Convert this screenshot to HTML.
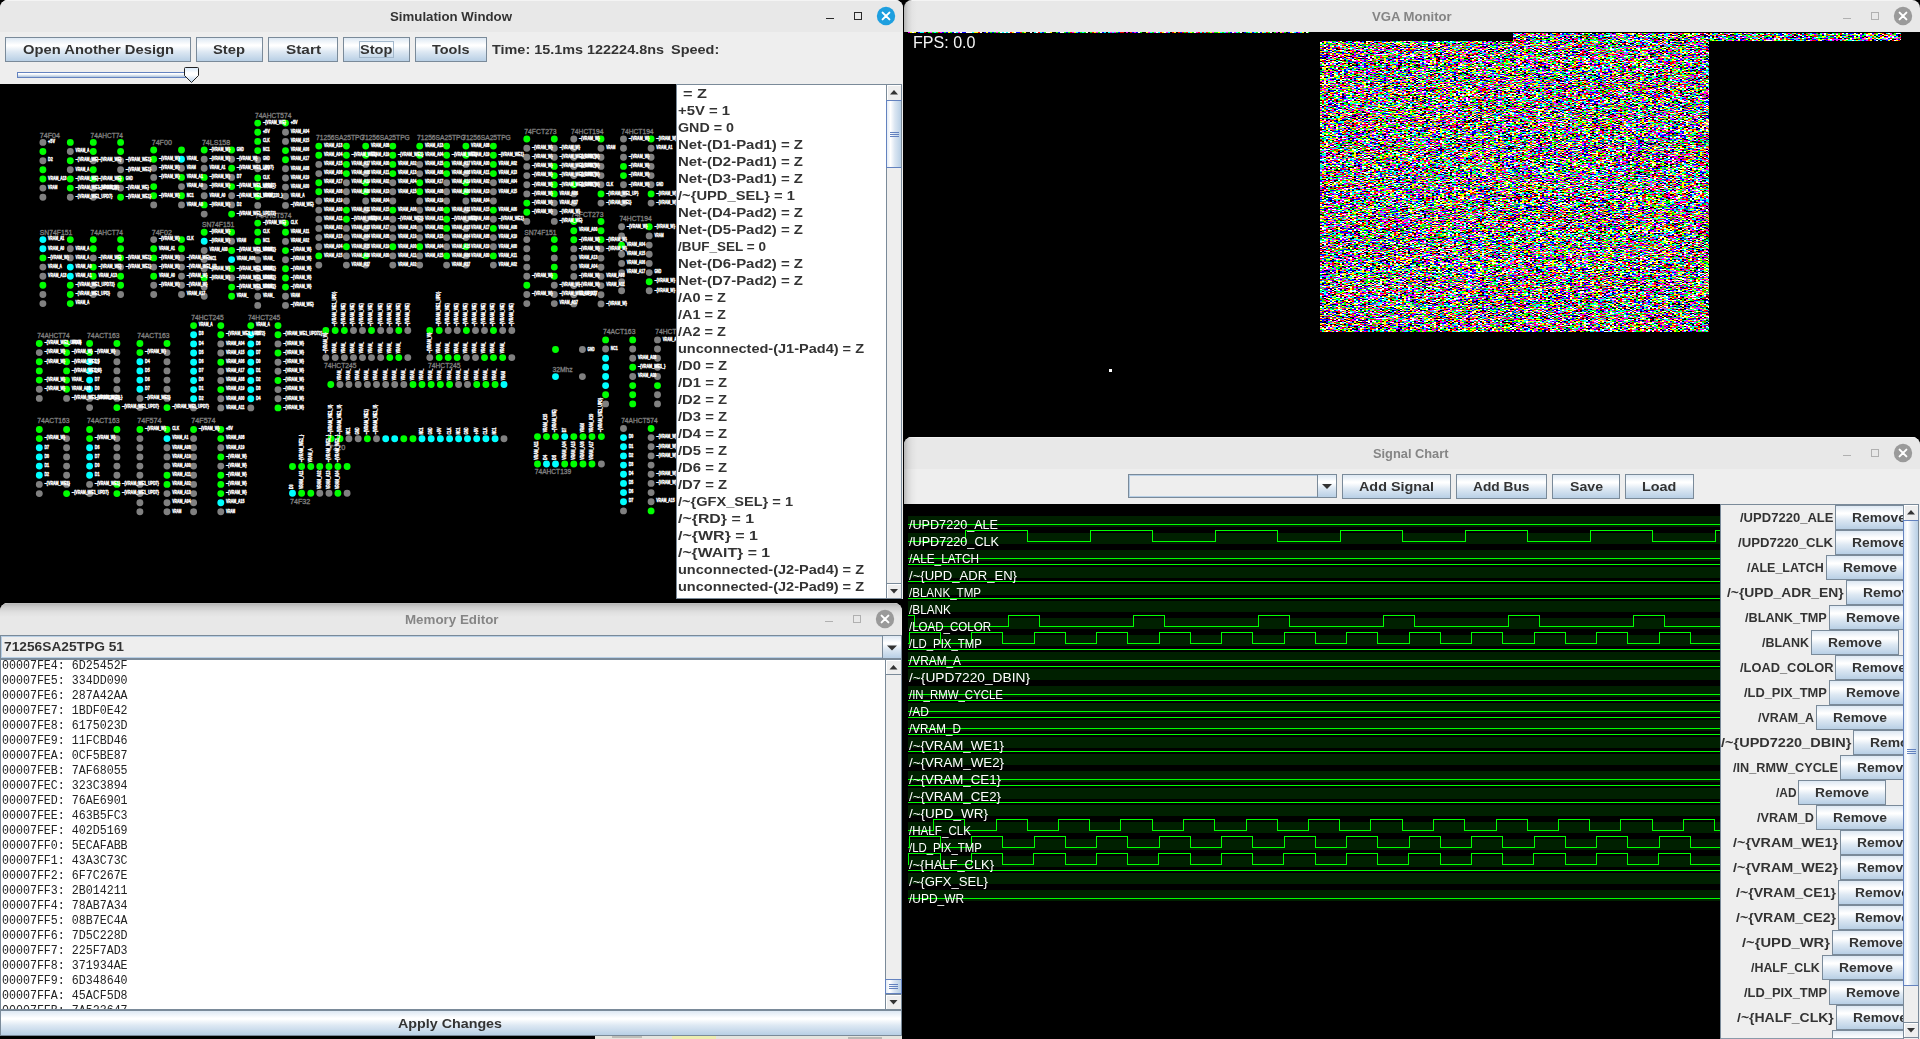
<!DOCTYPE html>
<html><head><meta charset="utf-8"><title>Simulation</title><style>
html,body{margin:0;padding:0;background:#000;overflow:hidden}
body{width:1920px;height:1039px;position:relative;font-family:"Liberation Sans",sans-serif;font-weight:700}
.a{position:absolute;box-sizing:border-box}
.t{position:absolute;white-space:pre;transform-origin:0 50%;display:block}
.btn{border:1px solid #7a8a99;background:linear-gradient(180deg,#dde8f3 0%,#ffffff 30%,#ffffff 34%,#dde8f3 60%,#b8cfe5 100%)}
.m{font-family:"Liberation Mono",monospace}
.tb{background:#e8e8e8;border-top:1px solid #f4f4f4}
.win{background:#eee}
.sbtrack{background:#eee;border-left:1px solid #7a8a99}
.thumbv{border:1px solid #6382bf;background:linear-gradient(90deg,#e4ecf5 0%,#ffffff 25%,#dbe6f2 55%,#b8cfe5 100%)}
.arrbtn{border:1px solid #7a8a99;background:#eee;box-shadow:inset 1px 1px 0 #fff}
</style></head><body>
<div class="a " style="left:0px;top:0px;width:903px;height:599px;background:#eee;border-radius:8px 8px 0 0;overflow:hidden"><div class="a tb" style="left:0px;top:0px;width:903px;height:32px;"></div></div>
<span id="t0" class="t " style="left:390.00px;top:9.70px;font-size:13px;line-height:13px;color:#333;transform:scaleX(1.0187);">Simulation Window</span>
<div class="a " style="left:826px;top:18px;width:8px;height:1px;background:#2a2a2a"></div>
<div class="a " style="left:854px;top:12px;width:8px;height:8px;border:1px solid #2a2a2a"></div>
<svg class="a" style="left:876px;top:6px" width="20" height="20"><circle cx="10" cy="10" r="9.2" fill="#1e9fdf"/><path d="M6.6 6.6L13.4 13.4M13.4 6.6L6.6 13.4" stroke="#fff" stroke-width="2" stroke-linecap="round"/></svg>
<div class="a btn" style="left:5px;top:37px;width:186px;height:25px;"></div><span id="t1" class="t " style="left:22.70px;top:43.00px;font-size:13px;line-height:13px;color:#333;transform:scaleX(1.1341);">Open Another Design</span>
<div class="a btn" style="left:196px;top:37px;width:67px;height:25px;"></div><span id="t2" class="t " style="left:213.40px;top:43.00px;font-size:13px;line-height:13px;color:#333;transform:scaleX(1.1359);">Step</span>
<div class="a btn" style="left:268px;top:37px;width:70px;height:25px;"></div><span id="t3" class="t " style="left:285.50px;top:43.00px;font-size:13px;line-height:13px;color:#333;transform:scaleX(1.1814);">Start</span>
<div class="a btn" style="left:343px;top:37px;width:67px;height:25px;"></div><div class="a " style="left:359px;top:41px;width:35px;height:17px;border:1px solid #a3b8cc;box-sizing:border-box;"></div><span id="t4" class="t " style="left:360.30px;top:43.00px;font-size:13px;line-height:13px;color:#333;transform:scaleX(1.1215);">Stop</span>
<div class="a btn" style="left:415px;top:37px;width:72px;height:25px;"></div><span id="t5" class="t " style="left:432.00px;top:43.00px;font-size:13px;line-height:13px;color:#333;transform:scaleX(1.1127);">Tools</span>
<span id="t6" class="t " style="left:492.40px;top:43.00px;font-size:13px;line-height:13px;color:#333;transform:scaleX(1.1086);">Time: 15.1ms 122224.8ns</span>
<span id="t7" class="t " style="left:670.60px;top:43.00px;font-size:13px;line-height:13px;color:#333;transform:scaleX(1.1120);">Speed:</span>
<div class="a " style="left:17px;top:72px;width:169px;height:6px;border:1px solid #6382bf;background:linear-gradient(180deg,#fff 0,#fdfeff 25%,#a9c0da 100%)"></div>
<svg class="a" style="left:183px;top:66px" width="18" height="19"><defs><linearGradient id="sg" x1="0" y1="0" x2="0" y2="1"><stop offset="0" stop-color="#d6e8fa"/><stop offset="0.35" stop-color="#fff"/><stop offset="0.5" stop-color="#fff"/><stop offset="1" stop-color="#b4cde8"/></linearGradient></defs><path d="M2.5 1.5h12a1 1 0 0 1 1 1v7l-7 7l-7 -7v-7a1 1 0 0 1 1 -1z" fill="url(#sg)" stroke="#222" stroke-width="1"/></svg>
<div class="a " style="left:0px;top:84px;width:676px;height:515px;background:#000"></div>
<svg class="a" style="left:0;top:84px" width="676" height="515" viewBox="0 84 676 515">
<g font-family="Liberation Sans, sans-serif" font-size="6.8" font-weight="400" fill="#808080" stroke="#808080" stroke-width="0.3"><text x="39.8" y="137.7" textLength="20.2" lengthAdjust="spacingAndGlyphs">74F04</text><text x="90.6" y="137.7" textLength="32.4" lengthAdjust="spacingAndGlyphs">74AHCT74</text><text x="151.7" y="144.8" textLength="20.2" lengthAdjust="spacingAndGlyphs">74F00</text><text x="201.9" y="144.8" textLength="28.3" lengthAdjust="spacingAndGlyphs">74LS158</text><text x="255.0" y="117.7" textLength="36.4" lengthAdjust="spacingAndGlyphs">74AHCT574</text><text x="316.0" y="140.4" textLength="48.6" lengthAdjust="spacingAndGlyphs">71256SA25TPG</text><text x="361.2" y="140.4" textLength="48.6" lengthAdjust="spacingAndGlyphs">71256SA25TPG</text><text x="417.0" y="140.4" textLength="48.6" lengthAdjust="spacingAndGlyphs">71256SA25TPG</text><text x="462.2" y="140.4" textLength="48.6" lengthAdjust="spacingAndGlyphs">71256SA25TPG</text><text x="524.2" y="133.6" textLength="32.4" lengthAdjust="spacingAndGlyphs">74FCT273</text><text x="571.1" y="133.6" textLength="32.4" lengthAdjust="spacingAndGlyphs">74HCT194</text><text x="621.2" y="133.6" textLength="32.4" lengthAdjust="spacingAndGlyphs">74HCT194</text><text x="39.8" y="234.6" textLength="32.4" lengthAdjust="spacingAndGlyphs">SN74F151</text><text x="90.6" y="234.6" textLength="32.4" lengthAdjust="spacingAndGlyphs">74AHCT74</text><text x="151.7" y="234.6" textLength="20.2" lengthAdjust="spacingAndGlyphs">74F02</text><text x="201.9" y="226.6" textLength="32.4" lengthAdjust="spacingAndGlyphs">SN74F151</text><text x="255.0" y="217.8" textLength="36.4" lengthAdjust="spacingAndGlyphs">74AHCT574</text><text x="571.1" y="216.9" textLength="32.4" lengthAdjust="spacingAndGlyphs">74FCT273</text><text x="619.4" y="221.3" textLength="32.4" lengthAdjust="spacingAndGlyphs">74HCT194</text><text x="524.2" y="234.6" textLength="32.4" lengthAdjust="spacingAndGlyphs">SN74F151</text><text x="37.2" y="337.9" textLength="32.4" lengthAdjust="spacingAndGlyphs">74AHCT74</text><text x="87.1" y="337.9" textLength="32.4" lengthAdjust="spacingAndGlyphs">74ACT163</text><text x="137.2" y="337.9" textLength="32.4" lengthAdjust="spacingAndGlyphs">74ACT163</text><text x="191.3" y="320.2" textLength="32.4" lengthAdjust="spacingAndGlyphs">74HCT245</text><text x="247.9" y="320.2" textLength="32.4" lengthAdjust="spacingAndGlyphs">74HCT245</text><text x="37.2" y="423.4" textLength="32.4" lengthAdjust="spacingAndGlyphs">74ACT163</text><text x="87.1" y="423.4" textLength="32.4" lengthAdjust="spacingAndGlyphs">74ACT163</text><text x="137.2" y="423.4" textLength="24.3" lengthAdjust="spacingAndGlyphs">74F574</text><text x="191.3" y="423.4" textLength="24.3" lengthAdjust="spacingAndGlyphs">74F574</text><text x="603.0" y="334.0" textLength="32.4" lengthAdjust="spacingAndGlyphs">74ACT163</text><text x="655.2" y="334.0" textLength="32.4" lengthAdjust="spacingAndGlyphs">74HCT194</text><text x="621.2" y="423.4" textLength="36.4" lengthAdjust="spacingAndGlyphs">74AHCT574</text><text x="324.0" y="368.4" textLength="32.4" lengthAdjust="spacingAndGlyphs">74HCT245</text><text x="428.0" y="368.4" textLength="32.4" lengthAdjust="spacingAndGlyphs">74HCT245</text><text x="329.0" y="449.6" textLength="16.2" lengthAdjust="spacingAndGlyphs">7220</text><text x="290.0" y="503.7" textLength="20.2" lengthAdjust="spacingAndGlyphs">74F32</text><text x="534.8" y="474.4" textLength="36.4" lengthAdjust="spacingAndGlyphs">74AHCT139</text><text x="552.5" y="371.6" textLength="20.2" lengthAdjust="spacingAndGlyphs">32Mhz</text></g>
<path d="M42.9 142.4m-3.45 0a3.45 3.45 0 1 0 6.90 0a3.45 3.45 0 1 0 -6.90 0M42.9 160.7m-3.45 0a3.45 3.45 0 1 0 6.90 0a3.45 3.45 0 1 0 -6.90 0M42.9 188.1m-3.45 0a3.45 3.45 0 1 0 6.90 0a3.45 3.45 0 1 0 -6.90 0M42.9 197.3m-3.45 0a3.45 3.45 0 1 0 6.90 0a3.45 3.45 0 1 0 -6.90 0M70.3 151.5m-3.45 0a3.45 3.45 0 1 0 6.90 0a3.45 3.45 0 1 0 -6.90 0M70.3 169.8m-3.45 0a3.45 3.45 0 1 0 6.90 0a3.45 3.45 0 1 0 -6.90 0M70.3 197.3m-3.45 0a3.45 3.45 0 1 0 6.90 0a3.45 3.45 0 1 0 -6.90 0M93.3 160.7m-3.45 0a3.45 3.45 0 1 0 6.90 0a3.45 3.45 0 1 0 -6.90 0M93.3 188.1m-3.45 0a3.45 3.45 0 1 0 6.90 0a3.45 3.45 0 1 0 -6.90 0M93.3 197.3m-3.45 0a3.45 3.45 0 1 0 6.90 0a3.45 3.45 0 1 0 -6.90 0M120.6 160.7m-3.45 0a3.45 3.45 0 1 0 6.90 0a3.45 3.45 0 1 0 -6.90 0M120.6 169.8m-3.45 0a3.45 3.45 0 1 0 6.90 0a3.45 3.45 0 1 0 -6.90 0M120.6 188.1m-3.45 0a3.45 3.45 0 1 0 6.90 0a3.45 3.45 0 1 0 -6.90 0M153.7 168.3m-3.45 0a3.45 3.45 0 1 0 6.90 0a3.45 3.45 0 1 0 -6.90 0M153.7 177.4m-3.45 0a3.45 3.45 0 1 0 6.90 0a3.45 3.45 0 1 0 -6.90 0M153.7 204.9m-3.45 0a3.45 3.45 0 1 0 6.90 0a3.45 3.45 0 1 0 -6.90 0M181.5 168.3m-3.45 0a3.45 3.45 0 1 0 6.90 0a3.45 3.45 0 1 0 -6.90 0M181.5 186.6m-3.45 0a3.45 3.45 0 1 0 6.90 0a3.45 3.45 0 1 0 -6.90 0M181.5 204.9m-3.45 0a3.45 3.45 0 1 0 6.90 0a3.45 3.45 0 1 0 -6.90 0M204.2 159.2m-3.45 0a3.45 3.45 0 1 0 6.90 0a3.45 3.45 0 1 0 -6.90 0M204.2 168.3m-3.45 0a3.45 3.45 0 1 0 6.90 0a3.45 3.45 0 1 0 -6.90 0M204.2 186.6m-3.45 0a3.45 3.45 0 1 0 6.90 0a3.45 3.45 0 1 0 -6.90 0M204.2 195.8m-3.45 0a3.45 3.45 0 1 0 6.90 0a3.45 3.45 0 1 0 -6.90 0M204.2 214.1m-3.45 0a3.45 3.45 0 1 0 6.90 0a3.45 3.45 0 1 0 -6.90 0M231.6 159.2m-3.45 0a3.45 3.45 0 1 0 6.90 0a3.45 3.45 0 1 0 -6.90 0M231.6 177.4m-3.45 0a3.45 3.45 0 1 0 6.90 0a3.45 3.45 0 1 0 -6.90 0M231.6 195.8m-3.45 0a3.45 3.45 0 1 0 6.90 0a3.45 3.45 0 1 0 -6.90 0M231.6 204.9m-3.45 0a3.45 3.45 0 1 0 6.90 0a3.45 3.45 0 1 0 -6.90 0M257.7 159.7m-3.45 0a3.45 3.45 0 1 0 6.90 0a3.45 3.45 0 1 0 -6.90 0M257.7 168.8m-3.45 0a3.45 3.45 0 1 0 6.90 0a3.45 3.45 0 1 0 -6.90 0M257.7 205.4m-3.45 0a3.45 3.45 0 1 0 6.90 0a3.45 3.45 0 1 0 -6.90 0M285.5 132.2m-3.45 0a3.45 3.45 0 1 0 6.90 0a3.45 3.45 0 1 0 -6.90 0M285.5 141.4m-3.45 0a3.45 3.45 0 1 0 6.90 0a3.45 3.45 0 1 0 -6.90 0M285.5 168.8m-3.45 0a3.45 3.45 0 1 0 6.90 0a3.45 3.45 0 1 0 -6.90 0M285.5 178.0m-3.45 0a3.45 3.45 0 1 0 6.90 0a3.45 3.45 0 1 0 -6.90 0M285.5 187.1m-3.45 0a3.45 3.45 0 1 0 6.90 0a3.45 3.45 0 1 0 -6.90 0M285.5 196.3m-3.45 0a3.45 3.45 0 1 0 6.90 0a3.45 3.45 0 1 0 -6.90 0M285.5 205.4m-3.45 0a3.45 3.45 0 1 0 6.90 0a3.45 3.45 0 1 0 -6.90 0M318.8 164.4m-3.45 0a3.45 3.45 0 1 0 6.90 0a3.45 3.45 0 1 0 -6.90 0M318.8 173.6m-3.45 0a3.45 3.45 0 1 0 6.90 0a3.45 3.45 0 1 0 -6.90 0M318.8 201.0m-3.45 0a3.45 3.45 0 1 0 6.90 0a3.45 3.45 0 1 0 -6.90 0M318.8 210.1m-3.45 0a3.45 3.45 0 1 0 6.90 0a3.45 3.45 0 1 0 -6.90 0M318.8 219.3m-3.45 0a3.45 3.45 0 1 0 6.90 0a3.45 3.45 0 1 0 -6.90 0M318.8 228.4m-3.45 0a3.45 3.45 0 1 0 6.90 0a3.45 3.45 0 1 0 -6.90 0M318.8 237.6m-3.45 0a3.45 3.45 0 1 0 6.90 0a3.45 3.45 0 1 0 -6.90 0M318.8 246.8m-3.45 0a3.45 3.45 0 1 0 6.90 0a3.45 3.45 0 1 0 -6.90 0M318.8 265.1m-3.45 0a3.45 3.45 0 1 0 6.90 0a3.45 3.45 0 1 0 -6.90 0M346.4 182.7m-3.45 0a3.45 3.45 0 1 0 6.90 0a3.45 3.45 0 1 0 -6.90 0M346.4 191.8m-3.45 0a3.45 3.45 0 1 0 6.90 0a3.45 3.45 0 1 0 -6.90 0M346.4 201.0m-3.45 0a3.45 3.45 0 1 0 6.90 0a3.45 3.45 0 1 0 -6.90 0M346.4 228.4m-3.45 0a3.45 3.45 0 1 0 6.90 0a3.45 3.45 0 1 0 -6.90 0M346.4 237.6m-3.45 0a3.45 3.45 0 1 0 6.90 0a3.45 3.45 0 1 0 -6.90 0M346.4 255.9m-3.45 0a3.45 3.45 0 1 0 6.90 0a3.45 3.45 0 1 0 -6.90 0M346.4 265.1m-3.45 0a3.45 3.45 0 1 0 6.90 0a3.45 3.45 0 1 0 -6.90 0M365.7 164.4m-3.45 0a3.45 3.45 0 1 0 6.90 0a3.45 3.45 0 1 0 -6.90 0M365.7 173.6m-3.45 0a3.45 3.45 0 1 0 6.90 0a3.45 3.45 0 1 0 -6.90 0M365.7 201.0m-3.45 0a3.45 3.45 0 1 0 6.90 0a3.45 3.45 0 1 0 -6.90 0M365.7 210.1m-3.45 0a3.45 3.45 0 1 0 6.90 0a3.45 3.45 0 1 0 -6.90 0M365.7 219.3m-3.45 0a3.45 3.45 0 1 0 6.90 0a3.45 3.45 0 1 0 -6.90 0M365.7 228.4m-3.45 0a3.45 3.45 0 1 0 6.90 0a3.45 3.45 0 1 0 -6.90 0M365.7 237.6m-3.45 0a3.45 3.45 0 1 0 6.90 0a3.45 3.45 0 1 0 -6.90 0M365.7 246.8m-3.45 0a3.45 3.45 0 1 0 6.90 0a3.45 3.45 0 1 0 -6.90 0M365.7 265.1m-3.45 0a3.45 3.45 0 1 0 6.90 0a3.45 3.45 0 1 0 -6.90 0M392.8 182.7m-3.45 0a3.45 3.45 0 1 0 6.90 0a3.45 3.45 0 1 0 -6.90 0M392.8 191.8m-3.45 0a3.45 3.45 0 1 0 6.90 0a3.45 3.45 0 1 0 -6.90 0M392.8 201.0m-3.45 0a3.45 3.45 0 1 0 6.90 0a3.45 3.45 0 1 0 -6.90 0M392.8 219.3m-3.45 0a3.45 3.45 0 1 0 6.90 0a3.45 3.45 0 1 0 -6.90 0M392.8 228.4m-3.45 0a3.45 3.45 0 1 0 6.90 0a3.45 3.45 0 1 0 -6.90 0M392.8 237.6m-3.45 0a3.45 3.45 0 1 0 6.90 0a3.45 3.45 0 1 0 -6.90 0M392.8 255.9m-3.45 0a3.45 3.45 0 1 0 6.90 0a3.45 3.45 0 1 0 -6.90 0M392.8 265.1m-3.45 0a3.45 3.45 0 1 0 6.90 0a3.45 3.45 0 1 0 -6.90 0M419.7 164.4m-3.45 0a3.45 3.45 0 1 0 6.90 0a3.45 3.45 0 1 0 -6.90 0M419.7 173.6m-3.45 0a3.45 3.45 0 1 0 6.90 0a3.45 3.45 0 1 0 -6.90 0M419.7 201.0m-3.45 0a3.45 3.45 0 1 0 6.90 0a3.45 3.45 0 1 0 -6.90 0M419.7 210.1m-3.45 0a3.45 3.45 0 1 0 6.90 0a3.45 3.45 0 1 0 -6.90 0M419.7 219.3m-3.45 0a3.45 3.45 0 1 0 6.90 0a3.45 3.45 0 1 0 -6.90 0M419.7 228.4m-3.45 0a3.45 3.45 0 1 0 6.90 0a3.45 3.45 0 1 0 -6.90 0M419.7 237.6m-3.45 0a3.45 3.45 0 1 0 6.90 0a3.45 3.45 0 1 0 -6.90 0M419.7 255.9m-3.45 0a3.45 3.45 0 1 0 6.90 0a3.45 3.45 0 1 0 -6.90 0M419.7 265.1m-3.45 0a3.45 3.45 0 1 0 6.90 0a3.45 3.45 0 1 0 -6.90 0M446.6 182.7m-3.45 0a3.45 3.45 0 1 0 6.90 0a3.45 3.45 0 1 0 -6.90 0M446.6 191.8m-3.45 0a3.45 3.45 0 1 0 6.90 0a3.45 3.45 0 1 0 -6.90 0M446.6 201.0m-3.45 0a3.45 3.45 0 1 0 6.90 0a3.45 3.45 0 1 0 -6.90 0M446.6 237.6m-3.45 0a3.45 3.45 0 1 0 6.90 0a3.45 3.45 0 1 0 -6.90 0M446.6 246.8m-3.45 0a3.45 3.45 0 1 0 6.90 0a3.45 3.45 0 1 0 -6.90 0M446.6 265.1m-3.45 0a3.45 3.45 0 1 0 6.90 0a3.45 3.45 0 1 0 -6.90 0M465.9 164.4m-3.45 0a3.45 3.45 0 1 0 6.90 0a3.45 3.45 0 1 0 -6.90 0M465.9 173.6m-3.45 0a3.45 3.45 0 1 0 6.90 0a3.45 3.45 0 1 0 -6.90 0M465.9 201.0m-3.45 0a3.45 3.45 0 1 0 6.90 0a3.45 3.45 0 1 0 -6.90 0M465.9 210.1m-3.45 0a3.45 3.45 0 1 0 6.90 0a3.45 3.45 0 1 0 -6.90 0M465.9 219.3m-3.45 0a3.45 3.45 0 1 0 6.90 0a3.45 3.45 0 1 0 -6.90 0M465.9 228.4m-3.45 0a3.45 3.45 0 1 0 6.90 0a3.45 3.45 0 1 0 -6.90 0M465.9 237.6m-3.45 0a3.45 3.45 0 1 0 6.90 0a3.45 3.45 0 1 0 -6.90 0M465.9 255.9m-3.45 0a3.45 3.45 0 1 0 6.90 0a3.45 3.45 0 1 0 -6.90 0M465.9 265.1m-3.45 0a3.45 3.45 0 1 0 6.90 0a3.45 3.45 0 1 0 -6.90 0M493.4 182.7m-3.45 0a3.45 3.45 0 1 0 6.90 0a3.45 3.45 0 1 0 -6.90 0M493.4 191.8m-3.45 0a3.45 3.45 0 1 0 6.90 0a3.45 3.45 0 1 0 -6.90 0M493.4 201.0m-3.45 0a3.45 3.45 0 1 0 6.90 0a3.45 3.45 0 1 0 -6.90 0M493.4 219.3m-3.45 0a3.45 3.45 0 1 0 6.90 0a3.45 3.45 0 1 0 -6.90 0M493.4 237.6m-3.45 0a3.45 3.45 0 1 0 6.90 0a3.45 3.45 0 1 0 -6.90 0M493.4 246.8m-3.45 0a3.45 3.45 0 1 0 6.90 0a3.45 3.45 0 1 0 -6.90 0M493.4 265.1m-3.45 0a3.45 3.45 0 1 0 6.90 0a3.45 3.45 0 1 0 -6.90 0M526.8 148.2m-3.45 0a3.45 3.45 0 1 0 6.90 0a3.45 3.45 0 1 0 -6.90 0M526.8 157.3m-3.45 0a3.45 3.45 0 1 0 6.90 0a3.45 3.45 0 1 0 -6.90 0M526.8 166.4m-3.45 0a3.45 3.45 0 1 0 6.90 0a3.45 3.45 0 1 0 -6.90 0M526.8 175.6m-3.45 0a3.45 3.45 0 1 0 6.90 0a3.45 3.45 0 1 0 -6.90 0M526.8 184.8m-3.45 0a3.45 3.45 0 1 0 6.90 0a3.45 3.45 0 1 0 -6.90 0M526.8 193.9m-3.45 0a3.45 3.45 0 1 0 6.90 0a3.45 3.45 0 1 0 -6.90 0M526.8 221.4m-3.45 0a3.45 3.45 0 1 0 6.90 0a3.45 3.45 0 1 0 -6.90 0M554.3 148.2m-3.45 0a3.45 3.45 0 1 0 6.90 0a3.45 3.45 0 1 0 -6.90 0M554.3 157.3m-3.45 0a3.45 3.45 0 1 0 6.90 0a3.45 3.45 0 1 0 -6.90 0M554.3 203.1m-3.45 0a3.45 3.45 0 1 0 6.90 0a3.45 3.45 0 1 0 -6.90 0M554.3 212.2m-3.45 0a3.45 3.45 0 1 0 6.90 0a3.45 3.45 0 1 0 -6.90 0M554.3 221.4m-3.45 0a3.45 3.45 0 1 0 6.90 0a3.45 3.45 0 1 0 -6.90 0M573.8 139.0m-3.45 0a3.45 3.45 0 1 0 6.90 0a3.45 3.45 0 1 0 -6.90 0M573.8 148.2m-3.45 0a3.45 3.45 0 1 0 6.90 0a3.45 3.45 0 1 0 -6.90 0M573.8 157.3m-3.45 0a3.45 3.45 0 1 0 6.90 0a3.45 3.45 0 1 0 -6.90 0M573.8 166.4m-3.45 0a3.45 3.45 0 1 0 6.90 0a3.45 3.45 0 1 0 -6.90 0M573.8 175.6m-3.45 0a3.45 3.45 0 1 0 6.90 0a3.45 3.45 0 1 0 -6.90 0M573.8 193.9m-3.45 0a3.45 3.45 0 1 0 6.90 0a3.45 3.45 0 1 0 -6.90 0M573.8 203.1m-3.45 0a3.45 3.45 0 1 0 6.90 0a3.45 3.45 0 1 0 -6.90 0M601.0 148.2m-3.45 0a3.45 3.45 0 1 0 6.90 0a3.45 3.45 0 1 0 -6.90 0M601.0 157.3m-3.45 0a3.45 3.45 0 1 0 6.90 0a3.45 3.45 0 1 0 -6.90 0M601.0 166.4m-3.45 0a3.45 3.45 0 1 0 6.90 0a3.45 3.45 0 1 0 -6.90 0M601.0 175.6m-3.45 0a3.45 3.45 0 1 0 6.90 0a3.45 3.45 0 1 0 -6.90 0M601.0 184.8m-3.45 0a3.45 3.45 0 1 0 6.90 0a3.45 3.45 0 1 0 -6.90 0M601.0 203.1m-3.45 0a3.45 3.45 0 1 0 6.90 0a3.45 3.45 0 1 0 -6.90 0M623.5 139.0m-3.45 0a3.45 3.45 0 1 0 6.90 0a3.45 3.45 0 1 0 -6.90 0M623.5 148.2m-3.45 0a3.45 3.45 0 1 0 6.90 0a3.45 3.45 0 1 0 -6.90 0M623.5 157.3m-3.45 0a3.45 3.45 0 1 0 6.90 0a3.45 3.45 0 1 0 -6.90 0M623.5 184.8m-3.45 0a3.45 3.45 0 1 0 6.90 0a3.45 3.45 0 1 0 -6.90 0M623.5 193.9m-3.45 0a3.45 3.45 0 1 0 6.90 0a3.45 3.45 0 1 0 -6.90 0M623.5 203.1m-3.45 0a3.45 3.45 0 1 0 6.90 0a3.45 3.45 0 1 0 -6.90 0M651.1 148.2m-3.45 0a3.45 3.45 0 1 0 6.90 0a3.45 3.45 0 1 0 -6.90 0M651.1 157.3m-3.45 0a3.45 3.45 0 1 0 6.90 0a3.45 3.45 0 1 0 -6.90 0M651.1 166.4m-3.45 0a3.45 3.45 0 1 0 6.90 0a3.45 3.45 0 1 0 -6.90 0M651.1 175.6m-3.45 0a3.45 3.45 0 1 0 6.90 0a3.45 3.45 0 1 0 -6.90 0M651.1 184.8m-3.45 0a3.45 3.45 0 1 0 6.90 0a3.45 3.45 0 1 0 -6.90 0M651.1 203.1m-3.45 0a3.45 3.45 0 1 0 6.90 0a3.45 3.45 0 1 0 -6.90 0M42.9 267.1m-3.45 0a3.45 3.45 0 1 0 6.90 0a3.45 3.45 0 1 0 -6.90 0M42.9 276.2m-3.45 0a3.45 3.45 0 1 0 6.90 0a3.45 3.45 0 1 0 -6.90 0M42.9 294.5m-3.45 0a3.45 3.45 0 1 0 6.90 0a3.45 3.45 0 1 0 -6.90 0M42.9 303.6m-3.45 0a3.45 3.45 0 1 0 6.90 0a3.45 3.45 0 1 0 -6.90 0M70.3 248.8m-3.45 0a3.45 3.45 0 1 0 6.90 0a3.45 3.45 0 1 0 -6.90 0M70.3 257.9m-3.45 0a3.45 3.45 0 1 0 6.90 0a3.45 3.45 0 1 0 -6.90 0M93.3 257.9m-3.45 0a3.45 3.45 0 1 0 6.90 0a3.45 3.45 0 1 0 -6.90 0M93.3 285.3m-3.45 0a3.45 3.45 0 1 0 6.90 0a3.45 3.45 0 1 0 -6.90 0M93.3 294.5m-3.45 0a3.45 3.45 0 1 0 6.90 0a3.45 3.45 0 1 0 -6.90 0M120.6 267.1m-3.45 0a3.45 3.45 0 1 0 6.90 0a3.45 3.45 0 1 0 -6.90 0M120.6 294.5m-3.45 0a3.45 3.45 0 1 0 6.90 0a3.45 3.45 0 1 0 -6.90 0M153.7 239.6m-3.45 0a3.45 3.45 0 1 0 6.90 0a3.45 3.45 0 1 0 -6.90 0M153.7 267.1m-3.45 0a3.45 3.45 0 1 0 6.90 0a3.45 3.45 0 1 0 -6.90 0M153.7 285.3m-3.45 0a3.45 3.45 0 1 0 6.90 0a3.45 3.45 0 1 0 -6.90 0M153.7 294.5m-3.45 0a3.45 3.45 0 1 0 6.90 0a3.45 3.45 0 1 0 -6.90 0M181.5 257.9m-3.45 0a3.45 3.45 0 1 0 6.90 0a3.45 3.45 0 1 0 -6.90 0M181.5 267.1m-3.45 0a3.45 3.45 0 1 0 6.90 0a3.45 3.45 0 1 0 -6.90 0M181.5 276.2m-3.45 0a3.45 3.45 0 1 0 6.90 0a3.45 3.45 0 1 0 -6.90 0M181.5 285.3m-3.45 0a3.45 3.45 0 1 0 6.90 0a3.45 3.45 0 1 0 -6.90 0M181.5 294.5m-3.45 0a3.45 3.45 0 1 0 6.90 0a3.45 3.45 0 1 0 -6.90 0M204.2 250.5m-3.45 0a3.45 3.45 0 1 0 6.90 0a3.45 3.45 0 1 0 -6.90 0M204.2 259.6m-3.45 0a3.45 3.45 0 1 0 6.90 0a3.45 3.45 0 1 0 -6.90 0M204.2 268.8m-3.45 0a3.45 3.45 0 1 0 6.90 0a3.45 3.45 0 1 0 -6.90 0M204.2 287.1m-3.45 0a3.45 3.45 0 1 0 6.90 0a3.45 3.45 0 1 0 -6.90 0M204.2 296.2m-3.45 0a3.45 3.45 0 1 0 6.90 0a3.45 3.45 0 1 0 -6.90 0M231.6 241.3m-3.45 0a3.45 3.45 0 1 0 6.90 0a3.45 3.45 0 1 0 -6.90 0M231.6 277.9m-3.45 0a3.45 3.45 0 1 0 6.90 0a3.45 3.45 0 1 0 -6.90 0M257.7 250.6m-3.45 0a3.45 3.45 0 1 0 6.90 0a3.45 3.45 0 1 0 -6.90 0M257.7 259.7m-3.45 0a3.45 3.45 0 1 0 6.90 0a3.45 3.45 0 1 0 -6.90 0M257.7 268.8m-3.45 0a3.45 3.45 0 1 0 6.90 0a3.45 3.45 0 1 0 -6.90 0M257.7 278.0m-3.45 0a3.45 3.45 0 1 0 6.90 0a3.45 3.45 0 1 0 -6.90 0M257.7 287.1m-3.45 0a3.45 3.45 0 1 0 6.90 0a3.45 3.45 0 1 0 -6.90 0M257.7 296.3m-3.45 0a3.45 3.45 0 1 0 6.90 0a3.45 3.45 0 1 0 -6.90 0M257.7 305.4m-3.45 0a3.45 3.45 0 1 0 6.90 0a3.45 3.45 0 1 0 -6.90 0M285.5 241.4m-3.45 0a3.45 3.45 0 1 0 6.90 0a3.45 3.45 0 1 0 -6.90 0M285.5 259.7m-3.45 0a3.45 3.45 0 1 0 6.90 0a3.45 3.45 0 1 0 -6.90 0M285.5 296.3m-3.45 0a3.45 3.45 0 1 0 6.90 0a3.45 3.45 0 1 0 -6.90 0M285.5 305.4m-3.45 0a3.45 3.45 0 1 0 6.90 0a3.45 3.45 0 1 0 -6.90 0M573.8 248.9m-3.45 0a3.45 3.45 0 1 0 6.90 0a3.45 3.45 0 1 0 -6.90 0M573.8 258.1m-3.45 0a3.45 3.45 0 1 0 6.90 0a3.45 3.45 0 1 0 -6.90 0M573.8 267.2m-3.45 0a3.45 3.45 0 1 0 6.90 0a3.45 3.45 0 1 0 -6.90 0M573.8 276.4m-3.45 0a3.45 3.45 0 1 0 6.90 0a3.45 3.45 0 1 0 -6.90 0M573.8 285.6m-3.45 0a3.45 3.45 0 1 0 6.90 0a3.45 3.45 0 1 0 -6.90 0M573.8 294.7m-3.45 0a3.45 3.45 0 1 0 6.90 0a3.45 3.45 0 1 0 -6.90 0M573.8 303.9m-3.45 0a3.45 3.45 0 1 0 6.90 0a3.45 3.45 0 1 0 -6.90 0M601.0 248.9m-3.45 0a3.45 3.45 0 1 0 6.90 0a3.45 3.45 0 1 0 -6.90 0M601.0 258.1m-3.45 0a3.45 3.45 0 1 0 6.90 0a3.45 3.45 0 1 0 -6.90 0M601.0 267.2m-3.45 0a3.45 3.45 0 1 0 6.90 0a3.45 3.45 0 1 0 -6.90 0M601.0 276.4m-3.45 0a3.45 3.45 0 1 0 6.90 0a3.45 3.45 0 1 0 -6.90 0M601.0 285.6m-3.45 0a3.45 3.45 0 1 0 6.90 0a3.45 3.45 0 1 0 -6.90 0M601.0 294.7m-3.45 0a3.45 3.45 0 1 0 6.90 0a3.45 3.45 0 1 0 -6.90 0M601.0 303.9m-3.45 0a3.45 3.45 0 1 0 6.90 0a3.45 3.45 0 1 0 -6.90 0M621.6 226.8m-3.45 0a3.45 3.45 0 1 0 6.90 0a3.45 3.45 0 1 0 -6.90 0M621.6 235.9m-3.45 0a3.45 3.45 0 1 0 6.90 0a3.45 3.45 0 1 0 -6.90 0M621.6 254.2m-3.45 0a3.45 3.45 0 1 0 6.90 0a3.45 3.45 0 1 0 -6.90 0M621.6 263.4m-3.45 0a3.45 3.45 0 1 0 6.90 0a3.45 3.45 0 1 0 -6.90 0M621.6 272.6m-3.45 0a3.45 3.45 0 1 0 6.90 0a3.45 3.45 0 1 0 -6.90 0M621.6 281.7m-3.45 0a3.45 3.45 0 1 0 6.90 0a3.45 3.45 0 1 0 -6.90 0M621.6 290.8m-3.45 0a3.45 3.45 0 1 0 6.90 0a3.45 3.45 0 1 0 -6.90 0M649.2 235.9m-3.45 0a3.45 3.45 0 1 0 6.90 0a3.45 3.45 0 1 0 -6.90 0M649.2 245.1m-3.45 0a3.45 3.45 0 1 0 6.90 0a3.45 3.45 0 1 0 -6.90 0M649.2 254.2m-3.45 0a3.45 3.45 0 1 0 6.90 0a3.45 3.45 0 1 0 -6.90 0M649.2 263.4m-3.45 0a3.45 3.45 0 1 0 6.90 0a3.45 3.45 0 1 0 -6.90 0M649.2 272.6m-3.45 0a3.45 3.45 0 1 0 6.90 0a3.45 3.45 0 1 0 -6.90 0M649.2 290.8m-3.45 0a3.45 3.45 0 1 0 6.90 0a3.45 3.45 0 1 0 -6.90 0M526.8 239.6m-3.45 0a3.45 3.45 0 1 0 6.90 0a3.45 3.45 0 1 0 -6.90 0M526.8 248.8m-3.45 0a3.45 3.45 0 1 0 6.90 0a3.45 3.45 0 1 0 -6.90 0M526.8 257.9m-3.45 0a3.45 3.45 0 1 0 6.90 0a3.45 3.45 0 1 0 -6.90 0M526.8 267.1m-3.45 0a3.45 3.45 0 1 0 6.90 0a3.45 3.45 0 1 0 -6.90 0M526.8 276.2m-3.45 0a3.45 3.45 0 1 0 6.90 0a3.45 3.45 0 1 0 -6.90 0M526.8 294.5m-3.45 0a3.45 3.45 0 1 0 6.90 0a3.45 3.45 0 1 0 -6.90 0M526.8 303.6m-3.45 0a3.45 3.45 0 1 0 6.90 0a3.45 3.45 0 1 0 -6.90 0M554.3 257.9m-3.45 0a3.45 3.45 0 1 0 6.90 0a3.45 3.45 0 1 0 -6.90 0M554.3 285.3m-3.45 0a3.45 3.45 0 1 0 6.90 0a3.45 3.45 0 1 0 -6.90 0M554.3 294.5m-3.45 0a3.45 3.45 0 1 0 6.90 0a3.45 3.45 0 1 0 -6.90 0M554.3 303.6m-3.45 0a3.45 3.45 0 1 0 6.90 0a3.45 3.45 0 1 0 -6.90 0M39.3 352.6m-3.45 0a3.45 3.45 0 1 0 6.90 0a3.45 3.45 0 1 0 -6.90 0M39.3 389.2m-3.45 0a3.45 3.45 0 1 0 6.90 0a3.45 3.45 0 1 0 -6.90 0M39.3 398.4m-3.45 0a3.45 3.45 0 1 0 6.90 0a3.45 3.45 0 1 0 -6.90 0M66.6 398.4m-3.45 0a3.45 3.45 0 1 0 6.90 0a3.45 3.45 0 1 0 -6.90 0M89.6 398.4m-3.45 0a3.45 3.45 0 1 0 6.90 0a3.45 3.45 0 1 0 -6.90 0M89.6 407.6m-3.45 0a3.45 3.45 0 1 0 6.90 0a3.45 3.45 0 1 0 -6.90 0M116.9 352.6m-3.45 0a3.45 3.45 0 1 0 6.90 0a3.45 3.45 0 1 0 -6.90 0M116.9 361.8m-3.45 0a3.45 3.45 0 1 0 6.90 0a3.45 3.45 0 1 0 -6.90 0M116.9 370.9m-3.45 0a3.45 3.45 0 1 0 6.90 0a3.45 3.45 0 1 0 -6.90 0M116.9 380.1m-3.45 0a3.45 3.45 0 1 0 6.90 0a3.45 3.45 0 1 0 -6.90 0M116.9 389.2m-3.45 0a3.45 3.45 0 1 0 6.90 0a3.45 3.45 0 1 0 -6.90 0M116.9 398.4m-3.45 0a3.45 3.45 0 1 0 6.90 0a3.45 3.45 0 1 0 -6.90 0M139.9 398.4m-3.45 0a3.45 3.45 0 1 0 6.90 0a3.45 3.45 0 1 0 -6.90 0M139.9 407.6m-3.45 0a3.45 3.45 0 1 0 6.90 0a3.45 3.45 0 1 0 -6.90 0M167.0 352.6m-3.45 0a3.45 3.45 0 1 0 6.90 0a3.45 3.45 0 1 0 -6.90 0M167.0 361.8m-3.45 0a3.45 3.45 0 1 0 6.90 0a3.45 3.45 0 1 0 -6.90 0M167.0 370.9m-3.45 0a3.45 3.45 0 1 0 6.90 0a3.45 3.45 0 1 0 -6.90 0M167.0 380.1m-3.45 0a3.45 3.45 0 1 0 6.90 0a3.45 3.45 0 1 0 -6.90 0M167.0 389.2m-3.45 0a3.45 3.45 0 1 0 6.90 0a3.45 3.45 0 1 0 -6.90 0M167.0 398.4m-3.45 0a3.45 3.45 0 1 0 6.90 0a3.45 3.45 0 1 0 -6.90 0M193.6 407.9m-3.45 0a3.45 3.45 0 1 0 6.90 0a3.45 3.45 0 1 0 -6.90 0M220.8 343.9m-3.45 0a3.45 3.45 0 1 0 6.90 0a3.45 3.45 0 1 0 -6.90 0M220.8 353.0m-3.45 0a3.45 3.45 0 1 0 6.90 0a3.45 3.45 0 1 0 -6.90 0M220.8 371.3m-3.45 0a3.45 3.45 0 1 0 6.90 0a3.45 3.45 0 1 0 -6.90 0M220.8 380.5m-3.45 0a3.45 3.45 0 1 0 6.90 0a3.45 3.45 0 1 0 -6.90 0M220.8 398.8m-3.45 0a3.45 3.45 0 1 0 6.90 0a3.45 3.45 0 1 0 -6.90 0M220.8 407.9m-3.45 0a3.45 3.45 0 1 0 6.90 0a3.45 3.45 0 1 0 -6.90 0M250.8 407.9m-3.45 0a3.45 3.45 0 1 0 6.90 0a3.45 3.45 0 1 0 -6.90 0M278.0 343.9m-3.45 0a3.45 3.45 0 1 0 6.90 0a3.45 3.45 0 1 0 -6.90 0M278.0 362.2m-3.45 0a3.45 3.45 0 1 0 6.90 0a3.45 3.45 0 1 0 -6.90 0M278.0 371.3m-3.45 0a3.45 3.45 0 1 0 6.90 0a3.45 3.45 0 1 0 -6.90 0M278.0 389.6m-3.45 0a3.45 3.45 0 1 0 6.90 0a3.45 3.45 0 1 0 -6.90 0M278.0 398.8m-3.45 0a3.45 3.45 0 1 0 6.90 0a3.45 3.45 0 1 0 -6.90 0M39.3 484.4m-3.45 0a3.45 3.45 0 1 0 6.90 0a3.45 3.45 0 1 0 -6.90 0M39.3 493.6m-3.45 0a3.45 3.45 0 1 0 6.90 0a3.45 3.45 0 1 0 -6.90 0M66.6 438.6m-3.45 0a3.45 3.45 0 1 0 6.90 0a3.45 3.45 0 1 0 -6.90 0M66.6 447.8m-3.45 0a3.45 3.45 0 1 0 6.90 0a3.45 3.45 0 1 0 -6.90 0M66.6 456.9m-3.45 0a3.45 3.45 0 1 0 6.90 0a3.45 3.45 0 1 0 -6.90 0M66.6 466.1m-3.45 0a3.45 3.45 0 1 0 6.90 0a3.45 3.45 0 1 0 -6.90 0M66.6 475.2m-3.45 0a3.45 3.45 0 1 0 6.90 0a3.45 3.45 0 1 0 -6.90 0M66.6 484.4m-3.45 0a3.45 3.45 0 1 0 6.90 0a3.45 3.45 0 1 0 -6.90 0M89.6 484.4m-3.45 0a3.45 3.45 0 1 0 6.90 0a3.45 3.45 0 1 0 -6.90 0M89.6 493.6m-3.45 0a3.45 3.45 0 1 0 6.90 0a3.45 3.45 0 1 0 -6.90 0M116.9 438.6m-3.45 0a3.45 3.45 0 1 0 6.90 0a3.45 3.45 0 1 0 -6.90 0M116.9 447.8m-3.45 0a3.45 3.45 0 1 0 6.90 0a3.45 3.45 0 1 0 -6.90 0M116.9 456.9m-3.45 0a3.45 3.45 0 1 0 6.90 0a3.45 3.45 0 1 0 -6.90 0M116.9 466.1m-3.45 0a3.45 3.45 0 1 0 6.90 0a3.45 3.45 0 1 0 -6.90 0M116.9 475.2m-3.45 0a3.45 3.45 0 1 0 6.90 0a3.45 3.45 0 1 0 -6.90 0M139.9 438.6m-3.45 0a3.45 3.45 0 1 0 6.90 0a3.45 3.45 0 1 0 -6.90 0M139.9 447.8m-3.45 0a3.45 3.45 0 1 0 6.90 0a3.45 3.45 0 1 0 -6.90 0M139.9 456.9m-3.45 0a3.45 3.45 0 1 0 6.90 0a3.45 3.45 0 1 0 -6.90 0M139.9 466.1m-3.45 0a3.45 3.45 0 1 0 6.90 0a3.45 3.45 0 1 0 -6.90 0M139.9 475.2m-3.45 0a3.45 3.45 0 1 0 6.90 0a3.45 3.45 0 1 0 -6.90 0M139.9 484.4m-3.45 0a3.45 3.45 0 1 0 6.90 0a3.45 3.45 0 1 0 -6.90 0M139.9 493.6m-3.45 0a3.45 3.45 0 1 0 6.90 0a3.45 3.45 0 1 0 -6.90 0M139.9 502.7m-3.45 0a3.45 3.45 0 1 0 6.90 0a3.45 3.45 0 1 0 -6.90 0M139.9 511.8m-3.45 0a3.45 3.45 0 1 0 6.90 0a3.45 3.45 0 1 0 -6.90 0M167.0 447.8m-3.45 0a3.45 3.45 0 1 0 6.90 0a3.45 3.45 0 1 0 -6.90 0M167.0 456.9m-3.45 0a3.45 3.45 0 1 0 6.90 0a3.45 3.45 0 1 0 -6.90 0M167.0 466.1m-3.45 0a3.45 3.45 0 1 0 6.90 0a3.45 3.45 0 1 0 -6.90 0M167.0 493.6m-3.45 0a3.45 3.45 0 1 0 6.90 0a3.45 3.45 0 1 0 -6.90 0M167.0 502.7m-3.45 0a3.45 3.45 0 1 0 6.90 0a3.45 3.45 0 1 0 -6.90 0M167.0 511.8m-3.45 0a3.45 3.45 0 1 0 6.90 0a3.45 3.45 0 1 0 -6.90 0M193.6 438.6m-3.45 0a3.45 3.45 0 1 0 6.90 0a3.45 3.45 0 1 0 -6.90 0M193.6 447.8m-3.45 0a3.45 3.45 0 1 0 6.90 0a3.45 3.45 0 1 0 -6.90 0M193.6 456.9m-3.45 0a3.45 3.45 0 1 0 6.90 0a3.45 3.45 0 1 0 -6.90 0M193.6 466.1m-3.45 0a3.45 3.45 0 1 0 6.90 0a3.45 3.45 0 1 0 -6.90 0M193.6 475.2m-3.45 0a3.45 3.45 0 1 0 6.90 0a3.45 3.45 0 1 0 -6.90 0M193.6 484.4m-3.45 0a3.45 3.45 0 1 0 6.90 0a3.45 3.45 0 1 0 -6.90 0M193.6 493.6m-3.45 0a3.45 3.45 0 1 0 6.90 0a3.45 3.45 0 1 0 -6.90 0M193.6 502.7m-3.45 0a3.45 3.45 0 1 0 6.90 0a3.45 3.45 0 1 0 -6.90 0M193.6 511.8m-3.45 0a3.45 3.45 0 1 0 6.90 0a3.45 3.45 0 1 0 -6.90 0M220.8 447.8m-3.45 0a3.45 3.45 0 1 0 6.90 0a3.45 3.45 0 1 0 -6.90 0M220.8 466.1m-3.45 0a3.45 3.45 0 1 0 6.90 0a3.45 3.45 0 1 0 -6.90 0M220.8 511.8m-3.45 0a3.45 3.45 0 1 0 6.90 0a3.45 3.45 0 1 0 -6.90 0M605.6 349.0m-3.45 0a3.45 3.45 0 1 0 6.90 0a3.45 3.45 0 1 0 -6.90 0M605.6 403.9m-3.45 0a3.45 3.45 0 1 0 6.90 0a3.45 3.45 0 1 0 -6.90 0M632.7 349.0m-3.45 0a3.45 3.45 0 1 0 6.90 0a3.45 3.45 0 1 0 -6.90 0M632.7 358.2m-3.45 0a3.45 3.45 0 1 0 6.90 0a3.45 3.45 0 1 0 -6.90 0M632.7 376.5m-3.45 0a3.45 3.45 0 1 0 6.90 0a3.45 3.45 0 1 0 -6.90 0M657.5 339.9m-3.45 0a3.45 3.45 0 1 0 6.90 0a3.45 3.45 0 1 0 -6.90 0M657.5 349.0m-3.45 0a3.45 3.45 0 1 0 6.90 0a3.45 3.45 0 1 0 -6.90 0M657.5 358.2m-3.45 0a3.45 3.45 0 1 0 6.90 0a3.45 3.45 0 1 0 -6.90 0M657.5 367.3m-3.45 0a3.45 3.45 0 1 0 6.90 0a3.45 3.45 0 1 0 -6.90 0M657.5 376.5m-3.45 0a3.45 3.45 0 1 0 6.90 0a3.45 3.45 0 1 0 -6.90 0M657.5 394.8m-3.45 0a3.45 3.45 0 1 0 6.90 0a3.45 3.45 0 1 0 -6.90 0M657.5 403.9m-3.45 0a3.45 3.45 0 1 0 6.90 0a3.45 3.45 0 1 0 -6.90 0M684.9 339.9m-3.45 0a3.45 3.45 0 1 0 6.90 0a3.45 3.45 0 1 0 -6.90 0M684.9 349.0m-3.45 0a3.45 3.45 0 1 0 6.90 0a3.45 3.45 0 1 0 -6.90 0M684.9 358.2m-3.45 0a3.45 3.45 0 1 0 6.90 0a3.45 3.45 0 1 0 -6.90 0M684.9 367.3m-3.45 0a3.45 3.45 0 1 0 6.90 0a3.45 3.45 0 1 0 -6.90 0M684.9 376.5m-3.45 0a3.45 3.45 0 1 0 6.90 0a3.45 3.45 0 1 0 -6.90 0M684.9 385.6m-3.45 0a3.45 3.45 0 1 0 6.90 0a3.45 3.45 0 1 0 -6.90 0M684.9 394.8m-3.45 0a3.45 3.45 0 1 0 6.90 0a3.45 3.45 0 1 0 -6.90 0M684.9 403.9m-3.45 0a3.45 3.45 0 1 0 6.90 0a3.45 3.45 0 1 0 -6.90 0M623.5 428.5m-3.45 0a3.45 3.45 0 1 0 6.90 0a3.45 3.45 0 1 0 -6.90 0M623.5 510.9m-3.45 0a3.45 3.45 0 1 0 6.90 0a3.45 3.45 0 1 0 -6.90 0M651.1 437.6m-3.45 0a3.45 3.45 0 1 0 6.90 0a3.45 3.45 0 1 0 -6.90 0M651.1 446.8m-3.45 0a3.45 3.45 0 1 0 6.90 0a3.45 3.45 0 1 0 -6.90 0M651.1 455.9m-3.45 0a3.45 3.45 0 1 0 6.90 0a3.45 3.45 0 1 0 -6.90 0M651.1 465.1m-3.45 0a3.45 3.45 0 1 0 6.90 0a3.45 3.45 0 1 0 -6.90 0M651.1 474.2m-3.45 0a3.45 3.45 0 1 0 6.90 0a3.45 3.45 0 1 0 -6.90 0M651.1 483.4m-3.45 0a3.45 3.45 0 1 0 6.90 0a3.45 3.45 0 1 0 -6.90 0M651.1 492.6m-3.45 0a3.45 3.45 0 1 0 6.90 0a3.45 3.45 0 1 0 -6.90 0M651.1 501.7m-3.45 0a3.45 3.45 0 1 0 6.90 0a3.45 3.45 0 1 0 -6.90 0M353.5 330.5m-3.45 0a3.45 3.45 0 1 0 6.90 0a3.45 3.45 0 1 0 -6.90 0M362.5 330.5m-3.45 0a3.45 3.45 0 1 0 6.90 0a3.45 3.45 0 1 0 -6.90 0M380.7 330.5m-3.45 0a3.45 3.45 0 1 0 6.90 0a3.45 3.45 0 1 0 -6.90 0M389.8 330.5m-3.45 0a3.45 3.45 0 1 0 6.90 0a3.45 3.45 0 1 0 -6.90 0M407.8 330.5m-3.45 0a3.45 3.45 0 1 0 6.90 0a3.45 3.45 0 1 0 -6.90 0M325.8 357.6m-3.45 0a3.45 3.45 0 1 0 6.90 0a3.45 3.45 0 1 0 -6.90 0M335.2 357.6m-3.45 0a3.45 3.45 0 1 0 6.90 0a3.45 3.45 0 1 0 -6.90 0M344.4 357.6m-3.45 0a3.45 3.45 0 1 0 6.90 0a3.45 3.45 0 1 0 -6.90 0M353.5 357.6m-3.45 0a3.45 3.45 0 1 0 6.90 0a3.45 3.45 0 1 0 -6.90 0M362.5 357.6m-3.45 0a3.45 3.45 0 1 0 6.90 0a3.45 3.45 0 1 0 -6.90 0M371.5 357.6m-3.45 0a3.45 3.45 0 1 0 6.90 0a3.45 3.45 0 1 0 -6.90 0M380.7 357.6m-3.45 0a3.45 3.45 0 1 0 6.90 0a3.45 3.45 0 1 0 -6.90 0M407.8 357.6m-3.45 0a3.45 3.45 0 1 0 6.90 0a3.45 3.45 0 1 0 -6.90 0M448.2 330.5m-3.45 0a3.45 3.45 0 1 0 6.90 0a3.45 3.45 0 1 0 -6.90 0M457.2 330.5m-3.45 0a3.45 3.45 0 1 0 6.90 0a3.45 3.45 0 1 0 -6.90 0M475.5 330.5m-3.45 0a3.45 3.45 0 1 0 6.90 0a3.45 3.45 0 1 0 -6.90 0M484.5 330.5m-3.45 0a3.45 3.45 0 1 0 6.90 0a3.45 3.45 0 1 0 -6.90 0M502.7 330.5m-3.45 0a3.45 3.45 0 1 0 6.90 0a3.45 3.45 0 1 0 -6.90 0M511.8 330.5m-3.45 0a3.45 3.45 0 1 0 6.90 0a3.45 3.45 0 1 0 -6.90 0M429.8 357.6m-3.45 0a3.45 3.45 0 1 0 6.90 0a3.45 3.45 0 1 0 -6.90 0M466.4 357.6m-3.45 0a3.45 3.45 0 1 0 6.90 0a3.45 3.45 0 1 0 -6.90 0M475.5 357.6m-3.45 0a3.45 3.45 0 1 0 6.90 0a3.45 3.45 0 1 0 -6.90 0M511.8 357.6m-3.45 0a3.45 3.45 0 1 0 6.90 0a3.45 3.45 0 1 0 -6.90 0M340.0 384.5m-3.45 0a3.45 3.45 0 1 0 6.90 0a3.45 3.45 0 1 0 -6.90 0M348.9 384.5m-3.45 0a3.45 3.45 0 1 0 6.90 0a3.45 3.45 0 1 0 -6.90 0M358.2 384.5m-3.45 0a3.45 3.45 0 1 0 6.90 0a3.45 3.45 0 1 0 -6.90 0M367.4 384.5m-3.45 0a3.45 3.45 0 1 0 6.90 0a3.45 3.45 0 1 0 -6.90 0M376.5 384.5m-3.45 0a3.45 3.45 0 1 0 6.90 0a3.45 3.45 0 1 0 -6.90 0M385.7 384.5m-3.45 0a3.45 3.45 0 1 0 6.90 0a3.45 3.45 0 1 0 -6.90 0M394.7 384.5m-3.45 0a3.45 3.45 0 1 0 6.90 0a3.45 3.45 0 1 0 -6.90 0M403.8 384.5m-3.45 0a3.45 3.45 0 1 0 6.90 0a3.45 3.45 0 1 0 -6.90 0M458.6 384.5m-3.45 0a3.45 3.45 0 1 0 6.90 0a3.45 3.45 0 1 0 -6.90 0M467.5 384.5m-3.45 0a3.45 3.45 0 1 0 6.90 0a3.45 3.45 0 1 0 -6.90 0M348.9 438.7m-3.45 0a3.45 3.45 0 1 0 6.90 0a3.45 3.45 0 1 0 -6.90 0M358.2 438.7m-3.45 0a3.45 3.45 0 1 0 6.90 0a3.45 3.45 0 1 0 -6.90 0M376.5 438.7m-3.45 0a3.45 3.45 0 1 0 6.90 0a3.45 3.45 0 1 0 -6.90 0M504.0 438.7m-3.45 0a3.45 3.45 0 1 0 6.90 0a3.45 3.45 0 1 0 -6.90 0M319.8 493.3m-3.45 0a3.45 3.45 0 1 0 6.90 0a3.45 3.45 0 1 0 -6.90 0M329.0 493.3m-3.45 0a3.45 3.45 0 1 0 6.90 0a3.45 3.45 0 1 0 -6.90 0M347.1 493.3m-3.45 0a3.45 3.45 0 1 0 6.90 0a3.45 3.45 0 1 0 -6.90 0M601.4 464.0m-3.45 0a3.45 3.45 0 1 0 6.90 0a3.45 3.45 0 1 0 -6.90 0M582.4 376.6m-3.45 0a3.45 3.45 0 1 0 6.90 0a3.45 3.45 0 1 0 -6.90 0M582.4 349.5m-3.45 0a3.45 3.45 0 1 0 6.90 0a3.45 3.45 0 1 0 -6.90 0" fill="#808080"/>
<path d="M42.9 151.5m-3.45 0a3.45 3.45 0 1 0 6.90 0a3.45 3.45 0 1 0 -6.90 0M42.9 169.8m-3.45 0a3.45 3.45 0 1 0 6.90 0a3.45 3.45 0 1 0 -6.90 0M42.9 179.0m-3.45 0a3.45 3.45 0 1 0 6.90 0a3.45 3.45 0 1 0 -6.90 0M70.3 142.4m-3.45 0a3.45 3.45 0 1 0 6.90 0a3.45 3.45 0 1 0 -6.90 0M70.3 160.7m-3.45 0a3.45 3.45 0 1 0 6.90 0a3.45 3.45 0 1 0 -6.90 0M70.3 179.0m-3.45 0a3.45 3.45 0 1 0 6.90 0a3.45 3.45 0 1 0 -6.90 0M70.3 188.1m-3.45 0a3.45 3.45 0 1 0 6.90 0a3.45 3.45 0 1 0 -6.90 0M93.3 142.4m-3.45 0a3.45 3.45 0 1 0 6.90 0a3.45 3.45 0 1 0 -6.90 0M93.3 151.5m-3.45 0a3.45 3.45 0 1 0 6.90 0a3.45 3.45 0 1 0 -6.90 0M93.3 169.8m-3.45 0a3.45 3.45 0 1 0 6.90 0a3.45 3.45 0 1 0 -6.90 0M93.3 179.0m-3.45 0a3.45 3.45 0 1 0 6.90 0a3.45 3.45 0 1 0 -6.90 0M120.6 142.4m-3.45 0a3.45 3.45 0 1 0 6.90 0a3.45 3.45 0 1 0 -6.90 0M120.6 151.5m-3.45 0a3.45 3.45 0 1 0 6.90 0a3.45 3.45 0 1 0 -6.90 0M120.6 179.0m-3.45 0a3.45 3.45 0 1 0 6.90 0a3.45 3.45 0 1 0 -6.90 0M120.6 197.3m-3.45 0a3.45 3.45 0 1 0 6.90 0a3.45 3.45 0 1 0 -6.90 0M153.7 150.0m-3.45 0a3.45 3.45 0 1 0 6.90 0a3.45 3.45 0 1 0 -6.90 0M153.7 159.2m-3.45 0a3.45 3.45 0 1 0 6.90 0a3.45 3.45 0 1 0 -6.90 0M153.7 186.6m-3.45 0a3.45 3.45 0 1 0 6.90 0a3.45 3.45 0 1 0 -6.90 0M153.7 195.8m-3.45 0a3.45 3.45 0 1 0 6.90 0a3.45 3.45 0 1 0 -6.90 0M181.5 150.0m-3.45 0a3.45 3.45 0 1 0 6.90 0a3.45 3.45 0 1 0 -6.90 0M181.5 177.4m-3.45 0a3.45 3.45 0 1 0 6.90 0a3.45 3.45 0 1 0 -6.90 0M181.5 195.8m-3.45 0a3.45 3.45 0 1 0 6.90 0a3.45 3.45 0 1 0 -6.90 0M204.2 150.0m-3.45 0a3.45 3.45 0 1 0 6.90 0a3.45 3.45 0 1 0 -6.90 0M204.2 177.4m-3.45 0a3.45 3.45 0 1 0 6.90 0a3.45 3.45 0 1 0 -6.90 0M204.2 204.9m-3.45 0a3.45 3.45 0 1 0 6.90 0a3.45 3.45 0 1 0 -6.90 0M231.6 150.0m-3.45 0a3.45 3.45 0 1 0 6.90 0a3.45 3.45 0 1 0 -6.90 0M231.6 168.3m-3.45 0a3.45 3.45 0 1 0 6.90 0a3.45 3.45 0 1 0 -6.90 0M231.6 186.6m-3.45 0a3.45 3.45 0 1 0 6.90 0a3.45 3.45 0 1 0 -6.90 0M231.6 214.1m-3.45 0a3.45 3.45 0 1 0 6.90 0a3.45 3.45 0 1 0 -6.90 0M257.7 123.1m-3.45 0a3.45 3.45 0 1 0 6.90 0a3.45 3.45 0 1 0 -6.90 0M257.7 132.2m-3.45 0a3.45 3.45 0 1 0 6.90 0a3.45 3.45 0 1 0 -6.90 0M257.7 141.4m-3.45 0a3.45 3.45 0 1 0 6.90 0a3.45 3.45 0 1 0 -6.90 0M257.7 150.6m-3.45 0a3.45 3.45 0 1 0 6.90 0a3.45 3.45 0 1 0 -6.90 0M257.7 178.0m-3.45 0a3.45 3.45 0 1 0 6.90 0a3.45 3.45 0 1 0 -6.90 0M257.7 187.1m-3.45 0a3.45 3.45 0 1 0 6.90 0a3.45 3.45 0 1 0 -6.90 0M257.7 196.3m-3.45 0a3.45 3.45 0 1 0 6.90 0a3.45 3.45 0 1 0 -6.90 0M285.5 123.1m-3.45 0a3.45 3.45 0 1 0 6.90 0a3.45 3.45 0 1 0 -6.90 0M285.5 150.6m-3.45 0a3.45 3.45 0 1 0 6.90 0a3.45 3.45 0 1 0 -6.90 0M285.5 159.7m-3.45 0a3.45 3.45 0 1 0 6.90 0a3.45 3.45 0 1 0 -6.90 0M318.8 146.1m-3.45 0a3.45 3.45 0 1 0 6.90 0a3.45 3.45 0 1 0 -6.90 0M318.8 155.2m-3.45 0a3.45 3.45 0 1 0 6.90 0a3.45 3.45 0 1 0 -6.90 0M318.8 182.7m-3.45 0a3.45 3.45 0 1 0 6.90 0a3.45 3.45 0 1 0 -6.90 0M318.8 191.8m-3.45 0a3.45 3.45 0 1 0 6.90 0a3.45 3.45 0 1 0 -6.90 0M318.8 255.9m-3.45 0a3.45 3.45 0 1 0 6.90 0a3.45 3.45 0 1 0 -6.90 0M346.4 146.1m-3.45 0a3.45 3.45 0 1 0 6.90 0a3.45 3.45 0 1 0 -6.90 0M346.4 155.2m-3.45 0a3.45 3.45 0 1 0 6.90 0a3.45 3.45 0 1 0 -6.90 0M346.4 164.4m-3.45 0a3.45 3.45 0 1 0 6.90 0a3.45 3.45 0 1 0 -6.90 0M346.4 173.6m-3.45 0a3.45 3.45 0 1 0 6.90 0a3.45 3.45 0 1 0 -6.90 0M346.4 210.1m-3.45 0a3.45 3.45 0 1 0 6.90 0a3.45 3.45 0 1 0 -6.90 0M346.4 219.3m-3.45 0a3.45 3.45 0 1 0 6.90 0a3.45 3.45 0 1 0 -6.90 0M346.4 246.8m-3.45 0a3.45 3.45 0 1 0 6.90 0a3.45 3.45 0 1 0 -6.90 0M365.7 146.1m-3.45 0a3.45 3.45 0 1 0 6.90 0a3.45 3.45 0 1 0 -6.90 0M365.7 155.2m-3.45 0a3.45 3.45 0 1 0 6.90 0a3.45 3.45 0 1 0 -6.90 0M365.7 182.7m-3.45 0a3.45 3.45 0 1 0 6.90 0a3.45 3.45 0 1 0 -6.90 0M365.7 191.8m-3.45 0a3.45 3.45 0 1 0 6.90 0a3.45 3.45 0 1 0 -6.90 0M365.7 255.9m-3.45 0a3.45 3.45 0 1 0 6.90 0a3.45 3.45 0 1 0 -6.90 0M392.8 146.1m-3.45 0a3.45 3.45 0 1 0 6.90 0a3.45 3.45 0 1 0 -6.90 0M392.8 155.2m-3.45 0a3.45 3.45 0 1 0 6.90 0a3.45 3.45 0 1 0 -6.90 0M392.8 164.4m-3.45 0a3.45 3.45 0 1 0 6.90 0a3.45 3.45 0 1 0 -6.90 0M392.8 173.6m-3.45 0a3.45 3.45 0 1 0 6.90 0a3.45 3.45 0 1 0 -6.90 0M392.8 210.1m-3.45 0a3.45 3.45 0 1 0 6.90 0a3.45 3.45 0 1 0 -6.90 0M392.8 246.8m-3.45 0a3.45 3.45 0 1 0 6.90 0a3.45 3.45 0 1 0 -6.90 0M419.7 146.1m-3.45 0a3.45 3.45 0 1 0 6.90 0a3.45 3.45 0 1 0 -6.90 0M419.7 155.2m-3.45 0a3.45 3.45 0 1 0 6.90 0a3.45 3.45 0 1 0 -6.90 0M419.7 182.7m-3.45 0a3.45 3.45 0 1 0 6.90 0a3.45 3.45 0 1 0 -6.90 0M419.7 191.8m-3.45 0a3.45 3.45 0 1 0 6.90 0a3.45 3.45 0 1 0 -6.90 0M419.7 246.8m-3.45 0a3.45 3.45 0 1 0 6.90 0a3.45 3.45 0 1 0 -6.90 0M446.6 146.1m-3.45 0a3.45 3.45 0 1 0 6.90 0a3.45 3.45 0 1 0 -6.90 0M446.6 155.2m-3.45 0a3.45 3.45 0 1 0 6.90 0a3.45 3.45 0 1 0 -6.90 0M446.6 164.4m-3.45 0a3.45 3.45 0 1 0 6.90 0a3.45 3.45 0 1 0 -6.90 0M446.6 173.6m-3.45 0a3.45 3.45 0 1 0 6.90 0a3.45 3.45 0 1 0 -6.90 0M446.6 210.1m-3.45 0a3.45 3.45 0 1 0 6.90 0a3.45 3.45 0 1 0 -6.90 0M446.6 219.3m-3.45 0a3.45 3.45 0 1 0 6.90 0a3.45 3.45 0 1 0 -6.90 0M446.6 228.4m-3.45 0a3.45 3.45 0 1 0 6.90 0a3.45 3.45 0 1 0 -6.90 0M446.6 255.9m-3.45 0a3.45 3.45 0 1 0 6.90 0a3.45 3.45 0 1 0 -6.90 0M465.9 146.1m-3.45 0a3.45 3.45 0 1 0 6.90 0a3.45 3.45 0 1 0 -6.90 0M465.9 155.2m-3.45 0a3.45 3.45 0 1 0 6.90 0a3.45 3.45 0 1 0 -6.90 0M465.9 182.7m-3.45 0a3.45 3.45 0 1 0 6.90 0a3.45 3.45 0 1 0 -6.90 0M465.9 191.8m-3.45 0a3.45 3.45 0 1 0 6.90 0a3.45 3.45 0 1 0 -6.90 0M465.9 246.8m-3.45 0a3.45 3.45 0 1 0 6.90 0a3.45 3.45 0 1 0 -6.90 0M493.4 146.1m-3.45 0a3.45 3.45 0 1 0 6.90 0a3.45 3.45 0 1 0 -6.90 0M493.4 155.2m-3.45 0a3.45 3.45 0 1 0 6.90 0a3.45 3.45 0 1 0 -6.90 0M493.4 164.4m-3.45 0a3.45 3.45 0 1 0 6.90 0a3.45 3.45 0 1 0 -6.90 0M493.4 173.6m-3.45 0a3.45 3.45 0 1 0 6.90 0a3.45 3.45 0 1 0 -6.90 0M493.4 210.1m-3.45 0a3.45 3.45 0 1 0 6.90 0a3.45 3.45 0 1 0 -6.90 0M493.4 228.4m-3.45 0a3.45 3.45 0 1 0 6.90 0a3.45 3.45 0 1 0 -6.90 0M493.4 255.9m-3.45 0a3.45 3.45 0 1 0 6.90 0a3.45 3.45 0 1 0 -6.90 0M526.8 139.0m-3.45 0a3.45 3.45 0 1 0 6.90 0a3.45 3.45 0 1 0 -6.90 0M526.8 203.1m-3.45 0a3.45 3.45 0 1 0 6.90 0a3.45 3.45 0 1 0 -6.90 0M526.8 212.2m-3.45 0a3.45 3.45 0 1 0 6.90 0a3.45 3.45 0 1 0 -6.90 0M554.3 139.0m-3.45 0a3.45 3.45 0 1 0 6.90 0a3.45 3.45 0 1 0 -6.90 0M554.3 166.4m-3.45 0a3.45 3.45 0 1 0 6.90 0a3.45 3.45 0 1 0 -6.90 0M554.3 175.6m-3.45 0a3.45 3.45 0 1 0 6.90 0a3.45 3.45 0 1 0 -6.90 0M554.3 184.8m-3.45 0a3.45 3.45 0 1 0 6.90 0a3.45 3.45 0 1 0 -6.90 0M554.3 193.9m-3.45 0a3.45 3.45 0 1 0 6.90 0a3.45 3.45 0 1 0 -6.90 0M573.8 184.8m-3.45 0a3.45 3.45 0 1 0 6.90 0a3.45 3.45 0 1 0 -6.90 0M601.0 139.0m-3.45 0a3.45 3.45 0 1 0 6.90 0a3.45 3.45 0 1 0 -6.90 0M601.0 193.9m-3.45 0a3.45 3.45 0 1 0 6.90 0a3.45 3.45 0 1 0 -6.90 0M623.5 166.4m-3.45 0a3.45 3.45 0 1 0 6.90 0a3.45 3.45 0 1 0 -6.90 0M623.5 175.6m-3.45 0a3.45 3.45 0 1 0 6.90 0a3.45 3.45 0 1 0 -6.90 0M651.1 139.0m-3.45 0a3.45 3.45 0 1 0 6.90 0a3.45 3.45 0 1 0 -6.90 0M651.1 193.9m-3.45 0a3.45 3.45 0 1 0 6.90 0a3.45 3.45 0 1 0 -6.90 0M42.9 257.9m-3.45 0a3.45 3.45 0 1 0 6.90 0a3.45 3.45 0 1 0 -6.90 0M42.9 285.3m-3.45 0a3.45 3.45 0 1 0 6.90 0a3.45 3.45 0 1 0 -6.90 0M70.3 239.6m-3.45 0a3.45 3.45 0 1 0 6.90 0a3.45 3.45 0 1 0 -6.90 0M70.3 285.3m-3.45 0a3.45 3.45 0 1 0 6.90 0a3.45 3.45 0 1 0 -6.90 0M70.3 294.5m-3.45 0a3.45 3.45 0 1 0 6.90 0a3.45 3.45 0 1 0 -6.90 0M70.3 303.6m-3.45 0a3.45 3.45 0 1 0 6.90 0a3.45 3.45 0 1 0 -6.90 0M93.3 239.6m-3.45 0a3.45 3.45 0 1 0 6.90 0a3.45 3.45 0 1 0 -6.90 0M93.3 248.8m-3.45 0a3.45 3.45 0 1 0 6.90 0a3.45 3.45 0 1 0 -6.90 0M93.3 267.1m-3.45 0a3.45 3.45 0 1 0 6.90 0a3.45 3.45 0 1 0 -6.90 0M93.3 276.2m-3.45 0a3.45 3.45 0 1 0 6.90 0a3.45 3.45 0 1 0 -6.90 0M120.6 239.6m-3.45 0a3.45 3.45 0 1 0 6.90 0a3.45 3.45 0 1 0 -6.90 0M120.6 248.8m-3.45 0a3.45 3.45 0 1 0 6.90 0a3.45 3.45 0 1 0 -6.90 0M120.6 257.9m-3.45 0a3.45 3.45 0 1 0 6.90 0a3.45 3.45 0 1 0 -6.90 0M120.6 276.2m-3.45 0a3.45 3.45 0 1 0 6.90 0a3.45 3.45 0 1 0 -6.90 0M120.6 285.3m-3.45 0a3.45 3.45 0 1 0 6.90 0a3.45 3.45 0 1 0 -6.90 0M153.7 248.8m-3.45 0a3.45 3.45 0 1 0 6.90 0a3.45 3.45 0 1 0 -6.90 0M153.7 257.9m-3.45 0a3.45 3.45 0 1 0 6.90 0a3.45 3.45 0 1 0 -6.90 0M153.7 276.2m-3.45 0a3.45 3.45 0 1 0 6.90 0a3.45 3.45 0 1 0 -6.90 0M181.5 239.6m-3.45 0a3.45 3.45 0 1 0 6.90 0a3.45 3.45 0 1 0 -6.90 0M181.5 248.8m-3.45 0a3.45 3.45 0 1 0 6.90 0a3.45 3.45 0 1 0 -6.90 0M204.2 232.2m-3.45 0a3.45 3.45 0 1 0 6.90 0a3.45 3.45 0 1 0 -6.90 0M204.2 277.9m-3.45 0a3.45 3.45 0 1 0 6.90 0a3.45 3.45 0 1 0 -6.90 0M231.6 232.2m-3.45 0a3.45 3.45 0 1 0 6.90 0a3.45 3.45 0 1 0 -6.90 0M231.6 250.5m-3.45 0a3.45 3.45 0 1 0 6.90 0a3.45 3.45 0 1 0 -6.90 0M231.6 268.8m-3.45 0a3.45 3.45 0 1 0 6.90 0a3.45 3.45 0 1 0 -6.90 0M231.6 287.1m-3.45 0a3.45 3.45 0 1 0 6.90 0a3.45 3.45 0 1 0 -6.90 0M231.6 296.2m-3.45 0a3.45 3.45 0 1 0 6.90 0a3.45 3.45 0 1 0 -6.90 0M257.7 223.1m-3.45 0a3.45 3.45 0 1 0 6.90 0a3.45 3.45 0 1 0 -6.90 0M257.7 232.2m-3.45 0a3.45 3.45 0 1 0 6.90 0a3.45 3.45 0 1 0 -6.90 0M257.7 241.4m-3.45 0a3.45 3.45 0 1 0 6.90 0a3.45 3.45 0 1 0 -6.90 0M285.5 223.1m-3.45 0a3.45 3.45 0 1 0 6.90 0a3.45 3.45 0 1 0 -6.90 0M285.5 232.2m-3.45 0a3.45 3.45 0 1 0 6.90 0a3.45 3.45 0 1 0 -6.90 0M285.5 250.6m-3.45 0a3.45 3.45 0 1 0 6.90 0a3.45 3.45 0 1 0 -6.90 0M285.5 268.8m-3.45 0a3.45 3.45 0 1 0 6.90 0a3.45 3.45 0 1 0 -6.90 0M285.5 278.0m-3.45 0a3.45 3.45 0 1 0 6.90 0a3.45 3.45 0 1 0 -6.90 0M285.5 287.1m-3.45 0a3.45 3.45 0 1 0 6.90 0a3.45 3.45 0 1 0 -6.90 0M573.8 221.5m-3.45 0a3.45 3.45 0 1 0 6.90 0a3.45 3.45 0 1 0 -6.90 0M573.8 230.7m-3.45 0a3.45 3.45 0 1 0 6.90 0a3.45 3.45 0 1 0 -6.90 0M573.8 239.8m-3.45 0a3.45 3.45 0 1 0 6.90 0a3.45 3.45 0 1 0 -6.90 0M601.0 221.5m-3.45 0a3.45 3.45 0 1 0 6.90 0a3.45 3.45 0 1 0 -6.90 0M601.0 230.7m-3.45 0a3.45 3.45 0 1 0 6.90 0a3.45 3.45 0 1 0 -6.90 0M601.0 239.8m-3.45 0a3.45 3.45 0 1 0 6.90 0a3.45 3.45 0 1 0 -6.90 0M621.6 245.1m-3.45 0a3.45 3.45 0 1 0 6.90 0a3.45 3.45 0 1 0 -6.90 0M649.2 226.8m-3.45 0a3.45 3.45 0 1 0 6.90 0a3.45 3.45 0 1 0 -6.90 0M649.2 281.7m-3.45 0a3.45 3.45 0 1 0 6.90 0a3.45 3.45 0 1 0 -6.90 0M526.8 285.3m-3.45 0a3.45 3.45 0 1 0 6.90 0a3.45 3.45 0 1 0 -6.90 0M554.3 239.6m-3.45 0a3.45 3.45 0 1 0 6.90 0a3.45 3.45 0 1 0 -6.90 0M554.3 248.8m-3.45 0a3.45 3.45 0 1 0 6.90 0a3.45 3.45 0 1 0 -6.90 0M554.3 267.1m-3.45 0a3.45 3.45 0 1 0 6.90 0a3.45 3.45 0 1 0 -6.90 0M554.3 276.2m-3.45 0a3.45 3.45 0 1 0 6.90 0a3.45 3.45 0 1 0 -6.90 0M39.3 343.5m-3.45 0a3.45 3.45 0 1 0 6.90 0a3.45 3.45 0 1 0 -6.90 0M39.3 361.8m-3.45 0a3.45 3.45 0 1 0 6.90 0a3.45 3.45 0 1 0 -6.90 0M39.3 370.9m-3.45 0a3.45 3.45 0 1 0 6.90 0a3.45 3.45 0 1 0 -6.90 0M39.3 380.1m-3.45 0a3.45 3.45 0 1 0 6.90 0a3.45 3.45 0 1 0 -6.90 0M66.6 343.5m-3.45 0a3.45 3.45 0 1 0 6.90 0a3.45 3.45 0 1 0 -6.90 0M66.6 352.6m-3.45 0a3.45 3.45 0 1 0 6.90 0a3.45 3.45 0 1 0 -6.90 0M66.6 361.8m-3.45 0a3.45 3.45 0 1 0 6.90 0a3.45 3.45 0 1 0 -6.90 0M66.6 370.9m-3.45 0a3.45 3.45 0 1 0 6.90 0a3.45 3.45 0 1 0 -6.90 0M66.6 380.1m-3.45 0a3.45 3.45 0 1 0 6.90 0a3.45 3.45 0 1 0 -6.90 0M66.6 389.2m-3.45 0a3.45 3.45 0 1 0 6.90 0a3.45 3.45 0 1 0 -6.90 0M89.6 343.5m-3.45 0a3.45 3.45 0 1 0 6.90 0a3.45 3.45 0 1 0 -6.90 0M89.6 352.6m-3.45 0a3.45 3.45 0 1 0 6.90 0a3.45 3.45 0 1 0 -6.90 0M116.9 343.5m-3.45 0a3.45 3.45 0 1 0 6.90 0a3.45 3.45 0 1 0 -6.90 0M116.9 407.6m-3.45 0a3.45 3.45 0 1 0 6.90 0a3.45 3.45 0 1 0 -6.90 0M139.9 343.5m-3.45 0a3.45 3.45 0 1 0 6.90 0a3.45 3.45 0 1 0 -6.90 0M139.9 352.6m-3.45 0a3.45 3.45 0 1 0 6.90 0a3.45 3.45 0 1 0 -6.90 0M167.0 343.5m-3.45 0a3.45 3.45 0 1 0 6.90 0a3.45 3.45 0 1 0 -6.90 0M167.0 407.6m-3.45 0a3.45 3.45 0 1 0 6.90 0a3.45 3.45 0 1 0 -6.90 0M193.6 325.6m-3.45 0a3.45 3.45 0 1 0 6.90 0a3.45 3.45 0 1 0 -6.90 0M220.8 325.6m-3.45 0a3.45 3.45 0 1 0 6.90 0a3.45 3.45 0 1 0 -6.90 0M220.8 334.7m-3.45 0a3.45 3.45 0 1 0 6.90 0a3.45 3.45 0 1 0 -6.90 0M220.8 362.2m-3.45 0a3.45 3.45 0 1 0 6.90 0a3.45 3.45 0 1 0 -6.90 0M220.8 389.6m-3.45 0a3.45 3.45 0 1 0 6.90 0a3.45 3.45 0 1 0 -6.90 0M250.8 325.6m-3.45 0a3.45 3.45 0 1 0 6.90 0a3.45 3.45 0 1 0 -6.90 0M278.0 325.6m-3.45 0a3.45 3.45 0 1 0 6.90 0a3.45 3.45 0 1 0 -6.90 0M278.0 334.7m-3.45 0a3.45 3.45 0 1 0 6.90 0a3.45 3.45 0 1 0 -6.90 0M278.0 353.0m-3.45 0a3.45 3.45 0 1 0 6.90 0a3.45 3.45 0 1 0 -6.90 0M278.0 380.5m-3.45 0a3.45 3.45 0 1 0 6.90 0a3.45 3.45 0 1 0 -6.90 0M278.0 407.9m-3.45 0a3.45 3.45 0 1 0 6.90 0a3.45 3.45 0 1 0 -6.90 0M39.3 429.5m-3.45 0a3.45 3.45 0 1 0 6.90 0a3.45 3.45 0 1 0 -6.90 0M39.3 438.6m-3.45 0a3.45 3.45 0 1 0 6.90 0a3.45 3.45 0 1 0 -6.90 0M66.6 429.5m-3.45 0a3.45 3.45 0 1 0 6.90 0a3.45 3.45 0 1 0 -6.90 0M66.6 493.6m-3.45 0a3.45 3.45 0 1 0 6.90 0a3.45 3.45 0 1 0 -6.90 0M89.6 429.5m-3.45 0a3.45 3.45 0 1 0 6.90 0a3.45 3.45 0 1 0 -6.90 0M89.6 438.6m-3.45 0a3.45 3.45 0 1 0 6.90 0a3.45 3.45 0 1 0 -6.90 0M116.9 429.5m-3.45 0a3.45 3.45 0 1 0 6.90 0a3.45 3.45 0 1 0 -6.90 0M116.9 484.4m-3.45 0a3.45 3.45 0 1 0 6.90 0a3.45 3.45 0 1 0 -6.90 0M116.9 493.6m-3.45 0a3.45 3.45 0 1 0 6.90 0a3.45 3.45 0 1 0 -6.90 0M139.9 429.5m-3.45 0a3.45 3.45 0 1 0 6.90 0a3.45 3.45 0 1 0 -6.90 0M167.0 429.5m-3.45 0a3.45 3.45 0 1 0 6.90 0a3.45 3.45 0 1 0 -6.90 0M167.0 475.2m-3.45 0a3.45 3.45 0 1 0 6.90 0a3.45 3.45 0 1 0 -6.90 0M167.0 484.4m-3.45 0a3.45 3.45 0 1 0 6.90 0a3.45 3.45 0 1 0 -6.90 0M193.6 429.5m-3.45 0a3.45 3.45 0 1 0 6.90 0a3.45 3.45 0 1 0 -6.90 0M220.8 429.5m-3.45 0a3.45 3.45 0 1 0 6.90 0a3.45 3.45 0 1 0 -6.90 0M220.8 438.6m-3.45 0a3.45 3.45 0 1 0 6.90 0a3.45 3.45 0 1 0 -6.90 0M220.8 456.9m-3.45 0a3.45 3.45 0 1 0 6.90 0a3.45 3.45 0 1 0 -6.90 0M220.8 475.2m-3.45 0a3.45 3.45 0 1 0 6.90 0a3.45 3.45 0 1 0 -6.90 0M220.8 484.4m-3.45 0a3.45 3.45 0 1 0 6.90 0a3.45 3.45 0 1 0 -6.90 0M220.8 493.6m-3.45 0a3.45 3.45 0 1 0 6.90 0a3.45 3.45 0 1 0 -6.90 0M605.6 339.9m-3.45 0a3.45 3.45 0 1 0 6.90 0a3.45 3.45 0 1 0 -6.90 0M605.6 394.8m-3.45 0a3.45 3.45 0 1 0 6.90 0a3.45 3.45 0 1 0 -6.90 0M632.7 339.9m-3.45 0a3.45 3.45 0 1 0 6.90 0a3.45 3.45 0 1 0 -6.90 0M632.7 367.3m-3.45 0a3.45 3.45 0 1 0 6.90 0a3.45 3.45 0 1 0 -6.90 0M632.7 385.6m-3.45 0a3.45 3.45 0 1 0 6.90 0a3.45 3.45 0 1 0 -6.90 0M632.7 394.8m-3.45 0a3.45 3.45 0 1 0 6.90 0a3.45 3.45 0 1 0 -6.90 0M632.7 403.9m-3.45 0a3.45 3.45 0 1 0 6.90 0a3.45 3.45 0 1 0 -6.90 0M657.5 385.6m-3.45 0a3.45 3.45 0 1 0 6.90 0a3.45 3.45 0 1 0 -6.90 0M651.1 428.5m-3.45 0a3.45 3.45 0 1 0 6.90 0a3.45 3.45 0 1 0 -6.90 0M651.1 510.9m-3.45 0a3.45 3.45 0 1 0 6.90 0a3.45 3.45 0 1 0 -6.90 0M325.8 330.5m-3.45 0a3.45 3.45 0 1 0 6.90 0a3.45 3.45 0 1 0 -6.90 0M335.2 330.5m-3.45 0a3.45 3.45 0 1 0 6.90 0a3.45 3.45 0 1 0 -6.90 0M344.4 330.5m-3.45 0a3.45 3.45 0 1 0 6.90 0a3.45 3.45 0 1 0 -6.90 0M371.5 330.5m-3.45 0a3.45 3.45 0 1 0 6.90 0a3.45 3.45 0 1 0 -6.90 0M398.8 330.5m-3.45 0a3.45 3.45 0 1 0 6.90 0a3.45 3.45 0 1 0 -6.90 0M389.8 357.6m-3.45 0a3.45 3.45 0 1 0 6.90 0a3.45 3.45 0 1 0 -6.90 0M398.8 357.6m-3.45 0a3.45 3.45 0 1 0 6.90 0a3.45 3.45 0 1 0 -6.90 0M429.8 330.5m-3.45 0a3.45 3.45 0 1 0 6.90 0a3.45 3.45 0 1 0 -6.90 0M439.2 330.5m-3.45 0a3.45 3.45 0 1 0 6.90 0a3.45 3.45 0 1 0 -6.90 0M466.4 330.5m-3.45 0a3.45 3.45 0 1 0 6.90 0a3.45 3.45 0 1 0 -6.90 0M493.5 330.5m-3.45 0a3.45 3.45 0 1 0 6.90 0a3.45 3.45 0 1 0 -6.90 0M439.2 357.6m-3.45 0a3.45 3.45 0 1 0 6.90 0a3.45 3.45 0 1 0 -6.90 0M448.2 357.6m-3.45 0a3.45 3.45 0 1 0 6.90 0a3.45 3.45 0 1 0 -6.90 0M457.2 357.6m-3.45 0a3.45 3.45 0 1 0 6.90 0a3.45 3.45 0 1 0 -6.90 0M484.5 357.6m-3.45 0a3.45 3.45 0 1 0 6.90 0a3.45 3.45 0 1 0 -6.90 0M493.5 357.6m-3.45 0a3.45 3.45 0 1 0 6.90 0a3.45 3.45 0 1 0 -6.90 0M502.7 357.6m-3.45 0a3.45 3.45 0 1 0 6.90 0a3.45 3.45 0 1 0 -6.90 0M330.8 384.5m-3.45 0a3.45 3.45 0 1 0 6.90 0a3.45 3.45 0 1 0 -6.90 0M413.0 384.5m-3.45 0a3.45 3.45 0 1 0 6.90 0a3.45 3.45 0 1 0 -6.90 0M422.0 384.5m-3.45 0a3.45 3.45 0 1 0 6.90 0a3.45 3.45 0 1 0 -6.90 0M431.2 384.5m-3.45 0a3.45 3.45 0 1 0 6.90 0a3.45 3.45 0 1 0 -6.90 0M440.4 384.5m-3.45 0a3.45 3.45 0 1 0 6.90 0a3.45 3.45 0 1 0 -6.90 0M449.6 384.5m-3.45 0a3.45 3.45 0 1 0 6.90 0a3.45 3.45 0 1 0 -6.90 0M476.7 384.5m-3.45 0a3.45 3.45 0 1 0 6.90 0a3.45 3.45 0 1 0 -6.90 0M485.9 384.5m-3.45 0a3.45 3.45 0 1 0 6.90 0a3.45 3.45 0 1 0 -6.90 0M495.1 384.5m-3.45 0a3.45 3.45 0 1 0 6.90 0a3.45 3.45 0 1 0 -6.90 0M331.1 438.7m-3.45 0a3.45 3.45 0 1 0 6.90 0a3.45 3.45 0 1 0 -6.90 0M340.0 438.7m-3.45 0a3.45 3.45 0 1 0 6.90 0a3.45 3.45 0 1 0 -6.90 0M367.4 438.7m-3.45 0a3.45 3.45 0 1 0 6.90 0a3.45 3.45 0 1 0 -6.90 0M403.8 438.7m-3.45 0a3.45 3.45 0 1 0 6.90 0a3.45 3.45 0 1 0 -6.90 0M413.0 438.7m-3.45 0a3.45 3.45 0 1 0 6.90 0a3.45 3.45 0 1 0 -6.90 0M292.5 466.5m-3.45 0a3.45 3.45 0 1 0 6.90 0a3.45 3.45 0 1 0 -6.90 0M301.6 466.5m-3.45 0a3.45 3.45 0 1 0 6.90 0a3.45 3.45 0 1 0 -6.90 0M310.8 466.5m-3.45 0a3.45 3.45 0 1 0 6.90 0a3.45 3.45 0 1 0 -6.90 0M319.8 466.5m-3.45 0a3.45 3.45 0 1 0 6.90 0a3.45 3.45 0 1 0 -6.90 0M329.0 466.5m-3.45 0a3.45 3.45 0 1 0 6.90 0a3.45 3.45 0 1 0 -6.90 0M337.9 466.5m-3.45 0a3.45 3.45 0 1 0 6.90 0a3.45 3.45 0 1 0 -6.90 0M347.1 466.5m-3.45 0a3.45 3.45 0 1 0 6.90 0a3.45 3.45 0 1 0 -6.90 0M301.6 493.3m-3.45 0a3.45 3.45 0 1 0 6.90 0a3.45 3.45 0 1 0 -6.90 0M310.8 493.3m-3.45 0a3.45 3.45 0 1 0 6.90 0a3.45 3.45 0 1 0 -6.90 0M337.9 493.3m-3.45 0a3.45 3.45 0 1 0 6.90 0a3.45 3.45 0 1 0 -6.90 0M537.5 436.6m-3.45 0a3.45 3.45 0 1 0 6.90 0a3.45 3.45 0 1 0 -6.90 0M546.5 436.6m-3.45 0a3.45 3.45 0 1 0 6.90 0a3.45 3.45 0 1 0 -6.90 0M555.5 436.6m-3.45 0a3.45 3.45 0 1 0 6.90 0a3.45 3.45 0 1 0 -6.90 0M573.8 436.6m-3.45 0a3.45 3.45 0 1 0 6.90 0a3.45 3.45 0 1 0 -6.90 0M583.0 436.6m-3.45 0a3.45 3.45 0 1 0 6.90 0a3.45 3.45 0 1 0 -6.90 0M592.0 436.6m-3.45 0a3.45 3.45 0 1 0 6.90 0a3.45 3.45 0 1 0 -6.90 0M601.4 436.6m-3.45 0a3.45 3.45 0 1 0 6.90 0a3.45 3.45 0 1 0 -6.90 0M537.5 464.0m-3.45 0a3.45 3.45 0 1 0 6.90 0a3.45 3.45 0 1 0 -6.90 0M564.7 464.0m-3.45 0a3.45 3.45 0 1 0 6.90 0a3.45 3.45 0 1 0 -6.90 0M573.8 464.0m-3.45 0a3.45 3.45 0 1 0 6.90 0a3.45 3.45 0 1 0 -6.90 0M583.0 464.0m-3.45 0a3.45 3.45 0 1 0 6.90 0a3.45 3.45 0 1 0 -6.90 0M592.0 464.0m-3.45 0a3.45 3.45 0 1 0 6.90 0a3.45 3.45 0 1 0 -6.90 0M555.5 349.5m-3.45 0a3.45 3.45 0 1 0 6.90 0a3.45 3.45 0 1 0 -6.90 0" fill="#00ff00"/>
<path d="M181.5 159.2m-3.45 0a3.45 3.45 0 1 0 6.90 0a3.45 3.45 0 1 0 -6.90 0M42.9 239.6m-3.45 0a3.45 3.45 0 1 0 6.90 0a3.45 3.45 0 1 0 -6.90 0M42.9 248.8m-3.45 0a3.45 3.45 0 1 0 6.90 0a3.45 3.45 0 1 0 -6.90 0M70.3 267.1m-3.45 0a3.45 3.45 0 1 0 6.90 0a3.45 3.45 0 1 0 -6.90 0M70.3 276.2m-3.45 0a3.45 3.45 0 1 0 6.90 0a3.45 3.45 0 1 0 -6.90 0M204.2 241.3m-3.45 0a3.45 3.45 0 1 0 6.90 0a3.45 3.45 0 1 0 -6.90 0M231.6 259.6m-3.45 0a3.45 3.45 0 1 0 6.90 0a3.45 3.45 0 1 0 -6.90 0M89.6 361.8m-3.45 0a3.45 3.45 0 1 0 6.90 0a3.45 3.45 0 1 0 -6.90 0M89.6 370.9m-3.45 0a3.45 3.45 0 1 0 6.90 0a3.45 3.45 0 1 0 -6.90 0M89.6 380.1m-3.45 0a3.45 3.45 0 1 0 6.90 0a3.45 3.45 0 1 0 -6.90 0M89.6 389.2m-3.45 0a3.45 3.45 0 1 0 6.90 0a3.45 3.45 0 1 0 -6.90 0M139.9 361.8m-3.45 0a3.45 3.45 0 1 0 6.90 0a3.45 3.45 0 1 0 -6.90 0M139.9 370.9m-3.45 0a3.45 3.45 0 1 0 6.90 0a3.45 3.45 0 1 0 -6.90 0M139.9 380.1m-3.45 0a3.45 3.45 0 1 0 6.90 0a3.45 3.45 0 1 0 -6.90 0M139.9 389.2m-3.45 0a3.45 3.45 0 1 0 6.90 0a3.45 3.45 0 1 0 -6.90 0M193.6 334.7m-3.45 0a3.45 3.45 0 1 0 6.90 0a3.45 3.45 0 1 0 -6.90 0M193.6 343.9m-3.45 0a3.45 3.45 0 1 0 6.90 0a3.45 3.45 0 1 0 -6.90 0M193.6 353.0m-3.45 0a3.45 3.45 0 1 0 6.90 0a3.45 3.45 0 1 0 -6.90 0M193.6 362.2m-3.45 0a3.45 3.45 0 1 0 6.90 0a3.45 3.45 0 1 0 -6.90 0M193.6 371.3m-3.45 0a3.45 3.45 0 1 0 6.90 0a3.45 3.45 0 1 0 -6.90 0M193.6 380.5m-3.45 0a3.45 3.45 0 1 0 6.90 0a3.45 3.45 0 1 0 -6.90 0M193.6 389.6m-3.45 0a3.45 3.45 0 1 0 6.90 0a3.45 3.45 0 1 0 -6.90 0M193.6 398.8m-3.45 0a3.45 3.45 0 1 0 6.90 0a3.45 3.45 0 1 0 -6.90 0M250.8 334.7m-3.45 0a3.45 3.45 0 1 0 6.90 0a3.45 3.45 0 1 0 -6.90 0M250.8 343.9m-3.45 0a3.45 3.45 0 1 0 6.90 0a3.45 3.45 0 1 0 -6.90 0M250.8 353.0m-3.45 0a3.45 3.45 0 1 0 6.90 0a3.45 3.45 0 1 0 -6.90 0M250.8 362.2m-3.45 0a3.45 3.45 0 1 0 6.90 0a3.45 3.45 0 1 0 -6.90 0M250.8 371.3m-3.45 0a3.45 3.45 0 1 0 6.90 0a3.45 3.45 0 1 0 -6.90 0M250.8 380.5m-3.45 0a3.45 3.45 0 1 0 6.90 0a3.45 3.45 0 1 0 -6.90 0M250.8 389.6m-3.45 0a3.45 3.45 0 1 0 6.90 0a3.45 3.45 0 1 0 -6.90 0M250.8 398.8m-3.45 0a3.45 3.45 0 1 0 6.90 0a3.45 3.45 0 1 0 -6.90 0M39.3 447.8m-3.45 0a3.45 3.45 0 1 0 6.90 0a3.45 3.45 0 1 0 -6.90 0M39.3 456.9m-3.45 0a3.45 3.45 0 1 0 6.90 0a3.45 3.45 0 1 0 -6.90 0M39.3 466.1m-3.45 0a3.45 3.45 0 1 0 6.90 0a3.45 3.45 0 1 0 -6.90 0M39.3 475.2m-3.45 0a3.45 3.45 0 1 0 6.90 0a3.45 3.45 0 1 0 -6.90 0M89.6 447.8m-3.45 0a3.45 3.45 0 1 0 6.90 0a3.45 3.45 0 1 0 -6.90 0M89.6 456.9m-3.45 0a3.45 3.45 0 1 0 6.90 0a3.45 3.45 0 1 0 -6.90 0M89.6 466.1m-3.45 0a3.45 3.45 0 1 0 6.90 0a3.45 3.45 0 1 0 -6.90 0M89.6 475.2m-3.45 0a3.45 3.45 0 1 0 6.90 0a3.45 3.45 0 1 0 -6.90 0M167.0 438.6m-3.45 0a3.45 3.45 0 1 0 6.90 0a3.45 3.45 0 1 0 -6.90 0M220.8 502.7m-3.45 0a3.45 3.45 0 1 0 6.90 0a3.45 3.45 0 1 0 -6.90 0M605.6 358.2m-3.45 0a3.45 3.45 0 1 0 6.90 0a3.45 3.45 0 1 0 -6.90 0M605.6 367.3m-3.45 0a3.45 3.45 0 1 0 6.90 0a3.45 3.45 0 1 0 -6.90 0M605.6 376.5m-3.45 0a3.45 3.45 0 1 0 6.90 0a3.45 3.45 0 1 0 -6.90 0M605.6 385.6m-3.45 0a3.45 3.45 0 1 0 6.90 0a3.45 3.45 0 1 0 -6.90 0M623.5 437.6m-3.45 0a3.45 3.45 0 1 0 6.90 0a3.45 3.45 0 1 0 -6.90 0M623.5 446.8m-3.45 0a3.45 3.45 0 1 0 6.90 0a3.45 3.45 0 1 0 -6.90 0M623.5 455.9m-3.45 0a3.45 3.45 0 1 0 6.90 0a3.45 3.45 0 1 0 -6.90 0M623.5 465.1m-3.45 0a3.45 3.45 0 1 0 6.90 0a3.45 3.45 0 1 0 -6.90 0M623.5 474.2m-3.45 0a3.45 3.45 0 1 0 6.90 0a3.45 3.45 0 1 0 -6.90 0M623.5 483.4m-3.45 0a3.45 3.45 0 1 0 6.90 0a3.45 3.45 0 1 0 -6.90 0M623.5 492.6m-3.45 0a3.45 3.45 0 1 0 6.90 0a3.45 3.45 0 1 0 -6.90 0M623.5 501.7m-3.45 0a3.45 3.45 0 1 0 6.90 0a3.45 3.45 0 1 0 -6.90 0M504.0 384.5m-3.45 0a3.45 3.45 0 1 0 6.90 0a3.45 3.45 0 1 0 -6.90 0M385.7 438.7m-3.45 0a3.45 3.45 0 1 0 6.90 0a3.45 3.45 0 1 0 -6.90 0M394.7 438.7m-3.45 0a3.45 3.45 0 1 0 6.90 0a3.45 3.45 0 1 0 -6.90 0M422.0 438.7m-3.45 0a3.45 3.45 0 1 0 6.90 0a3.45 3.45 0 1 0 -6.90 0M431.2 438.7m-3.45 0a3.45 3.45 0 1 0 6.90 0a3.45 3.45 0 1 0 -6.90 0M440.4 438.7m-3.45 0a3.45 3.45 0 1 0 6.90 0a3.45 3.45 0 1 0 -6.90 0M449.6 438.7m-3.45 0a3.45 3.45 0 1 0 6.90 0a3.45 3.45 0 1 0 -6.90 0M458.6 438.7m-3.45 0a3.45 3.45 0 1 0 6.90 0a3.45 3.45 0 1 0 -6.90 0M467.5 438.7m-3.45 0a3.45 3.45 0 1 0 6.90 0a3.45 3.45 0 1 0 -6.90 0M476.7 438.7m-3.45 0a3.45 3.45 0 1 0 6.90 0a3.45 3.45 0 1 0 -6.90 0M485.9 438.7m-3.45 0a3.45 3.45 0 1 0 6.90 0a3.45 3.45 0 1 0 -6.90 0M495.1 438.7m-3.45 0a3.45 3.45 0 1 0 6.90 0a3.45 3.45 0 1 0 -6.90 0M292.5 493.3m-3.45 0a3.45 3.45 0 1 0 6.90 0a3.45 3.45 0 1 0 -6.90 0M564.7 436.6m-3.45 0a3.45 3.45 0 1 0 6.90 0a3.45 3.45 0 1 0 -6.90 0M546.5 464.0m-3.45 0a3.45 3.45 0 1 0 6.90 0a3.45 3.45 0 1 0 -6.90 0M555.5 464.0m-3.45 0a3.45 3.45 0 1 0 6.90 0a3.45 3.45 0 1 0 -6.90 0M555.5 376.6m-3.45 0a3.45 3.45 0 1 0 6.90 0a3.45 3.45 0 1 0 -6.90 0" fill="#00ffff"/>
<g font-family="Liberation Sans, sans-serif" font-size="5.3" font-weight="700" fill="#fff" stroke="#fff" stroke-width="0.42"><text x="48.1" y="143.1" textLength="6.9" lengthAdjust="spacingAndGlyphs">+5V</text><text x="48.1" y="161.4" textLength="4.6" lengthAdjust="spacingAndGlyphs">D2</text><text x="48.1" y="179.7" textLength="18.4" lengthAdjust="spacingAndGlyphs">VRAM_A13</text><text x="48.1" y="188.8" textLength="9.2" lengthAdjust="spacingAndGlyphs">VRAM</text><text x="75.5" y="152.2" textLength="13.8" lengthAdjust="spacingAndGlyphs">VRAM_A</text><text x="75.5" y="161.4" textLength="23.0" lengthAdjust="spacingAndGlyphs">~{VRAM_WE}</text><text x="75.5" y="170.5" textLength="13.8" lengthAdjust="spacingAndGlyphs">VRAM_A</text><text x="75.5" y="179.7" textLength="23.0" lengthAdjust="spacingAndGlyphs">~{VRAM_WE}</text><text x="75.5" y="188.8" textLength="41.4" lengthAdjust="spacingAndGlyphs">~{VRAM_WE1_UPD722}</text><text x="75.5" y="198.0" textLength="36.8" lengthAdjust="spacingAndGlyphs">~{VRAM_WE1_UPD7}</text><text x="98.5" y="161.4" textLength="23.0" lengthAdjust="spacingAndGlyphs">~{VRAM_WE}</text><text x="98.5" y="179.7" textLength="23.0" lengthAdjust="spacingAndGlyphs">~{VRAM_WE}</text><text x="98.5" y="188.8" textLength="20.7" lengthAdjust="spacingAndGlyphs">~{VRAM_W}</text><text x="125.8" y="161.4" textLength="25.3" lengthAdjust="spacingAndGlyphs">~{VRAM_WE1}</text><text x="125.8" y="170.5" textLength="25.3" lengthAdjust="spacingAndGlyphs">~{VRAM_WE1}</text><text x="125.8" y="179.7" textLength="6.9" lengthAdjust="spacingAndGlyphs">GND</text><text x="125.8" y="188.8" textLength="23.0" lengthAdjust="spacingAndGlyphs">~{VRAM_WE}</text><text x="125.8" y="198.0" textLength="25.3" lengthAdjust="spacingAndGlyphs">~{VRAM_WE1}</text><text x="158.9" y="159.9" textLength="20.7" lengthAdjust="spacingAndGlyphs">~{VRAM_W}</text><text x="158.9" y="169.0" textLength="20.7" lengthAdjust="spacingAndGlyphs">~{VRAM_W}</text><text x="158.9" y="178.2" textLength="20.7" lengthAdjust="spacingAndGlyphs">~{VRAM_W}</text><text x="158.9" y="196.5" textLength="20.7" lengthAdjust="spacingAndGlyphs">~{VRAM_W}</text><text x="186.7" y="159.9" textLength="11.5" lengthAdjust="spacingAndGlyphs">VRAM_</text><text x="186.7" y="169.0" textLength="9.2" lengthAdjust="spacingAndGlyphs">VRAM</text><text x="186.7" y="178.2" textLength="16.1" lengthAdjust="spacingAndGlyphs">VRAM_A1</text><text x="186.7" y="187.3" textLength="16.1" lengthAdjust="spacingAndGlyphs">VRAM_A0</text><text x="186.7" y="196.5" textLength="6.9" lengthAdjust="spacingAndGlyphs">NC1</text><text x="186.7" y="205.6" textLength="16.1" lengthAdjust="spacingAndGlyphs">VRAM_A0</text><text x="209.4" y="150.7" textLength="20.7" lengthAdjust="spacingAndGlyphs">~{VRAM_W}</text><text x="209.4" y="159.9" textLength="20.7" lengthAdjust="spacingAndGlyphs">~{VRAM_W}</text><text x="209.4" y="169.0" textLength="16.1" lengthAdjust="spacingAndGlyphs">VRAM_A1</text><text x="209.4" y="178.2" textLength="20.7" lengthAdjust="spacingAndGlyphs">~{VRAM_W}</text><text x="209.4" y="187.3" textLength="20.7" lengthAdjust="spacingAndGlyphs">~{VRAM_W}</text><text x="209.4" y="196.5" textLength="16.1" lengthAdjust="spacingAndGlyphs">VRAM_A0</text><text x="209.4" y="205.6" textLength="20.7" lengthAdjust="spacingAndGlyphs">~{VRAM_W}</text><text x="236.8" y="150.7" textLength="6.9" lengthAdjust="spacingAndGlyphs">GND</text><text x="236.8" y="159.9" textLength="20.7" lengthAdjust="spacingAndGlyphs">~{VRAM_W}</text><text x="236.8" y="169.0" textLength="36.8" lengthAdjust="spacingAndGlyphs">~{VRAM_WE1_UPD7}</text><text x="236.8" y="178.2" textLength="4.6" lengthAdjust="spacingAndGlyphs">D7</text><text x="236.8" y="187.3" textLength="39.1" lengthAdjust="spacingAndGlyphs">~{VRAM_WE1_UPD72}</text><text x="236.8" y="196.5" textLength="46.0" lengthAdjust="spacingAndGlyphs">~{VRAM_WE1_UPD7220_}</text><text x="236.8" y="205.6" textLength="4.6" lengthAdjust="spacingAndGlyphs">D2</text><text x="236.8" y="214.8" textLength="39.1" lengthAdjust="spacingAndGlyphs">~{VRAM_WE1_UPD72}</text><text x="262.9" y="123.8" textLength="23.0" lengthAdjust="spacingAndGlyphs">~{VRAM_WE}</text><text x="262.9" y="133.0" textLength="6.9" lengthAdjust="spacingAndGlyphs">+5V</text><text x="262.9" y="142.1" textLength="6.9" lengthAdjust="spacingAndGlyphs">CLK</text><text x="262.9" y="151.3" textLength="6.9" lengthAdjust="spacingAndGlyphs">NC1</text><text x="262.9" y="160.4" textLength="6.9" lengthAdjust="spacingAndGlyphs">GND</text><text x="262.9" y="169.6" textLength="6.9" lengthAdjust="spacingAndGlyphs">+5V</text><text x="262.9" y="178.7" textLength="6.9" lengthAdjust="spacingAndGlyphs">CLK</text><text x="262.9" y="187.8" textLength="11.5" lengthAdjust="spacingAndGlyphs">VRAM_</text><text x="262.9" y="197.0" textLength="11.5" lengthAdjust="spacingAndGlyphs">VRAM_</text><text x="290.7" y="123.8" textLength="6.9" lengthAdjust="spacingAndGlyphs">+5V</text><text x="290.7" y="133.0" textLength="18.4" lengthAdjust="spacingAndGlyphs">VRAM_A04</text><text x="290.7" y="142.1" textLength="18.4" lengthAdjust="spacingAndGlyphs">VRAM_A15</text><text x="290.7" y="151.3" textLength="18.4" lengthAdjust="spacingAndGlyphs">VRAM_A06</text><text x="290.7" y="160.4" textLength="18.4" lengthAdjust="spacingAndGlyphs">VRAM_A17</text><text x="290.7" y="169.6" textLength="18.4" lengthAdjust="spacingAndGlyphs">VRAM_A08</text><text x="290.7" y="178.7" textLength="18.4" lengthAdjust="spacingAndGlyphs">VRAM_A19</text><text x="290.7" y="187.8" textLength="18.4" lengthAdjust="spacingAndGlyphs">VRAM_A00</text><text x="290.7" y="197.0" textLength="13.8" lengthAdjust="spacingAndGlyphs">VRAM_A</text><text x="290.7" y="206.2" textLength="23.0" lengthAdjust="spacingAndGlyphs">~{VRAM_WE}</text><text x="324.0" y="146.8" textLength="18.4" lengthAdjust="spacingAndGlyphs">VRAM_A13</text><text x="324.0" y="156.0" textLength="18.4" lengthAdjust="spacingAndGlyphs">VRAM_A04</text><text x="324.0" y="165.1" textLength="18.4" lengthAdjust="spacingAndGlyphs">VRAM_A15</text><text x="324.0" y="174.3" textLength="18.4" lengthAdjust="spacingAndGlyphs">VRAM_A06</text><text x="324.0" y="183.4" textLength="18.4" lengthAdjust="spacingAndGlyphs">VRAM_A17</text><text x="324.0" y="192.6" textLength="18.4" lengthAdjust="spacingAndGlyphs">VRAM_A08</text><text x="324.0" y="201.7" textLength="18.4" lengthAdjust="spacingAndGlyphs">VRAM_A19</text><text x="324.0" y="210.8" textLength="18.4" lengthAdjust="spacingAndGlyphs">VRAM_A00</text><text x="324.0" y="220.0" textLength="18.4" lengthAdjust="spacingAndGlyphs">VRAM_A11</text><text x="324.0" y="229.2" textLength="18.4" lengthAdjust="spacingAndGlyphs">VRAM_A02</text><text x="324.0" y="238.3" textLength="18.4" lengthAdjust="spacingAndGlyphs">VRAM_A13</text><text x="324.0" y="247.5" textLength="18.4" lengthAdjust="spacingAndGlyphs">VRAM_A04</text><text x="324.0" y="256.6" textLength="18.4" lengthAdjust="spacingAndGlyphs">VRAM_A15</text><text x="351.6" y="156.0" textLength="25.3" lengthAdjust="spacingAndGlyphs">~{VRAM_WE1}</text><text x="351.6" y="165.1" textLength="18.4" lengthAdjust="spacingAndGlyphs">VRAM_A17</text><text x="351.6" y="174.3" textLength="18.4" lengthAdjust="spacingAndGlyphs">VRAM_A08</text><text x="351.6" y="183.4" textLength="18.4" lengthAdjust="spacingAndGlyphs">VRAM_A19</text><text x="351.6" y="192.6" textLength="18.4" lengthAdjust="spacingAndGlyphs">VRAM_A00</text><text x="351.6" y="210.8" textLength="18.4" lengthAdjust="spacingAndGlyphs">VRAM_A11</text><text x="351.6" y="220.0" textLength="25.3" lengthAdjust="spacingAndGlyphs">~{VRAM_WE1}</text><text x="351.6" y="229.2" textLength="18.4" lengthAdjust="spacingAndGlyphs">VRAM_A13</text><text x="351.6" y="238.3" textLength="18.4" lengthAdjust="spacingAndGlyphs">VRAM_A04</text><text x="351.6" y="247.5" textLength="18.4" lengthAdjust="spacingAndGlyphs">VRAM_A15</text><text x="351.6" y="256.6" textLength="18.4" lengthAdjust="spacingAndGlyphs">VRAM_A06</text><text x="351.6" y="265.8" textLength="18.4" lengthAdjust="spacingAndGlyphs">VRAM_A17</text><text x="370.9" y="146.8" textLength="18.4" lengthAdjust="spacingAndGlyphs">VRAM_A08</text><text x="370.9" y="156.0" textLength="18.4" lengthAdjust="spacingAndGlyphs">VRAM_A19</text><text x="370.9" y="165.1" textLength="18.4" lengthAdjust="spacingAndGlyphs">VRAM_A00</text><text x="370.9" y="174.3" textLength="18.4" lengthAdjust="spacingAndGlyphs">VRAM_A11</text><text x="370.9" y="183.4" textLength="18.4" lengthAdjust="spacingAndGlyphs">VRAM_A02</text><text x="370.9" y="192.6" textLength="18.4" lengthAdjust="spacingAndGlyphs">VRAM_A13</text><text x="370.9" y="201.7" textLength="18.4" lengthAdjust="spacingAndGlyphs">VRAM_A04</text><text x="370.9" y="210.8" textLength="18.4" lengthAdjust="spacingAndGlyphs">VRAM_A15</text><text x="370.9" y="220.0" textLength="18.4" lengthAdjust="spacingAndGlyphs">VRAM_A06</text><text x="370.9" y="229.2" textLength="18.4" lengthAdjust="spacingAndGlyphs">VRAM_A17</text><text x="370.9" y="238.3" textLength="18.4" lengthAdjust="spacingAndGlyphs">VRAM_A08</text><text x="370.9" y="247.5" textLength="18.4" lengthAdjust="spacingAndGlyphs">VRAM_A19</text><text x="370.9" y="256.6" textLength="18.4" lengthAdjust="spacingAndGlyphs">VRAM_A00</text><text x="398.0" y="156.0" textLength="25.3" lengthAdjust="spacingAndGlyphs">~{VRAM_WE1}</text><text x="398.0" y="165.1" textLength="18.4" lengthAdjust="spacingAndGlyphs">VRAM_A02</text><text x="398.0" y="174.3" textLength="18.4" lengthAdjust="spacingAndGlyphs">VRAM_A13</text><text x="398.0" y="183.4" textLength="18.4" lengthAdjust="spacingAndGlyphs">VRAM_A04</text><text x="398.0" y="192.6" textLength="18.4" lengthAdjust="spacingAndGlyphs">VRAM_A15</text><text x="398.0" y="210.8" textLength="18.4" lengthAdjust="spacingAndGlyphs">VRAM_A06</text><text x="398.0" y="220.0" textLength="25.3" lengthAdjust="spacingAndGlyphs">~{VRAM_WE1}</text><text x="398.0" y="229.2" textLength="18.4" lengthAdjust="spacingAndGlyphs">VRAM_A08</text><text x="398.0" y="238.3" textLength="18.4" lengthAdjust="spacingAndGlyphs">VRAM_A19</text><text x="398.0" y="247.5" textLength="18.4" lengthAdjust="spacingAndGlyphs">VRAM_A00</text><text x="398.0" y="256.6" textLength="18.4" lengthAdjust="spacingAndGlyphs">VRAM_A11</text><text x="398.0" y="265.8" textLength="18.4" lengthAdjust="spacingAndGlyphs">VRAM_A02</text><text x="424.9" y="146.8" textLength="18.4" lengthAdjust="spacingAndGlyphs">VRAM_A13</text><text x="424.9" y="156.0" textLength="18.4" lengthAdjust="spacingAndGlyphs">VRAM_A04</text><text x="424.9" y="165.1" textLength="18.4" lengthAdjust="spacingAndGlyphs">VRAM_A15</text><text x="424.9" y="174.3" textLength="18.4" lengthAdjust="spacingAndGlyphs">VRAM_A06</text><text x="424.9" y="183.4" textLength="18.4" lengthAdjust="spacingAndGlyphs">VRAM_A17</text><text x="424.9" y="192.6" textLength="18.4" lengthAdjust="spacingAndGlyphs">VRAM_A08</text><text x="424.9" y="201.7" textLength="18.4" lengthAdjust="spacingAndGlyphs">VRAM_A19</text><text x="424.9" y="210.8" textLength="18.4" lengthAdjust="spacingAndGlyphs">VRAM_A00</text><text x="424.9" y="220.0" textLength="18.4" lengthAdjust="spacingAndGlyphs">VRAM_A11</text><text x="424.9" y="229.2" textLength="18.4" lengthAdjust="spacingAndGlyphs">VRAM_A02</text><text x="424.9" y="238.3" textLength="18.4" lengthAdjust="spacingAndGlyphs">VRAM_A13</text><text x="424.9" y="247.5" textLength="18.4" lengthAdjust="spacingAndGlyphs">VRAM_A04</text><text x="424.9" y="256.6" textLength="18.4" lengthAdjust="spacingAndGlyphs">VRAM_A15</text><text x="451.8" y="156.0" textLength="25.3" lengthAdjust="spacingAndGlyphs">~{VRAM_WE1}</text><text x="451.8" y="165.1" textLength="18.4" lengthAdjust="spacingAndGlyphs">VRAM_A17</text><text x="451.8" y="174.3" textLength="18.4" lengthAdjust="spacingAndGlyphs">VRAM_A08</text><text x="451.8" y="183.4" textLength="18.4" lengthAdjust="spacingAndGlyphs">VRAM_A19</text><text x="451.8" y="192.6" textLength="18.4" lengthAdjust="spacingAndGlyphs">VRAM_A00</text><text x="451.8" y="210.8" textLength="18.4" lengthAdjust="spacingAndGlyphs">VRAM_A11</text><text x="451.8" y="220.0" textLength="25.3" lengthAdjust="spacingAndGlyphs">~{VRAM_WE1}</text><text x="451.8" y="229.2" textLength="18.4" lengthAdjust="spacingAndGlyphs">VRAM_A13</text><text x="451.8" y="238.3" textLength="18.4" lengthAdjust="spacingAndGlyphs">VRAM_A04</text><text x="451.8" y="247.5" textLength="18.4" lengthAdjust="spacingAndGlyphs">VRAM_A15</text><text x="451.8" y="256.6" textLength="18.4" lengthAdjust="spacingAndGlyphs">VRAM_A06</text><text x="451.8" y="265.8" textLength="18.4" lengthAdjust="spacingAndGlyphs">VRAM_A17</text><text x="471.1" y="146.8" textLength="18.4" lengthAdjust="spacingAndGlyphs">VRAM_A08</text><text x="471.1" y="156.0" textLength="18.4" lengthAdjust="spacingAndGlyphs">VRAM_A19</text><text x="471.1" y="165.1" textLength="18.4" lengthAdjust="spacingAndGlyphs">VRAM_A00</text><text x="471.1" y="174.3" textLength="18.4" lengthAdjust="spacingAndGlyphs">VRAM_A11</text><text x="471.1" y="183.4" textLength="18.4" lengthAdjust="spacingAndGlyphs">VRAM_A02</text><text x="471.1" y="192.6" textLength="18.4" lengthAdjust="spacingAndGlyphs">VRAM_A13</text><text x="471.1" y="201.7" textLength="18.4" lengthAdjust="spacingAndGlyphs">VRAM_A04</text><text x="471.1" y="210.8" textLength="18.4" lengthAdjust="spacingAndGlyphs">VRAM_A15</text><text x="471.1" y="220.0" textLength="18.4" lengthAdjust="spacingAndGlyphs">VRAM_A06</text><text x="471.1" y="229.2" textLength="18.4" lengthAdjust="spacingAndGlyphs">VRAM_A17</text><text x="471.1" y="238.3" textLength="18.4" lengthAdjust="spacingAndGlyphs">VRAM_A08</text><text x="471.1" y="247.5" textLength="18.4" lengthAdjust="spacingAndGlyphs">VRAM_A19</text><text x="471.1" y="256.6" textLength="18.4" lengthAdjust="spacingAndGlyphs">VRAM_A00</text><text x="498.6" y="156.0" textLength="25.3" lengthAdjust="spacingAndGlyphs">~{VRAM_WE1}</text><text x="498.6" y="165.1" textLength="18.4" lengthAdjust="spacingAndGlyphs">VRAM_A02</text><text x="498.6" y="174.3" textLength="18.4" lengthAdjust="spacingAndGlyphs">VRAM_A13</text><text x="498.6" y="183.4" textLength="18.4" lengthAdjust="spacingAndGlyphs">VRAM_A04</text><text x="498.6" y="192.6" textLength="18.4" lengthAdjust="spacingAndGlyphs">VRAM_A15</text><text x="498.6" y="210.8" textLength="18.4" lengthAdjust="spacingAndGlyphs">VRAM_A06</text><text x="498.6" y="220.0" textLength="25.3" lengthAdjust="spacingAndGlyphs">~{VRAM_WE1}</text><text x="498.6" y="229.2" textLength="18.4" lengthAdjust="spacingAndGlyphs">VRAM_A08</text><text x="498.6" y="238.3" textLength="18.4" lengthAdjust="spacingAndGlyphs">VRAM_A19</text><text x="498.6" y="247.5" textLength="18.4" lengthAdjust="spacingAndGlyphs">VRAM_A00</text><text x="498.6" y="256.6" textLength="18.4" lengthAdjust="spacingAndGlyphs">VRAM_A11</text><text x="498.6" y="265.8" textLength="18.4" lengthAdjust="spacingAndGlyphs">VRAM_A02</text><text x="532.0" y="148.9" textLength="20.7" lengthAdjust="spacingAndGlyphs">~{VRAM_W}</text><text x="532.0" y="158.0" textLength="20.7" lengthAdjust="spacingAndGlyphs">~{VRAM_W}</text><text x="532.0" y="167.2" textLength="20.7" lengthAdjust="spacingAndGlyphs">~{VRAM_W}</text><text x="532.0" y="176.3" textLength="20.7" lengthAdjust="spacingAndGlyphs">~{VRAM_W}</text><text x="532.0" y="185.5" textLength="20.7" lengthAdjust="spacingAndGlyphs">~{VRAM_W}</text><text x="532.0" y="194.6" textLength="20.7" lengthAdjust="spacingAndGlyphs">~{VRAM_W}</text><text x="532.0" y="203.8" textLength="20.7" lengthAdjust="spacingAndGlyphs">~{VRAM_W}</text><text x="532.0" y="212.9" textLength="20.7" lengthAdjust="spacingAndGlyphs">~{VRAM_W}</text><text x="559.5" y="148.9" textLength="20.7" lengthAdjust="spacingAndGlyphs">~{VRAM_W}</text><text x="559.5" y="158.0" textLength="36.8" lengthAdjust="spacingAndGlyphs">~{VRAM_WE1_UPD7}</text><text x="559.5" y="167.2" textLength="36.8" lengthAdjust="spacingAndGlyphs">~{VRAM_WE1_UPD7}</text><text x="559.5" y="176.3" textLength="36.8" lengthAdjust="spacingAndGlyphs">~{VRAM_WE1_UPD7}</text><text x="559.5" y="185.5" textLength="36.8" lengthAdjust="spacingAndGlyphs">~{VRAM_WE1_UPD7}</text><text x="559.5" y="194.6" textLength="18.4" lengthAdjust="spacingAndGlyphs">VRAM_A06</text><text x="559.5" y="203.8" textLength="18.4" lengthAdjust="spacingAndGlyphs">VRAM_A17</text><text x="559.5" y="212.9" textLength="20.7" lengthAdjust="spacingAndGlyphs">~{VRAM_W}</text><text x="559.5" y="222.1" textLength="23.0" lengthAdjust="spacingAndGlyphs">~{VRAM_WE}</text><text x="579.0" y="139.7" textLength="20.7" lengthAdjust="spacingAndGlyphs">~{VRAM_W}</text><text x="579.0" y="158.0" textLength="20.7" lengthAdjust="spacingAndGlyphs">~{VRAM_W}</text><text x="579.0" y="167.2" textLength="20.7" lengthAdjust="spacingAndGlyphs">~{VRAM_W}</text><text x="579.0" y="176.3" textLength="20.7" lengthAdjust="spacingAndGlyphs">~{VRAM_W}</text><text x="579.0" y="185.5" textLength="20.7" lengthAdjust="spacingAndGlyphs">~{VRAM_W}</text><text x="606.2" y="148.9" textLength="9.2" lengthAdjust="spacingAndGlyphs">VRAM</text><text x="606.2" y="185.5" textLength="6.9" lengthAdjust="spacingAndGlyphs">CLK</text><text x="606.2" y="194.6" textLength="32.2" lengthAdjust="spacingAndGlyphs">~{VRAM_WE1_UP}</text><text x="606.2" y="203.8" textLength="25.3" lengthAdjust="spacingAndGlyphs">~{VRAM_WE1}</text><text x="628.7" y="139.7" textLength="20.7" lengthAdjust="spacingAndGlyphs">~{VRAM_W}</text><text x="628.7" y="158.0" textLength="20.7" lengthAdjust="spacingAndGlyphs">~{VRAM_W}</text><text x="628.7" y="167.2" textLength="20.7" lengthAdjust="spacingAndGlyphs">~{VRAM_W}</text><text x="628.7" y="176.3" textLength="20.7" lengthAdjust="spacingAndGlyphs">~{VRAM_W}</text><text x="628.7" y="185.5" textLength="20.7" lengthAdjust="spacingAndGlyphs">~{VRAM_W}</text><text x="656.3" y="139.7" textLength="20.7" lengthAdjust="spacingAndGlyphs">~{VRAM_W}</text><text x="656.3" y="148.9" textLength="16.1" lengthAdjust="spacingAndGlyphs">VRAM_A1</text><text x="656.3" y="185.5" textLength="6.9" lengthAdjust="spacingAndGlyphs">GND</text><text x="656.3" y="194.6" textLength="20.7" lengthAdjust="spacingAndGlyphs">~{VRAM_W}</text><text x="656.3" y="203.8" textLength="20.7" lengthAdjust="spacingAndGlyphs">~{VRAM_W}</text><text x="48.1" y="240.3" textLength="16.1" lengthAdjust="spacingAndGlyphs">VRAM_A1</text><text x="48.1" y="249.5" textLength="16.1" lengthAdjust="spacingAndGlyphs">VRAM_A0</text><text x="48.1" y="258.6" textLength="20.7" lengthAdjust="spacingAndGlyphs">~{VRAM_W}</text><text x="48.1" y="267.8" textLength="13.8" lengthAdjust="spacingAndGlyphs">VRAM_A</text><text x="48.1" y="276.9" textLength="18.4" lengthAdjust="spacingAndGlyphs">VRAM_A13</text><text x="75.5" y="249.5" textLength="13.8" lengthAdjust="spacingAndGlyphs">VRAM_A</text><text x="75.5" y="258.6" textLength="13.8" lengthAdjust="spacingAndGlyphs">VRAM_A</text><text x="75.5" y="267.8" textLength="16.1" lengthAdjust="spacingAndGlyphs">VRAM_A0</text><text x="75.5" y="276.9" textLength="16.1" lengthAdjust="spacingAndGlyphs">VRAM_A1</text><text x="75.5" y="286.0" textLength="39.1" lengthAdjust="spacingAndGlyphs">~{VRAM_WE1_UPD72}</text><text x="75.5" y="295.2" textLength="34.5" lengthAdjust="spacingAndGlyphs">~{VRAM_WE1_UPD}</text><text x="75.5" y="304.3" textLength="13.8" lengthAdjust="spacingAndGlyphs">VRAM_A</text><text x="98.5" y="258.6" textLength="23.0" lengthAdjust="spacingAndGlyphs">~{VRAM_WE}</text><text x="98.5" y="267.8" textLength="23.0" lengthAdjust="spacingAndGlyphs">~{VRAM_WE}</text><text x="98.5" y="276.9" textLength="18.4" lengthAdjust="spacingAndGlyphs">VRAM_A13</text><text x="125.8" y="258.6" textLength="25.3" lengthAdjust="spacingAndGlyphs">~{VRAM_WE1}</text><text x="125.8" y="267.8" textLength="25.3" lengthAdjust="spacingAndGlyphs">~{VRAM_WE1}</text><text x="158.9" y="240.3" textLength="20.7" lengthAdjust="spacingAndGlyphs">~{VRAM_W}</text><text x="158.9" y="249.5" textLength="16.1" lengthAdjust="spacingAndGlyphs">VRAM_A1</text><text x="158.9" y="258.6" textLength="20.7" lengthAdjust="spacingAndGlyphs">~{VRAM_W}</text><text x="158.9" y="267.8" textLength="20.7" lengthAdjust="spacingAndGlyphs">~{VRAM_W}</text><text x="158.9" y="276.9" textLength="16.1" lengthAdjust="spacingAndGlyphs">VRAM_A0</text><text x="158.9" y="286.0" textLength="20.7" lengthAdjust="spacingAndGlyphs">~{VRAM_W}</text><text x="186.7" y="240.3" textLength="6.9" lengthAdjust="spacingAndGlyphs">CLK</text><text x="186.7" y="258.6" textLength="23.0" lengthAdjust="spacingAndGlyphs">~{VRAM_WE}</text><text x="186.7" y="267.8" textLength="29.9" lengthAdjust="spacingAndGlyphs">~{VRAM_WE1_U}</text><text x="186.7" y="276.9" textLength="20.7" lengthAdjust="spacingAndGlyphs">~{VRAM_W}</text><text x="186.7" y="286.0" textLength="20.7" lengthAdjust="spacingAndGlyphs">~{VRAM_W}</text><text x="186.7" y="295.2" textLength="18.4" lengthAdjust="spacingAndGlyphs">VRAM_A17</text><text x="209.4" y="232.9" textLength="20.7" lengthAdjust="spacingAndGlyphs">~{VRAM_W}</text><text x="209.4" y="242.1" textLength="20.7" lengthAdjust="spacingAndGlyphs">~{VRAM_W}</text><text x="209.4" y="251.2" textLength="18.4" lengthAdjust="spacingAndGlyphs">VRAM_A00</text><text x="209.4" y="260.3" textLength="6.9" lengthAdjust="spacingAndGlyphs">NC1</text><text x="209.4" y="269.5" textLength="20.7" lengthAdjust="spacingAndGlyphs">~{VRAM_W}</text><text x="209.4" y="278.6" textLength="20.7" lengthAdjust="spacingAndGlyphs">~{VRAM_W}</text><text x="236.8" y="242.1" textLength="9.2" lengthAdjust="spacingAndGlyphs">VRAM</text><text x="236.8" y="251.2" textLength="39.1" lengthAdjust="spacingAndGlyphs">~{VRAM_WE1_UPD72}</text><text x="236.8" y="260.3" textLength="18.4" lengthAdjust="spacingAndGlyphs">VRAM_A06</text><text x="236.8" y="269.5" textLength="39.1" lengthAdjust="spacingAndGlyphs">~{VRAM_WE1_UPD72}</text><text x="236.8" y="278.6" textLength="39.1" lengthAdjust="spacingAndGlyphs">~{VRAM_WE1_UPD72}</text><text x="236.8" y="287.8" textLength="39.1" lengthAdjust="spacingAndGlyphs">~{VRAM_WE1_UPD72}</text><text x="236.8" y="296.9" textLength="11.5" lengthAdjust="spacingAndGlyphs">VRAM_</text><text x="262.9" y="223.8" textLength="23.0" lengthAdjust="spacingAndGlyphs">~{VRAM_WE}</text><text x="262.9" y="233.0" textLength="6.9" lengthAdjust="spacingAndGlyphs">CLK</text><text x="262.9" y="242.1" textLength="6.9" lengthAdjust="spacingAndGlyphs">NC1</text><text x="262.9" y="251.3" textLength="11.5" lengthAdjust="spacingAndGlyphs">VRAM_</text><text x="262.9" y="260.4" textLength="11.5" lengthAdjust="spacingAndGlyphs">VRAM_</text><text x="262.9" y="269.5" textLength="11.5" lengthAdjust="spacingAndGlyphs">VRAM_</text><text x="262.9" y="278.7" textLength="11.5" lengthAdjust="spacingAndGlyphs">VRAM_</text><text x="262.9" y="287.8" textLength="11.5" lengthAdjust="spacingAndGlyphs">VRAM_</text><text x="262.9" y="297.0" textLength="11.5" lengthAdjust="spacingAndGlyphs">VRAM_</text><text x="290.7" y="223.8" textLength="6.9" lengthAdjust="spacingAndGlyphs">CLK</text><text x="290.7" y="233.0" textLength="18.4" lengthAdjust="spacingAndGlyphs">VRAM_A11</text><text x="290.7" y="242.1" textLength="18.4" lengthAdjust="spacingAndGlyphs">VRAM_A02</text><text x="290.7" y="251.3" textLength="20.7" lengthAdjust="spacingAndGlyphs">~{VRAM_W}</text><text x="290.7" y="260.4" textLength="20.7" lengthAdjust="spacingAndGlyphs">~{VRAM_W}</text><text x="290.7" y="269.5" textLength="20.7" lengthAdjust="spacingAndGlyphs">~{VRAM_W}</text><text x="290.7" y="278.7" textLength="20.7" lengthAdjust="spacingAndGlyphs">~{VRAM_W}</text><text x="290.7" y="287.8" textLength="20.7" lengthAdjust="spacingAndGlyphs">~{VRAM_W}</text><text x="290.7" y="297.0" textLength="9.2" lengthAdjust="spacingAndGlyphs">VRAM</text><text x="290.7" y="306.1" textLength="23.0" lengthAdjust="spacingAndGlyphs">~{VRAM_WE}</text><text x="579.0" y="231.4" textLength="18.4" lengthAdjust="spacingAndGlyphs">VRAM_A00</text><text x="579.0" y="240.5" textLength="20.7" lengthAdjust="spacingAndGlyphs">~{VRAM_W}</text><text x="579.0" y="249.7" textLength="20.7" lengthAdjust="spacingAndGlyphs">~{VRAM_W}</text><text x="579.0" y="258.8" textLength="18.4" lengthAdjust="spacingAndGlyphs">VRAM_A13</text><text x="579.0" y="267.9" textLength="18.4" lengthAdjust="spacingAndGlyphs">VRAM_A04</text><text x="579.0" y="277.1" textLength="20.7" lengthAdjust="spacingAndGlyphs">~{VRAM_W}</text><text x="579.0" y="286.2" textLength="20.7" lengthAdjust="spacingAndGlyphs">~{VRAM_W}</text><text x="579.0" y="295.4" textLength="18.4" lengthAdjust="spacingAndGlyphs">VRAM_A17</text><text x="606.2" y="240.5" textLength="20.7" lengthAdjust="spacingAndGlyphs">~{VRAM_W}</text><text x="606.2" y="249.7" textLength="20.7" lengthAdjust="spacingAndGlyphs">~{VRAM_W}</text><text x="606.2" y="277.1" textLength="18.4" lengthAdjust="spacingAndGlyphs">VRAM_A00</text><text x="606.2" y="286.2" textLength="18.4" lengthAdjust="spacingAndGlyphs">VRAM_A11</text><text x="606.2" y="304.6" textLength="20.7" lengthAdjust="spacingAndGlyphs">~{VRAM_W}</text><text x="626.8" y="227.5" textLength="20.7" lengthAdjust="spacingAndGlyphs">~{VRAM_W}</text><text x="626.8" y="245.8" textLength="18.4" lengthAdjust="spacingAndGlyphs">VRAM_A04</text><text x="626.8" y="255.0" textLength="18.4" lengthAdjust="spacingAndGlyphs">VRAM_A15</text><text x="626.8" y="264.1" textLength="18.4" lengthAdjust="spacingAndGlyphs">VRAM_A06</text><text x="626.8" y="273.2" textLength="18.4" lengthAdjust="spacingAndGlyphs">VRAM_A17</text><text x="654.4" y="227.5" textLength="20.7" lengthAdjust="spacingAndGlyphs">~{VRAM_W}</text><text x="654.4" y="236.7" textLength="9.2" lengthAdjust="spacingAndGlyphs">VRAM</text><text x="654.4" y="273.2" textLength="6.9" lengthAdjust="spacingAndGlyphs">GND</text><text x="654.4" y="282.4" textLength="20.7" lengthAdjust="spacingAndGlyphs">~{VRAM_W}</text><text x="654.4" y="291.5" textLength="20.7" lengthAdjust="spacingAndGlyphs">~{VRAM_W}</text><text x="532.0" y="276.9" textLength="20.7" lengthAdjust="spacingAndGlyphs">~{VRAM_W}</text><text x="532.0" y="295.2" textLength="20.7" lengthAdjust="spacingAndGlyphs">~{VRAM_W}</text><text x="559.5" y="286.0" textLength="20.7" lengthAdjust="spacingAndGlyphs">~{VRAM_W}</text><text x="559.5" y="295.2" textLength="36.8" lengthAdjust="spacingAndGlyphs">~{VRAM_WE1_UPD7}</text><text x="559.5" y="304.3" textLength="18.4" lengthAdjust="spacingAndGlyphs">VRAM_A17</text><text x="44.5" y="344.2" textLength="36.8" lengthAdjust="spacingAndGlyphs">~{VRAM_WE1_UPD7}</text><text x="44.5" y="353.3" textLength="20.7" lengthAdjust="spacingAndGlyphs">~{VRAM_W}</text><text x="44.5" y="362.5" textLength="20.7" lengthAdjust="spacingAndGlyphs">~{VRAM_W}</text><text x="44.5" y="380.8" textLength="20.7" lengthAdjust="spacingAndGlyphs">~{VRAM_W}</text><text x="44.5" y="389.9" textLength="20.7" lengthAdjust="spacingAndGlyphs">~{VRAM_W}</text><text x="71.8" y="344.2" textLength="9.2" lengthAdjust="spacingAndGlyphs">VRAM</text><text x="71.8" y="353.3" textLength="20.7" lengthAdjust="spacingAndGlyphs">~{VRAM_W}</text><text x="71.8" y="362.5" textLength="27.6" lengthAdjust="spacingAndGlyphs">~{VRAM_WE1_}</text><text x="71.8" y="371.6" textLength="29.9" lengthAdjust="spacingAndGlyphs">~{VRAM_WE1_U}</text><text x="71.8" y="380.8" textLength="11.5" lengthAdjust="spacingAndGlyphs">VRAM_</text><text x="71.8" y="389.9" textLength="18.4" lengthAdjust="spacingAndGlyphs">VRAM_A08</text><text x="71.8" y="399.1" textLength="48.3" lengthAdjust="spacingAndGlyphs">~{VRAM_WE1_UPD7220_D}</text><text x="94.8" y="353.3" textLength="20.7" lengthAdjust="spacingAndGlyphs">~{VRAM_W}</text><text x="94.8" y="362.5" textLength="4.6" lengthAdjust="spacingAndGlyphs">D5</text><text x="94.8" y="371.6" textLength="4.6" lengthAdjust="spacingAndGlyphs">D6</text><text x="94.8" y="380.8" textLength="4.6" lengthAdjust="spacingAndGlyphs">D7</text><text x="94.8" y="389.9" textLength="4.6" lengthAdjust="spacingAndGlyphs">D0</text><text x="94.8" y="399.1" textLength="27.6" lengthAdjust="spacingAndGlyphs">~{VRAM_WE1_}</text><text x="122.1" y="408.2" textLength="36.8" lengthAdjust="spacingAndGlyphs">~{VRAM_WE1_UPD7}</text><text x="145.1" y="353.3" textLength="20.7" lengthAdjust="spacingAndGlyphs">~{VRAM_W}</text><text x="145.1" y="362.5" textLength="4.6" lengthAdjust="spacingAndGlyphs">D4</text><text x="145.1" y="371.6" textLength="4.6" lengthAdjust="spacingAndGlyphs">D5</text><text x="145.1" y="380.8" textLength="4.6" lengthAdjust="spacingAndGlyphs">D6</text><text x="145.1" y="389.9" textLength="4.6" lengthAdjust="spacingAndGlyphs">D7</text><text x="145.1" y="399.1" textLength="25.3" lengthAdjust="spacingAndGlyphs">~{VRAM_WE1}</text><text x="172.2" y="408.2" textLength="36.8" lengthAdjust="spacingAndGlyphs">~{VRAM_WE1_UPD7}</text><text x="198.8" y="326.3" textLength="13.8" lengthAdjust="spacingAndGlyphs">VRAM_A</text><text x="198.8" y="335.4" textLength="4.6" lengthAdjust="spacingAndGlyphs">D3</text><text x="198.8" y="344.6" textLength="4.6" lengthAdjust="spacingAndGlyphs">D4</text><text x="198.8" y="353.7" textLength="4.6" lengthAdjust="spacingAndGlyphs">D5</text><text x="198.8" y="362.9" textLength="4.6" lengthAdjust="spacingAndGlyphs">D6</text><text x="198.8" y="372.0" textLength="4.6" lengthAdjust="spacingAndGlyphs">D7</text><text x="198.8" y="381.2" textLength="4.6" lengthAdjust="spacingAndGlyphs">D0</text><text x="198.8" y="390.3" textLength="4.6" lengthAdjust="spacingAndGlyphs">D1</text><text x="198.8" y="399.5" textLength="4.6" lengthAdjust="spacingAndGlyphs">D2</text><text x="226.0" y="335.4" textLength="39.1" lengthAdjust="spacingAndGlyphs">~{VRAM_WE1_UPD72}</text><text x="226.0" y="344.6" textLength="18.4" lengthAdjust="spacingAndGlyphs">VRAM_A04</text><text x="226.0" y="353.7" textLength="18.4" lengthAdjust="spacingAndGlyphs">VRAM_A15</text><text x="226.0" y="362.9" textLength="18.4" lengthAdjust="spacingAndGlyphs">VRAM_A06</text><text x="226.0" y="372.0" textLength="18.4" lengthAdjust="spacingAndGlyphs">VRAM_A17</text><text x="226.0" y="381.2" textLength="18.4" lengthAdjust="spacingAndGlyphs">VRAM_A08</text><text x="226.0" y="390.3" textLength="18.4" lengthAdjust="spacingAndGlyphs">VRAM_A19</text><text x="226.0" y="399.5" textLength="18.4" lengthAdjust="spacingAndGlyphs">VRAM_A00</text><text x="226.0" y="408.6" textLength="18.4" lengthAdjust="spacingAndGlyphs">VRAM_A11</text><text x="256.0" y="326.3" textLength="13.8" lengthAdjust="spacingAndGlyphs">VRAM_A</text><text x="256.0" y="335.4" textLength="4.6" lengthAdjust="spacingAndGlyphs">D5</text><text x="256.0" y="344.6" textLength="4.6" lengthAdjust="spacingAndGlyphs">D6</text><text x="256.0" y="353.7" textLength="4.6" lengthAdjust="spacingAndGlyphs">D7</text><text x="256.0" y="362.9" textLength="4.6" lengthAdjust="spacingAndGlyphs">D0</text><text x="256.0" y="372.0" textLength="4.6" lengthAdjust="spacingAndGlyphs">D1</text><text x="256.0" y="381.2" textLength="4.6" lengthAdjust="spacingAndGlyphs">D2</text><text x="256.0" y="390.3" textLength="4.6" lengthAdjust="spacingAndGlyphs">D3</text><text x="256.0" y="399.5" textLength="4.6" lengthAdjust="spacingAndGlyphs">D4</text><text x="283.2" y="335.4" textLength="39.1" lengthAdjust="spacingAndGlyphs">~{VRAM_WE1_UPD72}</text><text x="283.2" y="344.6" textLength="20.7" lengthAdjust="spacingAndGlyphs">~{VRAM_W}</text><text x="283.2" y="353.7" textLength="20.7" lengthAdjust="spacingAndGlyphs">~{VRAM_W}</text><text x="283.2" y="362.9" textLength="20.7" lengthAdjust="spacingAndGlyphs">~{VRAM_W}</text><text x="283.2" y="372.0" textLength="20.7" lengthAdjust="spacingAndGlyphs">~{VRAM_W}</text><text x="283.2" y="381.2" textLength="20.7" lengthAdjust="spacingAndGlyphs">~{VRAM_W}</text><text x="283.2" y="390.3" textLength="20.7" lengthAdjust="spacingAndGlyphs">~{VRAM_W}</text><text x="283.2" y="399.5" textLength="20.7" lengthAdjust="spacingAndGlyphs">~{VRAM_W}</text><text x="283.2" y="408.6" textLength="20.7" lengthAdjust="spacingAndGlyphs">~{VRAM_W}</text><text x="44.5" y="439.3" textLength="20.7" lengthAdjust="spacingAndGlyphs">~{VRAM_W}</text><text x="44.5" y="448.5" textLength="4.6" lengthAdjust="spacingAndGlyphs">D7</text><text x="44.5" y="457.6" textLength="4.6" lengthAdjust="spacingAndGlyphs">D0</text><text x="44.5" y="466.8" textLength="4.6" lengthAdjust="spacingAndGlyphs">D1</text><text x="44.5" y="475.9" textLength="4.6" lengthAdjust="spacingAndGlyphs">D2</text><text x="44.5" y="485.1" textLength="25.3" lengthAdjust="spacingAndGlyphs">~{VRAM_WE1}</text><text x="71.8" y="494.2" textLength="36.8" lengthAdjust="spacingAndGlyphs">~{VRAM_WE1_UPD7}</text><text x="94.8" y="439.3" textLength="20.7" lengthAdjust="spacingAndGlyphs">~{VRAM_W}</text><text x="94.8" y="448.5" textLength="4.6" lengthAdjust="spacingAndGlyphs">D6</text><text x="94.8" y="457.6" textLength="4.6" lengthAdjust="spacingAndGlyphs">D7</text><text x="94.8" y="466.8" textLength="4.6" lengthAdjust="spacingAndGlyphs">D0</text><text x="94.8" y="475.9" textLength="4.6" lengthAdjust="spacingAndGlyphs">D1</text><text x="94.8" y="485.1" textLength="25.3" lengthAdjust="spacingAndGlyphs">~{VRAM_WE1}</text><text x="122.1" y="485.1" textLength="36.8" lengthAdjust="spacingAndGlyphs">~{VRAM_WE1_UPD7}</text><text x="122.1" y="494.2" textLength="36.8" lengthAdjust="spacingAndGlyphs">~{VRAM_WE1_UPD7}</text><text x="145.1" y="430.2" textLength="20.7" lengthAdjust="spacingAndGlyphs">~{VRAM_W}</text><text x="172.2" y="430.2" textLength="6.9" lengthAdjust="spacingAndGlyphs">CLK</text><text x="172.2" y="439.3" textLength="16.1" lengthAdjust="spacingAndGlyphs">VRAM_A1</text><text x="172.2" y="448.5" textLength="18.4" lengthAdjust="spacingAndGlyphs">VRAM_A08</text><text x="172.2" y="457.6" textLength="18.4" lengthAdjust="spacingAndGlyphs">VRAM_A19</text><text x="172.2" y="466.8" textLength="18.4" lengthAdjust="spacingAndGlyphs">VRAM_A00</text><text x="172.2" y="475.9" textLength="18.4" lengthAdjust="spacingAndGlyphs">VRAM_A11</text><text x="172.2" y="485.1" textLength="18.4" lengthAdjust="spacingAndGlyphs">VRAM_A02</text><text x="172.2" y="494.2" textLength="18.4" lengthAdjust="spacingAndGlyphs">VRAM_A13</text><text x="172.2" y="503.4" textLength="18.4" lengthAdjust="spacingAndGlyphs">VRAM_A04</text><text x="172.2" y="512.5" textLength="9.2" lengthAdjust="spacingAndGlyphs">VRAM</text><text x="198.8" y="430.2" textLength="20.7" lengthAdjust="spacingAndGlyphs">~{VRAM_W}</text><text x="226.0" y="430.2" textLength="6.9" lengthAdjust="spacingAndGlyphs">+5V</text><text x="226.0" y="439.3" textLength="18.4" lengthAdjust="spacingAndGlyphs">VRAM_A08</text><text x="226.0" y="448.5" textLength="18.4" lengthAdjust="spacingAndGlyphs">VRAM_A19</text><text x="226.0" y="457.6" textLength="20.7" lengthAdjust="spacingAndGlyphs">~{VRAM_W}</text><text x="226.0" y="466.8" textLength="20.7" lengthAdjust="spacingAndGlyphs">~{VRAM_W}</text><text x="226.0" y="475.9" textLength="20.7" lengthAdjust="spacingAndGlyphs">~{VRAM_W}</text><text x="226.0" y="485.1" textLength="20.7" lengthAdjust="spacingAndGlyphs">~{VRAM_W}</text><text x="226.0" y="494.2" textLength="20.7" lengthAdjust="spacingAndGlyphs">~{VRAM_W}</text><text x="226.0" y="503.4" textLength="18.4" lengthAdjust="spacingAndGlyphs">VRAM_A15</text><text x="226.0" y="512.5" textLength="9.2" lengthAdjust="spacingAndGlyphs">VRAM</text><text x="610.8" y="349.7" textLength="6.9" lengthAdjust="spacingAndGlyphs">NC1</text><text x="637.9" y="358.9" textLength="18.4" lengthAdjust="spacingAndGlyphs">VRAM_A08</text><text x="637.9" y="368.0" textLength="27.6" lengthAdjust="spacingAndGlyphs">~{VRAM_WE1_}</text><text x="637.9" y="377.2" textLength="18.4" lengthAdjust="spacingAndGlyphs">VRAM_A00</text><text x="662.7" y="340.6" textLength="13.8" lengthAdjust="spacingAndGlyphs">VRAM_A</text><text x="628.7" y="438.3" textLength="4.6" lengthAdjust="spacingAndGlyphs">D0</text><text x="628.7" y="447.5" textLength="4.6" lengthAdjust="spacingAndGlyphs">D1</text><text x="628.7" y="456.6" textLength="4.6" lengthAdjust="spacingAndGlyphs">D2</text><text x="628.7" y="465.8" textLength="4.6" lengthAdjust="spacingAndGlyphs">D3</text><text x="628.7" y="474.9" textLength="4.6" lengthAdjust="spacingAndGlyphs">D4</text><text x="628.7" y="484.1" textLength="4.6" lengthAdjust="spacingAndGlyphs">D5</text><text x="628.7" y="493.2" textLength="4.6" lengthAdjust="spacingAndGlyphs">D6</text><text x="628.7" y="502.4" textLength="4.6" lengthAdjust="spacingAndGlyphs">D7</text><text x="656.3" y="438.3" textLength="20.7" lengthAdjust="spacingAndGlyphs">~{VRAM_W}</text><text x="656.3" y="447.5" textLength="20.7" lengthAdjust="spacingAndGlyphs">~{VRAM_W}</text><text x="656.3" y="456.6" textLength="20.7" lengthAdjust="spacingAndGlyphs">~{VRAM_W}</text><text x="656.3" y="474.9" textLength="20.7" lengthAdjust="spacingAndGlyphs">~{VRAM_W}</text><text x="656.3" y="484.1" textLength="20.7" lengthAdjust="spacingAndGlyphs">~{VRAM_W}</text><text x="656.3" y="502.4" textLength="18.4" lengthAdjust="spacingAndGlyphs">VRAM_A15</text><text transform="translate(336.1 326.2) rotate(-90)" textLength="34.5" lengthAdjust="spacingAndGlyphs">~{VRAM_WE1_UPD}</text><text transform="translate(345.3 326.2) rotate(-90)" textLength="23.0" lengthAdjust="spacingAndGlyphs">~{VRAM_WE}</text><text transform="translate(354.4 326.2) rotate(-90)" textLength="23.0" lengthAdjust="spacingAndGlyphs">~{VRAM_WE}</text><text transform="translate(363.4 326.2) rotate(-90)" textLength="23.0" lengthAdjust="spacingAndGlyphs">~{VRAM_WE}</text><text transform="translate(372.4 326.2) rotate(-90)" textLength="23.0" lengthAdjust="spacingAndGlyphs">~{VRAM_WE}</text><text transform="translate(381.6 326.2) rotate(-90)" textLength="23.0" lengthAdjust="spacingAndGlyphs">~{VRAM_WE}</text><text transform="translate(390.7 326.2) rotate(-90)" textLength="23.0" lengthAdjust="spacingAndGlyphs">~{VRAM_WE}</text><text transform="translate(399.7 326.2) rotate(-90)" textLength="23.0" lengthAdjust="spacingAndGlyphs">~{VRAM_WE}</text><text transform="translate(408.7 326.2) rotate(-90)" textLength="23.0" lengthAdjust="spacingAndGlyphs">~{VRAM_WE}</text><text transform="translate(326.7 353.3) rotate(-90)" textLength="20.7" lengthAdjust="spacingAndGlyphs">~{VRAM_W}</text><text transform="translate(336.1 353.3) rotate(-90)" textLength="11.5" lengthAdjust="spacingAndGlyphs">VRAM_</text><text transform="translate(345.3 353.3) rotate(-90)" textLength="11.5" lengthAdjust="spacingAndGlyphs">VRAM_</text><text transform="translate(354.4 353.3) rotate(-90)" textLength="11.5" lengthAdjust="spacingAndGlyphs">VRAM_</text><text transform="translate(363.4 353.3) rotate(-90)" textLength="11.5" lengthAdjust="spacingAndGlyphs">VRAM_</text><text transform="translate(372.4 353.3) rotate(-90)" textLength="11.5" lengthAdjust="spacingAndGlyphs">VRAM_</text><text transform="translate(381.6 353.3) rotate(-90)" textLength="11.5" lengthAdjust="spacingAndGlyphs">VRAM_</text><text transform="translate(390.7 353.3) rotate(-90)" textLength="11.5" lengthAdjust="spacingAndGlyphs">VRAM_</text><text transform="translate(399.7 353.3) rotate(-90)" textLength="11.5" lengthAdjust="spacingAndGlyphs">VRAM_</text><text transform="translate(440.1 326.2) rotate(-90)" textLength="34.5" lengthAdjust="spacingAndGlyphs">~{VRAM_WE1_UPD}</text><text transform="translate(449.1 326.2) rotate(-90)" textLength="23.0" lengthAdjust="spacingAndGlyphs">~{VRAM_WE}</text><text transform="translate(458.1 326.2) rotate(-90)" textLength="23.0" lengthAdjust="spacingAndGlyphs">~{VRAM_WE}</text><text transform="translate(467.3 326.2) rotate(-90)" textLength="23.0" lengthAdjust="spacingAndGlyphs">~{VRAM_WE}</text><text transform="translate(476.4 326.2) rotate(-90)" textLength="23.0" lengthAdjust="spacingAndGlyphs">~{VRAM_WE}</text><text transform="translate(485.4 326.2) rotate(-90)" textLength="23.0" lengthAdjust="spacingAndGlyphs">~{VRAM_WE}</text><text transform="translate(494.4 326.2) rotate(-90)" textLength="23.0" lengthAdjust="spacingAndGlyphs">~{VRAM_WE}</text><text transform="translate(503.6 326.2) rotate(-90)" textLength="23.0" lengthAdjust="spacingAndGlyphs">~{VRAM_WE}</text><text transform="translate(512.7 326.2) rotate(-90)" textLength="23.0" lengthAdjust="spacingAndGlyphs">~{VRAM_WE}</text><text transform="translate(430.7 353.3) rotate(-90)" textLength="20.7" lengthAdjust="spacingAndGlyphs">~{VRAM_W}</text><text transform="translate(440.1 353.3) rotate(-90)" textLength="11.5" lengthAdjust="spacingAndGlyphs">VRAM_</text><text transform="translate(449.1 353.3) rotate(-90)" textLength="11.5" lengthAdjust="spacingAndGlyphs">VRAM_</text><text transform="translate(458.1 353.3) rotate(-90)" textLength="11.5" lengthAdjust="spacingAndGlyphs">VRAM_</text><text transform="translate(467.3 353.3) rotate(-90)" textLength="11.5" lengthAdjust="spacingAndGlyphs">VRAM_</text><text transform="translate(476.4 353.3) rotate(-90)" textLength="11.5" lengthAdjust="spacingAndGlyphs">VRAM_</text><text transform="translate(485.4 353.3) rotate(-90)" textLength="11.5" lengthAdjust="spacingAndGlyphs">VRAM_</text><text transform="translate(494.4 353.3) rotate(-90)" textLength="11.5" lengthAdjust="spacingAndGlyphs">VRAM_</text><text transform="translate(503.6 353.3) rotate(-90)" textLength="11.5" lengthAdjust="spacingAndGlyphs">VRAM_</text><text transform="translate(340.9 380.2) rotate(-90)" textLength="11.5" lengthAdjust="spacingAndGlyphs">VRAM_</text><text transform="translate(349.8 380.2) rotate(-90)" textLength="11.5" lengthAdjust="spacingAndGlyphs">VRAM_</text><text transform="translate(359.1 380.2) rotate(-90)" textLength="11.5" lengthAdjust="spacingAndGlyphs">VRAM_</text><text transform="translate(368.3 380.2) rotate(-90)" textLength="11.5" lengthAdjust="spacingAndGlyphs">VRAM_</text><text transform="translate(377.4 380.2) rotate(-90)" textLength="11.5" lengthAdjust="spacingAndGlyphs">VRAM_</text><text transform="translate(386.6 380.2) rotate(-90)" textLength="11.5" lengthAdjust="spacingAndGlyphs">VRAM_</text><text transform="translate(395.6 380.2) rotate(-90)" textLength="11.5" lengthAdjust="spacingAndGlyphs">VRAM_</text><text transform="translate(404.7 380.2) rotate(-90)" textLength="11.5" lengthAdjust="spacingAndGlyphs">VRAM_</text><text transform="translate(413.9 380.2) rotate(-90)" textLength="11.5" lengthAdjust="spacingAndGlyphs">VRAM_</text><text transform="translate(422.9 380.2) rotate(-90)" textLength="11.5" lengthAdjust="spacingAndGlyphs">VRAM_</text><text transform="translate(432.1 380.2) rotate(-90)" textLength="11.5" lengthAdjust="spacingAndGlyphs">VRAM_</text><text transform="translate(441.3 380.2) rotate(-90)" textLength="11.5" lengthAdjust="spacingAndGlyphs">VRAM_</text><text transform="translate(450.5 380.2) rotate(-90)" textLength="11.5" lengthAdjust="spacingAndGlyphs">VRAM_</text><text transform="translate(459.5 380.2) rotate(-90)" textLength="11.5" lengthAdjust="spacingAndGlyphs">VRAM_</text><text transform="translate(468.4 380.2) rotate(-90)" textLength="11.5" lengthAdjust="spacingAndGlyphs">VRAM_</text><text transform="translate(477.6 380.2) rotate(-90)" textLength="11.5" lengthAdjust="spacingAndGlyphs">VRAM_</text><text transform="translate(486.8 380.2) rotate(-90)" textLength="11.5" lengthAdjust="spacingAndGlyphs">VRAM_</text><text transform="translate(496.0 380.2) rotate(-90)" textLength="11.5" lengthAdjust="spacingAndGlyphs">VRAM_</text><text transform="translate(504.9 380.2) rotate(-90)" textLength="9.2" lengthAdjust="spacingAndGlyphs">VRAM</text><text transform="translate(332.0 434.4) rotate(-90)" textLength="29.9" lengthAdjust="spacingAndGlyphs">~{VRAM_WE1_U}</text><text transform="translate(340.9 434.4) rotate(-90)" textLength="29.9" lengthAdjust="spacingAndGlyphs">~{VRAM_WE1_U}</text><text transform="translate(349.8 434.4) rotate(-90)" textLength="6.9" lengthAdjust="spacingAndGlyphs">NC1</text><text transform="translate(359.1 434.4) rotate(-90)" textLength="6.9" lengthAdjust="spacingAndGlyphs">GND</text><text transform="translate(368.3 434.4) rotate(-90)" textLength="25.3" lengthAdjust="spacingAndGlyphs">~{VRAM_WE1}</text><text transform="translate(377.4 434.4) rotate(-90)" textLength="29.9" lengthAdjust="spacingAndGlyphs">~{VRAM_WE1_U}</text><text transform="translate(422.9 434.4) rotate(-90)" textLength="6.9" lengthAdjust="spacingAndGlyphs">NC1</text><text transform="translate(432.1 434.4) rotate(-90)" textLength="6.9" lengthAdjust="spacingAndGlyphs">GND</text><text transform="translate(441.3 434.4) rotate(-90)" textLength="6.9" lengthAdjust="spacingAndGlyphs">+5V</text><text transform="translate(450.5 434.4) rotate(-90)" textLength="6.9" lengthAdjust="spacingAndGlyphs">CLK</text><text transform="translate(459.5 434.4) rotate(-90)" textLength="6.9" lengthAdjust="spacingAndGlyphs">NC1</text><text transform="translate(468.4 434.4) rotate(-90)" textLength="6.9" lengthAdjust="spacingAndGlyphs">GND</text><text transform="translate(477.6 434.4) rotate(-90)" textLength="6.9" lengthAdjust="spacingAndGlyphs">+5V</text><text transform="translate(486.8 434.4) rotate(-90)" textLength="6.9" lengthAdjust="spacingAndGlyphs">CLK</text><text transform="translate(496.0 434.4) rotate(-90)" textLength="6.9" lengthAdjust="spacingAndGlyphs">NC1</text><text transform="translate(302.5 462.2) rotate(-90)" textLength="27.6" lengthAdjust="spacingAndGlyphs">~{VRAM_WE1_}</text><text transform="translate(311.7 462.2) rotate(-90)" textLength="13.8" lengthAdjust="spacingAndGlyphs">VRAM_A</text><text transform="translate(329.9 462.2) rotate(-90)" textLength="27.6" lengthAdjust="spacingAndGlyphs">~{VRAM_WE1_}</text><text transform="translate(338.8 462.2) rotate(-90)" textLength="27.6" lengthAdjust="spacingAndGlyphs">~{VRAM_WE1_}</text><text transform="translate(293.4 489.0) rotate(-90)" textLength="4.6" lengthAdjust="spacingAndGlyphs">D0</text><text transform="translate(302.5 489.0) rotate(-90)" textLength="18.4" lengthAdjust="spacingAndGlyphs">VRAM_A11</text><text transform="translate(320.7 489.0) rotate(-90)" textLength="18.4" lengthAdjust="spacingAndGlyphs">VRAM_A02</text><text transform="translate(329.9 489.0) rotate(-90)" textLength="18.4" lengthAdjust="spacingAndGlyphs">VRAM_A13</text><text transform="translate(338.8 489.0) rotate(-90)" textLength="18.4" lengthAdjust="spacingAndGlyphs">VRAM_A04</text><text transform="translate(547.4 432.3) rotate(-90)" textLength="18.4" lengthAdjust="spacingAndGlyphs">VRAM_A15</text><text transform="translate(556.4 432.3) rotate(-90)" textLength="23.0" lengthAdjust="spacingAndGlyphs">~{VRAM_WE}</text><text transform="translate(565.6 432.3) rotate(-90)" textLength="4.6" lengthAdjust="spacingAndGlyphs">D7</text><text transform="translate(583.9 432.3) rotate(-90)" textLength="9.2" lengthAdjust="spacingAndGlyphs">VRAM</text><text transform="translate(592.9 432.3) rotate(-90)" textLength="18.4" lengthAdjust="spacingAndGlyphs">VRAM_A19</text><text transform="translate(602.3 432.3) rotate(-90)" textLength="34.5" lengthAdjust="spacingAndGlyphs">~{VRAM_WE1_UPD}</text><text transform="translate(538.4 459.7) rotate(-90)" textLength="18.4" lengthAdjust="spacingAndGlyphs">VRAM_A11</text><text transform="translate(547.4 459.7) rotate(-90)" textLength="4.6" lengthAdjust="spacingAndGlyphs">D4</text><text transform="translate(556.4 459.7) rotate(-90)" textLength="4.6" lengthAdjust="spacingAndGlyphs">D5</text><text transform="translate(565.6 459.7) rotate(-90)" textLength="18.4" lengthAdjust="spacingAndGlyphs">VRAM_A04</text><text transform="translate(574.7 459.7) rotate(-90)" textLength="18.4" lengthAdjust="spacingAndGlyphs">VRAM_A15</text><text transform="translate(583.9 459.7) rotate(-90)" textLength="18.4" lengthAdjust="spacingAndGlyphs">VRAM_A06</text><text transform="translate(592.9 459.7) rotate(-90)" textLength="18.4" lengthAdjust="spacingAndGlyphs">VRAM_A17</text><text x="587.5" y="351.0" textLength="6.9" lengthAdjust="spacingAndGlyphs">GND</text></g>
</svg>
<div class="a " style="left:676px;top:84px;width:210px;height:515px;background:#fff;border:1px solid #7a8a99;border-right:none"></div>
<span id="t8" class="t " style="left:682.50px;top:87.30px;font-size:13px;line-height:13px;color:#333;transform:scaleX(1.2529);">= Z</span>
<span id="t9" class="t " style="left:678.00px;top:104.30px;font-size:13px;line-height:13px;color:#333;transform:scaleX(1.1417);">+5V = 1</span>
<span id="t10" class="t " style="left:678.00px;top:121.30px;font-size:13px;line-height:13px;color:#333;transform:scaleX(1.0994);">GND = 0</span>
<span id="t11" class="t " style="left:678.00px;top:138.30px;font-size:13px;line-height:13px;color:#333;transform:scaleX(1.1498);">Net-(D1-Pad1) = Z</span>
<span id="t12" class="t " style="left:678.00px;top:155.30px;font-size:13px;line-height:13px;color:#333;transform:scaleX(1.1498);">Net-(D2-Pad1) = Z</span>
<span id="t13" class="t " style="left:678.00px;top:172.30px;font-size:13px;line-height:13px;color:#333;transform:scaleX(1.1498);">Net-(D3-Pad1) = Z</span>
<span id="t14" class="t " style="left:678.00px;top:189.30px;font-size:13px;line-height:13px;color:#333;transform:scaleX(1.1323);">/~{UPD_SEL} = 1</span>
<span id="t15" class="t " style="left:678.00px;top:206.30px;font-size:13px;line-height:13px;color:#333;transform:scaleX(1.1498);">Net-(D4-Pad2) = Z</span>
<span id="t16" class="t " style="left:678.00px;top:223.30px;font-size:13px;line-height:13px;color:#333;transform:scaleX(1.1498);">Net-(D5-Pad2) = Z</span>
<span id="t17" class="t " style="left:678.00px;top:240.30px;font-size:13px;line-height:13px;color:#333;transform:scaleX(1.0395);">/BUF_SEL = 0</span>
<span id="t18" class="t " style="left:678.00px;top:257.30px;font-size:13px;line-height:13px;color:#333;transform:scaleX(1.1498);">Net-(D6-Pad2) = Z</span>
<span id="t19" class="t " style="left:678.00px;top:274.30px;font-size:13px;line-height:13px;color:#333;transform:scaleX(1.1498);">Net-(D7-Pad2) = Z</span>
<span id="t20" class="t " style="left:678.00px;top:291.30px;font-size:13px;line-height:13px;color:#333;transform:scaleX(1.1163);">/A0 = Z</span>
<span id="t21" class="t " style="left:678.00px;top:308.30px;font-size:13px;line-height:13px;color:#333;transform:scaleX(1.1163);">/A1 = Z</span>
<span id="t22" class="t " style="left:678.00px;top:325.30px;font-size:13px;line-height:13px;color:#333;transform:scaleX(1.1163);">/A2 = Z</span>
<span id="t23" class="t " style="left:678.00px;top:342.30px;font-size:13px;line-height:13px;color:#333;transform:scaleX(1.1171);">unconnected-(J1-Pad4) = Z</span>
<span id="t24" class="t " style="left:678.00px;top:359.30px;font-size:13px;line-height:13px;color:#333;transform:scaleX(1.1395);">/D0 = Z</span>
<span id="t25" class="t " style="left:678.00px;top:376.30px;font-size:13px;line-height:13px;color:#333;transform:scaleX(1.1395);">/D1 = Z</span>
<span id="t26" class="t " style="left:678.00px;top:393.30px;font-size:13px;line-height:13px;color:#333;transform:scaleX(1.1395);">/D2 = Z</span>
<span id="t27" class="t " style="left:678.00px;top:410.30px;font-size:13px;line-height:13px;color:#333;transform:scaleX(1.1395);">/D3 = Z</span>
<span id="t28" class="t " style="left:678.00px;top:427.30px;font-size:13px;line-height:13px;color:#333;transform:scaleX(1.1395);">/D4 = Z</span>
<span id="t29" class="t " style="left:678.00px;top:444.30px;font-size:13px;line-height:13px;color:#333;transform:scaleX(1.1395);">/D5 = Z</span>
<span id="t30" class="t " style="left:678.00px;top:461.30px;font-size:13px;line-height:13px;color:#333;transform:scaleX(1.1395);">/D6 = Z</span>
<span id="t31" class="t " style="left:678.00px;top:478.30px;font-size:13px;line-height:13px;color:#333;transform:scaleX(1.1395);">/D7 = Z</span>
<span id="t32" class="t " style="left:678.00px;top:495.30px;font-size:13px;line-height:13px;color:#333;transform:scaleX(1.1208);">/~{GFX_SEL} = 1</span>
<span id="t33" class="t " style="left:678.00px;top:512.30px;font-size:13px;line-height:13px;color:#333;transform:scaleX(1.2227);">/~{RD} = 1</span>
<span id="t34" class="t " style="left:678.00px;top:529.30px;font-size:13px;line-height:13px;color:#333;transform:scaleX(1.2302);">/~{WR} = 1</span>
<span id="t35" class="t " style="left:678.00px;top:546.30px;font-size:13px;line-height:13px;color:#333;transform:scaleX(1.2125);">/~{WAIT} = 1</span>
<span id="t36" class="t " style="left:678.00px;top:563.30px;font-size:13px;line-height:13px;color:#333;transform:scaleX(1.1171);">unconnected-(J2-Pad4) = Z</span>
<span id="t37" class="t " style="left:678.00px;top:580.30px;font-size:13px;line-height:13px;color:#333;transform:scaleX(1.1171);">unconnected-(J2-Pad9) = Z</span>
<div class="a sbtrack" style="left:886px;top:84px;width:16px;height:515px;border-top:1px solid #7a8a99;border-right:1px solid #7a8a99"></div>
<div class="a arrbtn" style="left:886px;top:84px;width:16px;height:16px;border-bottom:none"></div>
<div class="a arrbtn" style="left:886px;top:583px;width:16px;height:16px;"></div>
<svg class="a" style="left:886px;top:84px" width="16" height="16"><path d="M4 10.5h8l-4 -4.5z" fill="#333"/></svg>
<svg class="a" style="left:886px;top:583px" width="16" height="16"><path d="M4 6h8l-4 4.5z" fill="#333"/></svg>
<div class="a thumbv" style="left:886px;top:100px;width:16px;height:68px;border-right-color:#7a8a99"></div>
<div class="a " style="left:890px;top:132px;width:9px;height:1px;background:#6382bf"></div>
<div class="a " style="left:890px;top:134px;width:9px;height:1px;background:#6382bf"></div>
<div class="a " style="left:890px;top:136px;width:9px;height:1px;background:#6382bf"></div>
<div class="a " style="left:904px;top:0px;width:1016px;height:432px;background:#000;border-radius:8px 8px 0 0;overflow:hidden"><div class="a tb" style="left:0px;top:0px;width:1016px;height:32px;background:linear-gradient(90deg,#b4b4b4 0,#d4d4d4 4px,#e3e3e3 8px,#e8e8e8 13px)"></div></div>
<span id="t38" class="t " style="left:1372.20px;top:9.70px;font-size:13px;line-height:13px;color:#858585;transform:scaleX(1.0095);">VGA Monitor</span>
<div class="a " style="left:1843px;top:18px;width:8px;height:1px;background:#b0b0b0"></div>
<div class="a " style="left:1871px;top:12px;width:8px;height:8px;border:1px solid #b0b0b0"></div>
<svg class="a" style="left:1893px;top:6px" width="20" height="20"><circle cx="10" cy="10" r="9.2" fill="#9a9a9a"/><path d="M6.6 6.6L13.4 13.4M13.4 6.6L6.6 13.4" stroke="#fff" stroke-width="2" stroke-linecap="round"/></svg>
<svg class="a" style="left:904px;top:32px" width="1016" height="400">
<defs>
<filter id="nz" x="0" y="0" width="1016" height="400" filterUnits="userSpaceOnUse" primitiveUnits="userSpaceOnUse" color-interpolation-filters="sRGB">
<feTurbulence type="fractalNoise" baseFrequency="0.93 0.97" numOctaves="1" seed="7" result="n"/>
<feComponentTransfer in="n" result="th">
<feFuncR type="discrete" tableValues="0 1"/><feFuncG type="discrete" tableValues="0 1"/><feFuncB type="discrete" tableValues="0 1"/><feFuncA type="discrete" tableValues="1 1"/>
</feComponentTransfer>
<feFlood x="0" y="0" width="1" height="1" flood-color="#fff" result="f"/>
<feComposite in="f" in2="f" operator="over" x="0" y="0" width="2" height="1" result="c"/>
<feTile in="c" result="tl"/>
<feComposite in="th" in2="tl" operator="in" result="ev"/>
<feOffset in="ev" dx="1" dy="0" result="od"/>
<feMerge result="mg"><feMergeNode in="ev"/><feMergeNode in="od"/></feMerge>
<feComposite in="mg" in2="SourceAlpha" operator="in"/>
</filter>
</defs>
<g filter="url(#nz)"><rect x="416" y="9" width="389" height="291"/><rect x="4" y="0" width="401" height="1"/><rect x="609" y="1" width="388" height="8"/></g>
<rect x="205" y="337" width="3" height="3" fill="#fff"/>
</svg>
<span id="t39" class="t " style="left:913.40px;top:33.51px;font-size:17px;line-height:17px;color:#f4f4f4;font-weight:400;transform:scaleX(0.9450);">FPS: 0.0</span>
<div class="a " style="left:0px;top:603px;width:902px;height:433px;background:#eee;border-radius:8px 8px 0 0;overflow:hidden"><div class="a tb" style="left:0px;top:0px;width:902px;height:32px;"></div><div class="a " style="left:0px;top:0px;width:902px;height:14px;background:linear-gradient(180deg,rgba(0,0,0,.24) 0,rgba(0,0,0,.12) 4px,rgba(0,0,0,.04) 9px,rgba(0,0,0,0) 14px)"></div></div>
<span id="t40" class="t " style="left:404.50px;top:612.70px;font-size:13px;line-height:13px;color:#858585;transform:scaleX(1.0273);">Memory Editor</span>
<div class="a " style="left:825px;top:621px;width:8px;height:1px;background:#b0b0b0"></div>
<div class="a " style="left:853px;top:615px;width:8px;height:8px;border:1px solid #b0b0b0"></div>
<svg class="a" style="left:875px;top:609px" width="20" height="20"><circle cx="10" cy="10" r="9.2" fill="#9a9a9a"/><path d="M6.6 6.6L13.4 13.4M13.4 6.6L6.6 13.4" stroke="#fff" stroke-width="2" stroke-linecap="round"/></svg>
<div class="a " style="left:0px;top:635px;width:902px;height:24px;background:#eee;border:1px solid #7a8a99;box-shadow:inset 1px 1px 0 #b8cfe5,inset -1px -1px 0 #b8cfe5"></div>
<div class="a btn" style="left:882px;top:635px;width:20px;height:24px;"></div>
<svg class="a" style="left:882px;top:635px" width="20" height="24"><path d="M5 10.5h10l-5 5z" fill="#333"/></svg>
<span id="t41" class="t " style="left:3.50px;top:640.00px;font-size:13px;line-height:13px;color:#333;transform:scaleX(1.0576);">71256SA25TPG 51</span>
<div class="a " style="left:0px;top:659px;width:886px;height:351px;background:#fff;border:1px solid #7a8a99;border-right:none;overflow:hidden"></div>
<div class="a " style="left:0px;top:659px;width:885px;height:350px;overflow:hidden"><span id="t42" class="t  m" style="left:1.60px;top:-0.40px;font-size:13px;line-height:13px;color:#222;font-weight:400;transform:scaleX(0.8943);">00007FE4: 6D25452F</span><span id="t43" class="t  m" style="left:1.60px;top:14.60px;font-size:13px;line-height:13px;color:#222;font-weight:400;transform:scaleX(0.8943);">00007FE5: 334DD090</span><span id="t44" class="t  m" style="left:1.60px;top:29.60px;font-size:13px;line-height:13px;color:#222;font-weight:400;transform:scaleX(0.8943);">00007FE6: 287A42AA</span><span id="t45" class="t  m" style="left:1.60px;top:44.60px;font-size:13px;line-height:13px;color:#222;font-weight:400;transform:scaleX(0.8943);">00007FE7: 1BDF0E42</span><span id="t46" class="t  m" style="left:1.60px;top:59.60px;font-size:13px;line-height:13px;color:#222;font-weight:400;transform:scaleX(0.8943);">00007FE8: 6175023D</span><span id="t47" class="t  m" style="left:1.60px;top:74.60px;font-size:13px;line-height:13px;color:#222;font-weight:400;transform:scaleX(0.8943);">00007FE9: 11FCBD46</span><span id="t48" class="t  m" style="left:1.60px;top:89.60px;font-size:13px;line-height:13px;color:#222;font-weight:400;transform:scaleX(0.8943);">00007FEA: 0CF5BE87</span><span id="t49" class="t  m" style="left:1.60px;top:104.60px;font-size:13px;line-height:13px;color:#222;font-weight:400;transform:scaleX(0.8943);">00007FEB: 7AF68055</span><span id="t50" class="t  m" style="left:1.60px;top:119.60px;font-size:13px;line-height:13px;color:#222;font-weight:400;transform:scaleX(0.8943);">00007FEC: 323C3894</span><span id="t51" class="t  m" style="left:1.60px;top:134.60px;font-size:13px;line-height:13px;color:#222;font-weight:400;transform:scaleX(0.8943);">00007FED: 76AE6901</span><span id="t52" class="t  m" style="left:1.60px;top:149.60px;font-size:13px;line-height:13px;color:#222;font-weight:400;transform:scaleX(0.8943);">00007FEE: 463B5FC3</span><span id="t53" class="t  m" style="left:1.60px;top:164.60px;font-size:13px;line-height:13px;color:#222;font-weight:400;transform:scaleX(0.8943);">00007FEF: 402D5169</span><span id="t54" class="t  m" style="left:1.60px;top:179.60px;font-size:13px;line-height:13px;color:#222;font-weight:400;transform:scaleX(0.8943);">00007FF0: 5ECAFABB</span><span id="t55" class="t  m" style="left:1.60px;top:194.60px;font-size:13px;line-height:13px;color:#222;font-weight:400;transform:scaleX(0.8943);">00007FF1: 43A3C73C</span><span id="t56" class="t  m" style="left:1.60px;top:209.60px;font-size:13px;line-height:13px;color:#222;font-weight:400;transform:scaleX(0.8943);">00007FF2: 6F7C267E</span><span id="t57" class="t  m" style="left:1.60px;top:224.60px;font-size:13px;line-height:13px;color:#222;font-weight:400;transform:scaleX(0.8943);">00007FF3: 2B014211</span><span id="t58" class="t  m" style="left:1.60px;top:239.60px;font-size:13px;line-height:13px;color:#222;font-weight:400;transform:scaleX(0.8943);">00007FF4: 78AB7A34</span><span id="t59" class="t  m" style="left:1.60px;top:254.60px;font-size:13px;line-height:13px;color:#222;font-weight:400;transform:scaleX(0.8943);">00007FF5: 08B7EC4A</span><span id="t60" class="t  m" style="left:1.60px;top:269.60px;font-size:13px;line-height:13px;color:#222;font-weight:400;transform:scaleX(0.8943);">00007FF6: 7D5C228D</span><span id="t61" class="t  m" style="left:1.60px;top:284.60px;font-size:13px;line-height:13px;color:#222;font-weight:400;transform:scaleX(0.8943);">00007FF7: 225F7AD3</span><span id="t62" class="t  m" style="left:1.60px;top:299.60px;font-size:13px;line-height:13px;color:#222;font-weight:400;transform:scaleX(0.8943);">00007FF8: 371934AE</span><span id="t63" class="t  m" style="left:1.60px;top:314.60px;font-size:13px;line-height:13px;color:#222;font-weight:400;transform:scaleX(0.8943);">00007FF9: 6D348640</span><span id="t64" class="t  m" style="left:1.60px;top:329.60px;font-size:13px;line-height:13px;color:#222;font-weight:400;transform:scaleX(0.8943);">00007FFA: 45ACF5D8</span><span id="t65" class="t  m" style="left:1.60px;top:344.60px;font-size:13px;line-height:13px;color:#222;font-weight:400;transform:scaleX(0.8943);">00007FFB: 7A523647</span></div>
<div class="a sbtrack" style="left:885px;top:659px;width:17px;height:351px;border-top:1px solid #7a8a99;border-right:1px solid #7a8a99;border-bottom:1px solid #7a8a99"></div>
<div class="a arrbtn" style="left:885px;top:659px;width:17px;height:16px;"></div>
<div class="a arrbtn" style="left:885px;top:994px;width:17px;height:16px;"></div>
<svg class="a" style="left:885px;top:659px" width="17" height="16"><path d="M4.5 10.5h8l-4 -4.5z" fill="#333"/></svg>
<svg class="a" style="left:885px;top:994px" width="17" height="16"><path d="M4.5 6h8l-4 4.5z" fill="#333"/></svg>
<div class="a thumbv" style="left:885px;top:979px;width:17px;height:15px;"></div>
<div class="a " style="left:889px;top:984px;width:9px;height:1px;background:#6382bf"></div>
<div class="a " style="left:889px;top:986px;width:9px;height:1px;background:#6382bf"></div>
<div class="a " style="left:889px;top:988px;width:9px;height:1px;background:#6382bf"></div>
<div class="a btn" style="left:0px;top:1010px;width:902px;height:26px;"></div>
<span id="t66" class="t " style="left:398.40px;top:1017.00px;font-size:13px;line-height:13px;color:#333;transform:scaleX(1.0991);">Apply Changes</span>
<div class="a " style="left:595px;top:1036px;width:307px;height:3px;background:#e4e4de"></div>
<div class="a " style="left:672px;top:1036px;width:44px;height:3px;background:#ededb0"></div>
<div class="a " style="left:612px;top:1036px;width:30px;height:2px;background:#bdbdb8"></div>
<div class="a " style="left:848px;top:1037px;width:34px;height:2px;background:#b8b8b4"></div>
<div class="a " style="left:904px;top:437px;width:1016px;height:602px;background:#eee;border-radius:8px 8px 0 0;overflow:hidden"><div class="a tb" style="left:0px;top:0px;width:1016px;height:32px;"></div><div class="a " style="left:0px;top:0px;width:13px;height:67px;background:linear-gradient(90deg,rgba(0,0,0,.22) 0,rgba(0,0,0,.09) 4px,rgba(0,0,0,.03) 8px,rgba(0,0,0,0) 13px)"></div></div>
<span id="t67" class="t " style="left:1372.50px;top:446.70px;font-size:13px;line-height:13px;color:#858585;transform:scaleX(0.9859);">Signal Chart</span>
<div class="a " style="left:1843px;top:455px;width:8px;height:1px;background:#b0b0b0"></div>
<div class="a " style="left:1871px;top:449px;width:8px;height:8px;border:1px solid #b0b0b0"></div>
<svg class="a" style="left:1893px;top:443px" width="20" height="20"><circle cx="10" cy="10" r="9.2" fill="#9a9a9a"/><path d="M6.6 6.6L13.4 13.4M13.4 6.6L6.6 13.4" stroke="#fff" stroke-width="2" stroke-linecap="round"/></svg>
<div class="a " style="left:1128px;top:474px;width:209px;height:24px;background:#eee;border:1px solid #7a8a99;box-shadow:inset 1px 1px 0 #b8cfe5,inset -1px -1px 0 #b8cfe5"></div>
<div class="a btn" style="left:1317px;top:474px;width:20px;height:24px;"></div>
<svg class="a" style="left:1317px;top:474px" width="20" height="24"><path d="M5 10h10l-5 5z" fill="#333"/></svg>
<div class="a btn" style="left:1342px;top:474px;width:109px;height:25px;"></div><span id="t68" class="t " style="left:1359.20px;top:480.00px;font-size:13px;line-height:13px;color:#333;transform:scaleX(1.1047);">Add Signal</span>
<div class="a btn" style="left:1456px;top:474px;width:91px;height:25px;"></div><span id="t69" class="t " style="left:1473.00px;top:480.00px;font-size:13px;line-height:13px;color:#333;transform:scaleX(1.0570);">Add Bus</span>
<div class="a btn" style="left:1552px;top:474px;width:68px;height:25px;"></div><span id="t70" class="t " style="left:1569.80px;top:480.00px;font-size:13px;line-height:13px;color:#333;transform:scaleX(1.0864);">Save</span>
<div class="a btn" style="left:1625px;top:474px;width:69px;height:25px;"></div><span id="t71" class="t " style="left:1642.40px;top:480.00px;font-size:13px;line-height:13px;color:#333;transform:scaleX(1.1074);">Load</span>
<div class="a " style="left:904px;top:504px;width:817px;height:535px;background:#000"></div>
<svg class="a" style="left:0;top:0" width="1920" height="1039" shape-rendering="crispEdges">
<rect x="908" y="516" width="812" height="11" fill="#002000"/>
<rect x="908" y="533" width="812" height="11" fill="#002000"/>
<rect x="908" y="550" width="812" height="11" fill="#002000"/>
<rect x="908" y="567" width="812" height="11" fill="#002000"/>
<rect x="908" y="584" width="812" height="11" fill="#002000"/>
<rect x="908" y="601" width="812" height="11" fill="#002000"/>
<rect x="908" y="618" width="812" height="11" fill="#002000"/>
<rect x="908" y="635" width="812" height="11" fill="#002000"/>
<rect x="908" y="652" width="812" height="11" fill="#002000"/>
<rect x="908" y="669" width="812" height="11" fill="#002000"/>
<rect x="908" y="686" width="812" height="11" fill="#002000"/>
<rect x="908" y="703" width="812" height="11" fill="#002000"/>
<rect x="908" y="720" width="812" height="11" fill="#002000"/>
<rect x="908" y="737" width="812" height="11" fill="#002000"/>
<rect x="908" y="754" width="812" height="11" fill="#002000"/>
<rect x="908" y="771" width="812" height="11" fill="#002000"/>
<rect x="908" y="788" width="812" height="11" fill="#002000"/>
<rect x="908" y="805" width="812" height="11" fill="#002000"/>
<rect x="908" y="822" width="812" height="11" fill="#002000"/>
<rect x="908" y="839" width="812" height="11" fill="#002000"/>
<rect x="908" y="856" width="812" height="11" fill="#002000"/>
<rect x="908" y="873" width="812" height="11" fill="#002000"/>
<rect x="908" y="890" width="812" height="11" fill="#002000"/>
<path d="M908 524.5H1720M908 541.5H965.5V530.5H1027.5V541.5H1090.5V530.5H1152.5V541.5H1215.5V530.5H1277.5V541.5H1340.5V530.5H1402.5V541.5H1465.5V530.5H1527.5V541.5H1590.5V530.5H1652.5V541.5H1715.5V530.5H1720M908 558.5H1720M908 564.5H1720M908 581.5H1720M908 598.5H1720M908 615.5H914.5V626.5H1008.5V615.5H1039.5V626.5H1133.5V615.5H1164.5V626.5H1258.5V615.5H1289.5V626.5H1383.5V615.5H1414.5V626.5H1508.5V615.5H1539.5V626.5H1633.5V615.5H1664.5V626.5H1720M908 643.5H909.5V632.5H940.5V643.5H971.5V632.5H1002.5V643.5H1034.5V632.5H1065.5V643.5H1096.5V632.5H1127.5V643.5H1159.5V632.5H1190.5V643.5H1221.5V632.5H1252.5V643.5H1284.5V632.5H1315.5V643.5H1346.5V632.5H1377.5V643.5H1409.5V632.5H1440.5V643.5H1471.5V632.5H1502.5V643.5H1534.5V632.5H1565.5V643.5H1596.5V632.5H1627.5V643.5H1659.5V632.5H1690.5V643.5H1720M908 649.5H1720M908 660.5H1720M908 666.5H1720M908 694.5H1720M908 700.5H1720M908 711.5H1720M908 717.5H1720M908 728.5H1720M908 734.5H1720M908 751.5H1720M908 779.5H1720M908 785.5H1720M908 802.5H1720M908 830.5H933.5V819.5H964.5V830.5H996.5V819.5H1027.5V830.5H1058.5V819.5H1089.5V830.5H1120.5V819.5H1152.5V830.5H1183.5V819.5H1214.5V830.5H1246.5V819.5H1277.5V830.5H1308.5V819.5H1339.5V830.5H1370.5V819.5H1402.5V830.5H1433.5V819.5H1464.5V830.5H1496.5V819.5H1527.5V830.5H1558.5V819.5H1589.5V830.5H1620.5V819.5H1652.5V830.5H1683.5V819.5H1714.5V830.5H1720M908 847.5H909.5V836.5H940.5V847.5H971.5V836.5H1002.5V847.5H1034.5V836.5H1065.5V847.5H1096.5V836.5H1127.5V847.5H1159.5V836.5H1190.5V847.5H1221.5V836.5H1252.5V847.5H1284.5V836.5H1315.5V847.5H1346.5V836.5H1377.5V847.5H1409.5V836.5H1440.5V847.5H1471.5V836.5H1502.5V847.5H1534.5V836.5H1565.5V847.5H1596.5V836.5H1627.5V847.5H1659.5V836.5H1690.5V847.5H1720M908 864.5H908.5V853.5H940.5V864.5H971.5V853.5H1002.5V864.5H1033.5V853.5H1065.5V864.5H1096.5V853.5H1127.5V864.5H1158.5V853.5H1190.5V864.5H1221.5V853.5H1252.5V864.5H1283.5V853.5H1315.5V864.5H1346.5V853.5H1377.5V864.5H1408.5V853.5H1440.5V864.5H1471.5V853.5H1502.5V864.5H1533.5V853.5H1565.5V864.5H1596.5V853.5H1627.5V864.5H1658.5V853.5H1690.5V864.5H1720M908 870.5H1720M908 898.5H1720" fill="none" stroke="#00ff00" stroke-width="1"/>
</svg>
<span id="t72" class="t " style="left:908.50px;top:518.00px;font-size:13px;line-height:13px;color:#fff;font-weight:400;transform:scaleX(0.9697);">/UPD7220_ALE</span>
<span id="t73" class="t " style="left:908.50px;top:535.00px;font-size:13px;line-height:13px;color:#fff;font-weight:400;transform:scaleX(0.9730);">/UPD7220_CLK</span>
<span id="t74" class="t " style="left:908.50px;top:552.00px;font-size:13px;line-height:13px;color:#fff;font-weight:400;transform:scaleX(0.9082);">/ALE_LATCH</span>
<span id="t75" class="t " style="left:908.50px;top:569.00px;font-size:13px;line-height:13px;color:#fff;font-weight:400;transform:scaleX(1.0064);">/~{UPD_ADR_EN}</span>
<span id="t76" class="t " style="left:908.50px;top:586.00px;font-size:13px;line-height:13px;color:#fff;font-weight:400;transform:scaleX(0.8897);">/BLANK_TMP</span>
<span id="t77" class="t " style="left:908.50px;top:603.00px;font-size:13px;line-height:13px;color:#fff;font-weight:400;transform:scaleX(0.9081);">/BLANK</span>
<span id="t78" class="t " style="left:908.50px;top:620.00px;font-size:13px;line-height:13px;color:#fff;font-weight:400;transform:scaleX(0.8866);">/LOAD_COLOR</span>
<span id="t79" class="t " style="left:908.50px;top:637.00px;font-size:13px;line-height:13px;color:#fff;font-weight:400;transform:scaleX(0.8761);">/LD_PIX_TMP</span>
<span id="t80" class="t " style="left:908.50px;top:654.00px;font-size:13px;line-height:13px;color:#fff;font-weight:400;transform:scaleX(0.9110);">/VRAM_A</span>
<span id="t81" class="t " style="left:908.50px;top:671.00px;font-size:13px;line-height:13px;color:#fff;font-weight:400;transform:scaleX(1.0563);">/~{UPD7220_DBIN}</span>
<span id="t82" class="t " style="left:908.50px;top:688.00px;font-size:13px;line-height:13px;color:#fff;font-weight:400;transform:scaleX(0.8791);">/IN_RMW_CYCLE</span>
<span id="t83" class="t " style="left:908.50px;top:705.00px;font-size:13px;line-height:13px;color:#fff;font-weight:400;transform:scaleX(0.9229);">/AD</span>
<span id="t84" class="t " style="left:908.50px;top:722.00px;font-size:13px;line-height:13px;color:#fff;font-weight:400;transform:scaleX(0.8962);">/VRAM_D</span>
<span id="t85" class="t " style="left:908.50px;top:739.00px;font-size:13px;line-height:13px;color:#fff;font-weight:400;transform:scaleX(1.0231);">/~{VRAM_WE1}</span>
<span id="t86" class="t " style="left:908.50px;top:756.00px;font-size:13px;line-height:13px;color:#fff;font-weight:400;transform:scaleX(1.0231);">/~{VRAM_WE2}</span>
<span id="t87" class="t " style="left:908.50px;top:773.00px;font-size:13px;line-height:13px;color:#fff;font-weight:400;transform:scaleX(1.0226);">/~{VRAM_CE1}</span>
<span id="t88" class="t " style="left:908.50px;top:790.00px;font-size:13px;line-height:13px;color:#fff;font-weight:400;transform:scaleX(1.0226);">/~{VRAM_CE2}</span>
<span id="t89" class="t " style="left:908.50px;top:807.00px;font-size:13px;line-height:13px;color:#fff;font-weight:400;transform:scaleX(1.0363);">/~{UPD_WR}</span>
<span id="t90" class="t " style="left:908.50px;top:824.00px;font-size:13px;line-height:13px;color:#fff;font-weight:400;transform:scaleX(0.8937);">/HALF_CLK</span>
<span id="t91" class="t " style="left:908.50px;top:841.00px;font-size:13px;line-height:13px;color:#fff;font-weight:400;transform:scaleX(0.8761);">/LD_PIX_TMP</span>
<span id="t92" class="t " style="left:908.50px;top:858.00px;font-size:13px;line-height:13px;color:#fff;font-weight:400;transform:scaleX(0.9925);">/~{HALF_CLK}</span>
<span id="t93" class="t " style="left:908.50px;top:875.00px;font-size:13px;line-height:13px;color:#fff;font-weight:400;transform:scaleX(1.0074);">/~{GFX_SEL}</span>
<span id="t94" class="t " style="left:908.50px;top:892.00px;font-size:13px;line-height:13px;color:#fff;font-weight:400;transform:scaleX(0.9174);">/UPD_WR</span>
<div class="a " style="left:1720px;top:504px;width:184px;height:535px;background:#eee;border-left:1px solid #7a8a99;border-top:1px solid #7a8a99;overflow:hidden"><div class="a " style="left:0px;top:0px;width:182px;height:534px;overflow:hidden"><div class="a btn" style="left:114px;top:0px;width:88px;height:25px;"></div><span id="t95" class="t " style="left:130.70px;top:6.00px;font-size:13px;line-height:13px;color:#333;transform:scaleX(1.0677);">Remove</span><span id="t96" class="t " style="left:18.50px;top:6.00px;font-size:13px;line-height:13px;color:#333;transform:scaleX(1.0030);">/UPD7220_ALE</span><div class="a btn" style="left:114px;top:25px;width:88px;height:25px;"></div><span id="t97" class="t " style="left:130.70px;top:31.00px;font-size:13px;line-height:13px;color:#333;transform:scaleX(1.0677);">Remove</span><span id="t98" class="t " style="left:17.00px;top:31.00px;font-size:13px;line-height:13px;color:#333;transform:scaleX(1.0113);">/UPD7220_CLK</span><div class="a btn" style="left:105px;top:50px;width:88px;height:25px;"></div><span id="t99" class="t " style="left:121.70px;top:56.00px;font-size:13px;line-height:13px;color:#333;transform:scaleX(1.0677);">Remove</span><span id="t100" class="t " style="left:26.30px;top:56.00px;font-size:13px;line-height:13px;color:#333;transform:scaleX(0.9595);">/ALE_LATCH</span><div class="a btn" style="left:125px;top:75px;width:88px;height:25px;"></div><span id="t101" class="t " style="left:141.70px;top:81.00px;font-size:13px;line-height:13px;color:#333;transform:scaleX(1.0677);">Remove</span><span id="t102" class="t " style="left:6.30px;top:81.00px;font-size:13px;line-height:13px;color:#333;transform:scaleX(1.0662);">/~{UPD_ADR_EN}</span><div class="a btn" style="left:108px;top:100px;width:88px;height:25px;"></div><span id="t103" class="t " style="left:124.70px;top:106.00px;font-size:13px;line-height:13px;color:#333;transform:scaleX(1.0677);">Remove</span><span id="t104" class="t " style="left:24.20px;top:106.00px;font-size:13px;line-height:13px;color:#333;transform:scaleX(0.9764);">/BLANK_TMP</span><div class="a btn" style="left:90px;top:125px;width:88px;height:25px;"></div><span id="t105" class="t " style="left:106.70px;top:131.00px;font-size:13px;line-height:13px;color:#333;transform:scaleX(1.0677);">Remove</span><span id="t106" class="t " style="left:41.00px;top:131.00px;font-size:13px;line-height:13px;color:#333;transform:scaleX(0.9570);">/BLANK</span><div class="a btn" style="left:114px;top:150px;width:88px;height:25px;"></div><span id="t107" class="t " style="left:130.70px;top:156.00px;font-size:13px;line-height:13px;color:#333;transform:scaleX(1.0677);">Remove</span><span id="t108" class="t " style="left:18.50px;top:156.00px;font-size:13px;line-height:13px;color:#333;transform:scaleX(0.9881);">/LOAD_COLOR</span><div class="a btn" style="left:108px;top:175px;width:88px;height:25px;"></div><span id="t109" class="t " style="left:124.70px;top:181.00px;font-size:13px;line-height:13px;color:#333;transform:scaleX(1.0677);">Remove</span><span id="t110" class="t " style="left:23.10px;top:181.00px;font-size:13px;line-height:13px;color:#333;transform:scaleX(0.9893);">/LD_PIX_TMP</span><div class="a btn" style="left:95px;top:200px;width:88px;height:25px;"></div><span id="t111" class="t " style="left:111.70px;top:206.00px;font-size:13px;line-height:13px;color:#333;transform:scaleX(1.0677);">Remove</span><span id="t112" class="t " style="left:37.00px;top:206.00px;font-size:13px;line-height:13px;color:#333;transform:scaleX(0.9570);">/VRAM_A</span><div class="a btn" style="left:132px;top:225px;width:88px;height:25px;"></div><span id="t113" class="t " style="left:148.70px;top:231.00px;font-size:13px;line-height:13px;color:#333;transform:scaleX(1.0677);">Remove</span><span id="t114" class="t " style="left:-0.30px;top:231.00px;font-size:13px;line-height:13px;color:#333;transform:scaleX(1.1165);">/~{UPD7220_DBIN}</span><div class="a btn" style="left:119px;top:250px;width:88px;height:25px;"></div><span id="t115" class="t " style="left:135.70px;top:256.00px;font-size:13px;line-height:13px;color:#333;transform:scaleX(1.0677);">Remove</span><span id="t116" class="t " style="left:12.00px;top:256.00px;font-size:13px;line-height:13px;color:#333;transform:scaleX(0.9756);">/IN_RMW_CYCLE</span><div class="a btn" style="left:77px;top:275px;width:88px;height:25px;"></div><span id="t117" class="t " style="left:93.70px;top:281.00px;font-size:13px;line-height:13px;color:#333;transform:scaleX(1.0677);">Remove</span><span id="t118" class="t " style="left:54.50px;top:281.00px;font-size:13px;line-height:13px;color:#333;transform:scaleX(0.9156);">/AD</span><div class="a btn" style="left:95px;top:300px;width:88px;height:25px;"></div><span id="t119" class="t " style="left:111.70px;top:306.00px;font-size:13px;line-height:13px;color:#333;transform:scaleX(1.0677);">Remove</span><span id="t120" class="t " style="left:36.00px;top:306.00px;font-size:13px;line-height:13px;color:#333;transform:scaleX(0.9741);">/VRAM_D</span><div class="a btn" style="left:119px;top:325px;width:88px;height:25px;"></div><span id="t121" class="t " style="left:135.70px;top:331.00px;font-size:13px;line-height:13px;color:#333;transform:scaleX(1.0677);">Remove</span><span id="t122" class="t " style="left:12.00px;top:331.00px;font-size:13px;line-height:13px;color:#333;transform:scaleX(1.1053);">/~{VRAM_WE1}</span><div class="a btn" style="left:119px;top:350px;width:88px;height:25px;"></div><span id="t123" class="t " style="left:135.70px;top:356.00px;font-size:13px;line-height:13px;color:#333;transform:scaleX(1.0677);">Remove</span><span id="t124" class="t " style="left:12.00px;top:356.00px;font-size:13px;line-height:13px;color:#333;transform:scaleX(1.1053);">/~{VRAM_WE2}</span><div class="a btn" style="left:117px;top:375px;width:88px;height:25px;"></div><span id="t125" class="t " style="left:133.70px;top:381.00px;font-size:13px;line-height:13px;color:#333;transform:scaleX(1.0677);">Remove</span><span id="t126" class="t " style="left:15.00px;top:381.00px;font-size:13px;line-height:13px;color:#333;transform:scaleX(1.0855);">/~{VRAM_CE1}</span><div class="a btn" style="left:117px;top:400px;width:88px;height:25px;"></div><span id="t127" class="t " style="left:133.70px;top:406.00px;font-size:13px;line-height:13px;color:#333;transform:scaleX(1.0677);">Remove</span><span id="t128" class="t " style="left:15.00px;top:406.00px;font-size:13px;line-height:13px;color:#333;transform:scaleX(1.0855);">/~{VRAM_CE2}</span><div class="a btn" style="left:111px;top:425px;width:88px;height:25px;"></div><span id="t129" class="t " style="left:127.70px;top:431.00px;font-size:13px;line-height:13px;color:#333;transform:scaleX(1.0677);">Remove</span><span id="t130" class="t " style="left:21.00px;top:431.00px;font-size:13px;line-height:13px;color:#333;transform:scaleX(1.1330);">/~{UPD_WR}</span><div class="a btn" style="left:101px;top:450px;width:88px;height:25px;"></div><span id="t131" class="t " style="left:117.70px;top:456.00px;font-size:13px;line-height:13px;color:#333;transform:scaleX(1.0677);">Remove</span><span id="t132" class="t " style="left:30.20px;top:456.00px;font-size:13px;line-height:13px;color:#333;transform:scaleX(0.9527);">/HALF_CLK</span><div class="a btn" style="left:108px;top:475px;width:88px;height:25px;"></div><span id="t133" class="t " style="left:124.70px;top:481.00px;font-size:13px;line-height:13px;color:#333;transform:scaleX(1.0677);">Remove</span><span id="t134" class="t " style="left:23.00px;top:481.00px;font-size:13px;line-height:13px;color:#333;transform:scaleX(0.9905);">/LD_PIX_TMP</span><div class="a btn" style="left:115px;top:500px;width:88px;height:25px;"></div><span id="t135" class="t " style="left:131.70px;top:506.00px;font-size:13px;line-height:13px;color:#333;transform:scaleX(1.0677);">Remove</span><span id="t136" class="t " style="left:16.20px;top:506.00px;font-size:13px;line-height:13px;color:#333;transform:scaleX(1.0763);">/~{HALF_CLK}</span><div class="a btn" style="left:111px;top:525px;width:88px;height:25px;"></div><span id="t137" class="t " style="left:127.70px;top:531.00px;font-size:13px;line-height:13px;color:#333;transform:scaleX(1.0677);">Remove</span><span id="t138" class="t " style="left:21.00px;top:531.00px;font-size:13px;line-height:13px;color:#333;transform:scaleX(1.0923);">/~{GFX_SEL}</span></div></div>
<div class="a " style="left:1721px;top:1038px;width:182px;height:1px;background:#8a9aa9"></div>
<div class="a sbtrack" style="left:1903px;top:504px;width:16px;height:535px;border-top:1px solid #7a8a99;border-right:1px solid #7a8a99"></div>
<div class="a arrbtn" style="left:1903px;top:504px;width:16px;height:16px;border-bottom:none"></div>
<div class="a arrbtn" style="left:1903px;top:1022px;width:16px;height:16px;"></div>
<svg class="a" style="left:1903px;top:504px" width="16" height="16"><path d="M4 10.5h8l-4 -4.5z" fill="#333"/></svg>
<svg class="a" style="left:1903px;top:1022px" width="16" height="16"><path d="M4 6h8l-4 4.5z" fill="#333"/></svg>
<div class="a thumbv" style="left:1903px;top:520px;width:16px;height:466px;border-right-color:#7a8a99"></div>
<div class="a " style="left:1907px;top:749px;width:9px;height:1px;background:#6382bf"></div>
<div class="a " style="left:1907px;top:751px;width:9px;height:1px;background:#6382bf"></div>
<div class="a " style="left:1907px;top:753px;width:9px;height:1px;background:#6382bf"></div>
</body></html>
